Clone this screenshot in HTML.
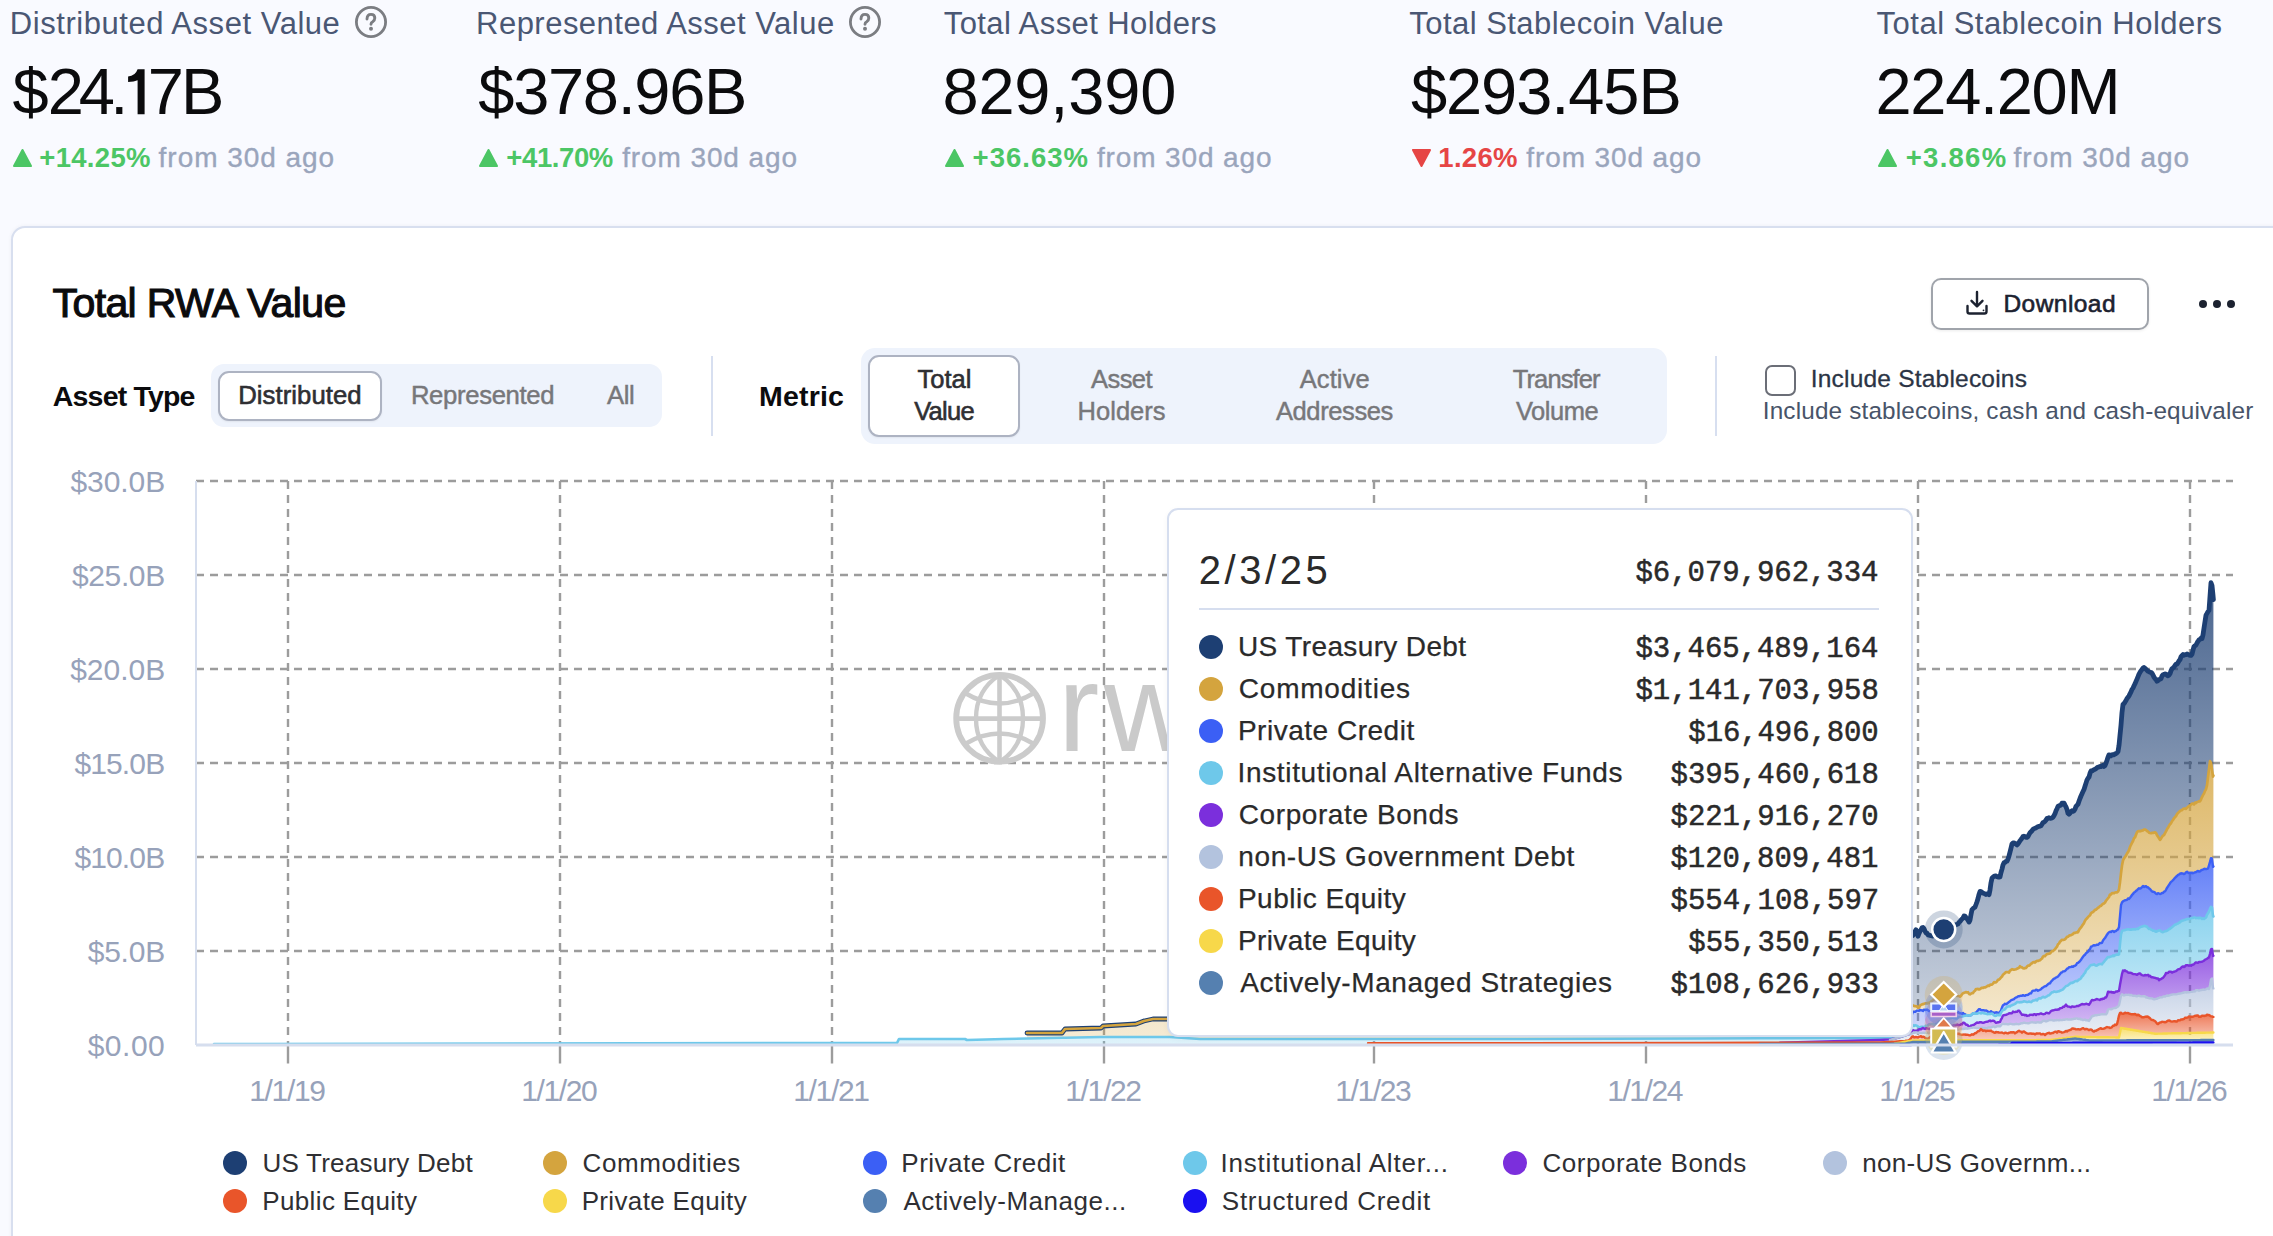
<!DOCTYPE html><html><head><meta charset="utf-8"><style>
html,body{margin:0;padding:0}
body{width:2273px;height:1236px;overflow:hidden;background:#f9faff;position:relative;font-family:'Liberation Sans', sans-serif}
.t{position:absolute;white-space:nowrap;line-height:1}
.a{position:absolute;box-sizing:border-box}
</style></head><body>
<div class="t" style="left:9.86px;top:7.76px;font-size:31px;color:#4a5774;font-weight:normal;letter-spacing:0.536px;font-family:'Liberation Sans', sans-serif;">Distributed Asset Value</div>
<div class="t" style="left:12.55px;top:59.28px;font-size:65px;color:#0b0b0d;font-weight:normal;letter-spacing:0.000px;font-family:'Liberation Sans', sans-serif;">$</div>
<div class="t" style="left:47.65px;top:59.28px;font-size:65px;color:#0b0b0d;font-weight:normal;letter-spacing:0.000px;font-family:'Liberation Sans', sans-serif;">2</div>
<div class="t" style="left:78.87px;top:59.28px;font-size:65px;color:#0b0b0d;font-weight:normal;letter-spacing:0.000px;font-family:'Liberation Sans', sans-serif;">4</div>
<div class="t" style="left:110.28px;top:59.28px;font-size:65px;color:#0b0b0d;font-weight:normal;letter-spacing:0.000px;font-family:'Liberation Sans', sans-serif;">.</div>
<div class="t" style="left:147.69px;top:59.28px;font-size:65px;color:#0b0b0d;font-weight:normal;letter-spacing:0.000px;font-family:'Liberation Sans', sans-serif;">7</div>
<div class="t" style="left:181.07px;top:59.28px;font-size:65px;color:#0b0b0d;font-weight:normal;letter-spacing:0.000px;font-family:'Liberation Sans', sans-serif;">B</div>
<svg class="a" style="left:120px;top:60px" width="30" height="60" viewBox="120 60 30 60"><path d="M137.6 69.2 H144.6 V114.3 H137.6 V80.2 Q134.2 81.9 128.1 81.9 V76.4 Q135.3 76 137.6 69.2 Z" fill="#0b0b0d"/></svg>
<svg class="a" style="left:11.8px;top:148px" width="21" height="20" viewBox="0 0 21 20"><path d="M10.5 2 L19 18 L2 18 Z" fill="#4cc665" stroke="#4cc665" stroke-width="2" stroke-linejoin="round"/></svg>
<div class="t" style="left:39.34px;top:144.02px;font-size:27.5px;color:#4cc665;font-weight:bold;letter-spacing:0.293px;font-family:'Liberation Sans', sans-serif;">+14.25%</div>
<div class="t" style="left:158.61px;top:143.60px;font-size:28px;color:#9aa5bc;font-weight:normal;letter-spacing:0.960px;font-family:'Liberation Sans', sans-serif;-webkit-text-stroke:0.35px #9aa5bc;">from 30d ago</div>
<div class="t" style="left:476.06px;top:7.76px;font-size:31px;color:#4a5774;font-weight:normal;letter-spacing:0.480px;font-family:'Liberation Sans', sans-serif;">Represented Asset Value</div>
<div class="t" style="left:478.35px;top:59.28px;font-size:65px;color:#0b0b0d;font-weight:normal;letter-spacing:-1.329px;font-family:'Liberation Sans', sans-serif;">$378.96B</div>
<svg class="a" style="left:478.0px;top:148px" width="21" height="20" viewBox="0 0 21 20"><path d="M10.5 2 L19 18 L2 18 Z" fill="#4cc665" stroke="#4cc665" stroke-width="2" stroke-linejoin="round"/></svg>
<div class="t" style="left:506.35px;top:144.02px;font-size:27.5px;color:#4cc665;font-weight:bold;letter-spacing:-0.407px;font-family:'Liberation Sans', sans-serif;">+41.70%</div>
<div class="t" style="left:622.21px;top:143.60px;font-size:28px;color:#9aa5bc;font-weight:normal;letter-spacing:0.888px;font-family:'Liberation Sans', sans-serif;-webkit-text-stroke:0.35px #9aa5bc;">from 30d ago</div>
<div class="t" style="left:943.72px;top:7.76px;font-size:31px;color:#4a5774;font-weight:normal;letter-spacing:0.419px;font-family:'Liberation Sans', sans-serif;">Total Asset Holders</div>
<div class="t" style="left:942.41px;top:59.28px;font-size:65px;color:#0b0b0d;font-weight:normal;letter-spacing:-0.168px;font-family:'Liberation Sans', sans-serif;">829,390</div>
<svg class="a" style="left:944.0px;top:148px" width="21" height="20" viewBox="0 0 21 20"><path d="M10.5 2 L19 18 L2 18 Z" fill="#4cc665" stroke="#4cc665" stroke-width="2" stroke-linejoin="round"/></svg>
<div class="t" style="left:972.55px;top:144.02px;font-size:27.5px;color:#4cc665;font-weight:bold;letter-spacing:1.026px;font-family:'Liberation Sans', sans-serif;">+36.63%</div>
<div class="t" style="left:1096.91px;top:143.60px;font-size:28px;color:#9aa5bc;font-weight:normal;letter-spacing:0.879px;font-family:'Liberation Sans', sans-serif;-webkit-text-stroke:0.35px #9aa5bc;">from 30d ago</div>
<div class="t" style="left:1409.32px;top:7.76px;font-size:31px;color:#4a5774;font-weight:normal;letter-spacing:0.457px;font-family:'Liberation Sans', sans-serif;">Total Stablecoin Value</div>
<div class="t" style="left:1410.95px;top:59.28px;font-size:65px;color:#0b0b0d;font-weight:normal;letter-spacing:-1.071px;font-family:'Liberation Sans', sans-serif;">$293.45B</div>
<svg class="a" style="left:1410.6px;top:148px" width="21" height="20" viewBox="0 0 21 20"><path d="M2 2 L19 2 L10.5 18 Z" fill="#e64545" stroke="#e64545" stroke-width="2" stroke-linejoin="round"/></svg>
<div class="t" style="left:1438.30px;top:144.02px;font-size:27.5px;color:#e64545;font-weight:bold;letter-spacing:0.314px;font-family:'Liberation Sans', sans-serif;">1.26%</div>
<div class="t" style="left:1526.31px;top:143.60px;font-size:28px;color:#9aa5bc;font-weight:normal;letter-spacing:0.888px;font-family:'Liberation Sans', sans-serif;-webkit-text-stroke:0.35px #9aa5bc;">from 30d ago</div>
<div class="t" style="left:1876.62px;top:7.76px;font-size:31px;color:#4a5774;font-weight:normal;letter-spacing:0.487px;font-family:'Liberation Sans', sans-serif;">Total Stablecoin Holders</div>
<div class="t" style="left:1875.45px;top:59.28px;font-size:65px;color:#0b0b0d;font-weight:normal;letter-spacing:-1.300px;font-family:'Liberation Sans', sans-serif;">224.20M</div>
<svg class="a" style="left:1877.0px;top:148px" width="21" height="20" viewBox="0 0 21 20"><path d="M10.5 2 L19 18 L2 18 Z" fill="#4cc665" stroke="#4cc665" stroke-width="2" stroke-linejoin="round"/></svg>
<div class="t" style="left:1905.75px;top:144.02px;font-size:27.5px;color:#4cc665;font-weight:bold;letter-spacing:1.269px;font-family:'Liberation Sans', sans-serif;">+3.86%</div>
<div class="t" style="left:2013.61px;top:143.60px;font-size:28px;color:#9aa5bc;font-weight:normal;letter-spacing:0.960px;font-family:'Liberation Sans', sans-serif;-webkit-text-stroke:0.35px #9aa5bc;">from 30d ago</div>
<svg class="a" style="left:354px;top:5.1px" width="34" height="34" viewBox="0 0 34 34"><circle cx="17" cy="17" r="14.6" fill="none" stroke="#7b7d82" stroke-width="2.8"/><path d="M13 14 Q13.2 9.4 17 9.4 Q20.8 9.4 20.8 13.1 Q20.8 15.5 18.7 16.7 Q17 17.6 17 19.2" fill="none" stroke="#7b7d82" stroke-width="2.9" stroke-linecap="round" stroke-linejoin="round"/><circle cx="17" cy="23.8" r="2" fill="#7b7d82"/></svg>
<svg class="a" style="left:848px;top:5.1px" width="34" height="34" viewBox="0 0 34 34"><circle cx="17" cy="17" r="14.6" fill="none" stroke="#7b7d82" stroke-width="2.8"/><path d="M13 14 Q13.2 9.4 17 9.4 Q20.8 9.4 20.8 13.1 Q20.8 15.5 18.7 16.7 Q17 17.6 17 19.2" fill="none" stroke="#7b7d82" stroke-width="2.9" stroke-linecap="round" stroke-linejoin="round"/><circle cx="17" cy="23.8" r="2" fill="#7b7d82"/></svg>
<div class="a" style="left:11px;top:226px;width:2300px;height:1100px;border:2px solid #d8dfef;border-radius:14px;background:#fff;box-shadow:0 0 4px rgba(20,30,60,0.05)"></div>
<div class="t" style="left:52.60px;top:283.09px;font-size:41px;color:#0b0b0d;font-weight:normal;letter-spacing:-0.623px;font-family:'Liberation Sans', sans-serif;-webkit-text-stroke:1.1px #0b0b0d;">Total RWA Value</div>
<div class="a" style="left:1931px;top:278px;width:218px;height:52px;border:2px solid #a0a4ab;border-radius:10px;background:#fff;box-shadow:0 1px 3px rgba(0,0,0,0.08)"></div>
<svg class="a" style="left:1962px;top:288px" width="30" height="30" viewBox="0 0 30 30"><path d="M15 4 V18 M9.5 12.8 L15 18.3 L20.5 12.8" fill="none" stroke="#1c2230" stroke-width="2.4" stroke-linecap="round" stroke-linejoin="round"/><path d="M5.5 18 V23.5 Q5.5 25.5 7.5 25.5 H22.5 Q24.5 25.5 24.5 23.5 V18" fill="none" stroke="#1c2230" stroke-width="2.4" stroke-linecap="round" stroke-linejoin="round"/><circle cx="21.5" cy="22.3" r="0.9" fill="#1c2230"/></svg>
<div class="t" style="left:2003.49px;top:291.86px;font-size:24.5px;color:#1c2230;font-weight:normal;letter-spacing:0.447px;font-family:'Liberation Sans', sans-serif;-webkit-text-stroke:0.6px #1c2230;">Download</div>
<div class="a" style="left:2199px;top:300px;width:8px;height:8px;border-radius:50%;background:#1c2230"></div>
<div class="a" style="left:2213px;top:300px;width:8px;height:8px;border-radius:50%;background:#1c2230"></div>
<div class="a" style="left:2227px;top:300px;width:8px;height:8px;border-radius:50%;background:#1c2230"></div>
<div class="t" style="left:52.82px;top:381.57px;font-size:28.5px;color:#0b0b0d;font-weight:bold;letter-spacing:-0.821px;font-family:'Liberation Sans', sans-serif;">Asset Type</div>
<div class="a" style="left:211px;top:364px;width:451px;height:63px;border-radius:13px;background:#eef3fc"></div>
<div class="a" style="left:218px;top:371px;width:164px;height:50px;border:2px solid #adb3c2;border-radius:11px;background:#fff;box-shadow:0 1px 2px rgba(0,0,0,0.06)"></div>
<div class="t" style="left:238.19px;top:382.84px;font-size:25.7px;color:#2f2f33;font-weight:normal;letter-spacing:0.061px;font-family:'Liberation Sans', sans-serif;-webkit-text-stroke:0.6px #2f2f33;">Distributed</div>
<div class="t" style="left:410.89px;top:382.84px;font-size:25.7px;color:#77777a;font-weight:normal;letter-spacing:-0.341px;font-family:'Liberation Sans', sans-serif;-webkit-text-stroke:0.45px #77777a;">Represented</div>
<div class="t" style="left:606.95px;top:382.84px;font-size:25.7px;color:#77777a;font-weight:normal;letter-spacing:-0.403px;font-family:'Liberation Sans', sans-serif;-webkit-text-stroke:0.45px #77777a;">All</div>
<div class="a" style="left:711px;top:356px;width:2px;height:80px;background:#d7dff0"></div>
<div class="t" style="left:759.12px;top:381.57px;font-size:28.5px;color:#0b0b0d;font-weight:bold;letter-spacing:0.155px;font-family:'Liberation Sans', sans-serif;">Metric</div>
<div class="a" style="left:861px;top:348px;width:806px;height:96px;border-radius:14px;background:#eef3fc"></div>
<div class="a" style="left:868px;top:355px;width:152px;height:82px;border:2px solid #adb3c2;border-radius:11px;background:#fff;box-shadow:0 1px 2px rgba(0,0,0,0.06)"></div>
<div class="t" style="left:917.54px;top:366.61px;font-size:25.5px;color:#2f2f33;font-weight:normal;letter-spacing:0.022px;font-family:'Liberation Sans', sans-serif;-webkit-text-stroke:0.6px #2f2f33;">Total</div>
<div class="t" style="left:914.20px;top:398.71px;font-size:25.5px;color:#2f2f33;font-weight:normal;letter-spacing:-0.698px;font-family:'Liberation Sans', sans-serif;-webkit-text-stroke:0.6px #2f2f33;">Value</div>
<div class="t" style="left:1091.05px;top:366.61px;font-size:25.5px;color:#77777a;font-weight:normal;letter-spacing:-0.561px;font-family:'Liberation Sans', sans-serif;-webkit-text-stroke:0.45px #77777a;">Asset</div>
<div class="t" style="left:1077.61px;top:398.71px;font-size:25.5px;color:#77777a;font-weight:normal;letter-spacing:0.006px;font-family:'Liberation Sans', sans-serif;-webkit-text-stroke:0.45px #77777a;">Holders</div>
<div class="t" style="left:1299.65px;top:366.61px;font-size:25.5px;color:#77777a;font-weight:normal;letter-spacing:0.127px;font-family:'Liberation Sans', sans-serif;-webkit-text-stroke:0.45px #77777a;">Active</div>
<div class="t" style="left:1275.95px;top:398.71px;font-size:25.5px;color:#77777a;font-weight:normal;letter-spacing:-0.390px;font-family:'Liberation Sans', sans-serif;-webkit-text-stroke:0.45px #77777a;">Addresses</div>
<div class="t" style="left:1512.74px;top:366.61px;font-size:25.5px;color:#77777a;font-weight:normal;letter-spacing:-0.875px;font-family:'Liberation Sans', sans-serif;-webkit-text-stroke:0.45px #77777a;">Transfer</div>
<div class="t" style="left:1515.90px;top:398.71px;font-size:25.5px;color:#77777a;font-weight:normal;letter-spacing:-0.464px;font-family:'Liberation Sans', sans-serif;-webkit-text-stroke:0.45px #77777a;">Volume</div>
<div class="a" style="left:1715px;top:356px;width:2px;height:80px;background:#d7dff0"></div>
<div class="a" style="left:1765px;top:365px;width:31px;height:31px;border:2px solid #6b6e77;border-radius:7px;background:#fff"></div>
<div class="t" style="left:1810.75px;top:367.26px;font-size:24.5px;color:#2b3445;font-weight:normal;letter-spacing:0.204px;font-family:'Liberation Sans', sans-serif;-webkit-text-stroke:0.3px #2b3445;">Include Stablecoins</div>
<div class="t" style="left:1762.76px;top:398.83px;font-size:24.3px;color:#485469;font-weight:normal;letter-spacing:0.163px;font-family:'Liberation Sans', sans-serif;">Include stablecoins, cash and cash-equivaler</div>
<div class="t" style="left:70.40px;top:466.61px;font-size:30px;color:#97a2ba;font-weight:normal;letter-spacing:-0.062px;font-family:'Liberation Sans', sans-serif;">$30.0B</div>
<div class="t" style="left:72.00px;top:560.61px;font-size:30px;color:#97a2ba;font-weight:normal;letter-spacing:-0.382px;font-family:'Liberation Sans', sans-serif;">$25.0B</div>
<div class="t" style="left:70.20px;top:654.61px;font-size:30px;color:#97a2ba;font-weight:normal;letter-spacing:-0.022px;font-family:'Liberation Sans', sans-serif;">$20.0B</div>
<div class="t" style="left:74.40px;top:748.61px;font-size:30px;color:#97a2ba;font-weight:normal;letter-spacing:-0.862px;font-family:'Liberation Sans', sans-serif;">$15.0B</div>
<div class="t" style="left:74.40px;top:842.61px;font-size:30px;color:#97a2ba;font-weight:normal;letter-spacing:-0.862px;font-family:'Liberation Sans', sans-serif;">$10.0B</div>
<div class="t" style="left:87.70px;top:936.61px;font-size:30px;color:#97a2ba;font-weight:normal;letter-spacing:-0.233px;font-family:'Liberation Sans', sans-serif;">$5.0B</div>
<div class="t" style="left:87.70px;top:1030.61px;font-size:30px;color:#97a2ba;font-weight:normal;letter-spacing:0.495px;font-family:'Liberation Sans', sans-serif;">$0.00</div>
<div class="t" style="left:249.22px;top:1076.31px;font-size:30px;color:#97a2ba;font-weight:normal;letter-spacing:-1.342px;font-family:'Liberation Sans', sans-serif;">1/1/19</div>
<div class="t" style="left:521.22px;top:1076.31px;font-size:30px;color:#97a2ba;font-weight:normal;letter-spacing:-1.396px;font-family:'Liberation Sans', sans-serif;">1/1/20</div>
<div class="t" style="left:793.22px;top:1076.31px;font-size:30px;color:#97a2ba;font-weight:normal;letter-spacing:-1.336px;font-family:'Liberation Sans', sans-serif;">1/1/21</div>
<div class="t" style="left:1065.22px;top:1076.31px;font-size:30px;color:#97a2ba;font-weight:normal;letter-spacing:-1.324px;font-family:'Liberation Sans', sans-serif;">1/1/22</div>
<div class="t" style="left:1335.22px;top:1076.31px;font-size:30px;color:#97a2ba;font-weight:normal;letter-spacing:-1.366px;font-family:'Liberation Sans', sans-serif;">1/1/23</div>
<div class="t" style="left:1607.22px;top:1076.31px;font-size:30px;color:#97a2ba;font-weight:normal;letter-spacing:-1.450px;font-family:'Liberation Sans', sans-serif;">1/1/24</div>
<div class="t" style="left:1879.22px;top:1076.31px;font-size:30px;color:#97a2ba;font-weight:normal;letter-spacing:-1.378px;font-family:'Liberation Sans', sans-serif;">1/1/25</div>
<div class="t" style="left:2151.22px;top:1076.31px;font-size:30px;color:#97a2ba;font-weight:normal;letter-spacing:-1.366px;font-family:'Liberation Sans', sans-serif;">1/1/26</div>
<svg class="a" style="left:0;top:0" width="2273" height="1236" viewBox="0 0 2273 1236">
<line x1="196" y1="481" x2="2233" y2="481" stroke="#9c9c9c" stroke-width="2.4" stroke-dasharray="8 6"/>
<line x1="196" y1="575" x2="2233" y2="575" stroke="#9c9c9c" stroke-width="2.4" stroke-dasharray="8 6"/>
<line x1="196" y1="669" x2="2233" y2="669" stroke="#9c9c9c" stroke-width="2.4" stroke-dasharray="8 6"/>
<line x1="196" y1="763" x2="2233" y2="763" stroke="#9c9c9c" stroke-width="2.4" stroke-dasharray="8 6"/>
<line x1="196" y1="857" x2="2233" y2="857" stroke="#9c9c9c" stroke-width="2.4" stroke-dasharray="8 6"/>
<line x1="196" y1="951" x2="2233" y2="951" stroke="#9c9c9c" stroke-width="2.4" stroke-dasharray="8 6"/>
<line x1="288" y1="481" x2="288" y2="1045" stroke="#9c9c9c" stroke-width="2.4" stroke-dasharray="8 6"/>
<line x1="288" y1="1045" x2="288" y2="1063.5" stroke="#9c9c9c" stroke-width="2.4"/>
<line x1="560" y1="481" x2="560" y2="1045" stroke="#9c9c9c" stroke-width="2.4" stroke-dasharray="8 6"/>
<line x1="560" y1="1045" x2="560" y2="1063.5" stroke="#9c9c9c" stroke-width="2.4"/>
<line x1="832" y1="481" x2="832" y2="1045" stroke="#9c9c9c" stroke-width="2.4" stroke-dasharray="8 6"/>
<line x1="832" y1="1045" x2="832" y2="1063.5" stroke="#9c9c9c" stroke-width="2.4"/>
<line x1="1104" y1="481" x2="1104" y2="1045" stroke="#9c9c9c" stroke-width="2.4" stroke-dasharray="8 6"/>
<line x1="1104" y1="1045" x2="1104" y2="1063.5" stroke="#9c9c9c" stroke-width="2.4"/>
<line x1="1374" y1="481" x2="1374" y2="1045" stroke="#9c9c9c" stroke-width="2.4" stroke-dasharray="8 6"/>
<line x1="1374" y1="1045" x2="1374" y2="1063.5" stroke="#9c9c9c" stroke-width="2.4"/>
<line x1="1646" y1="481" x2="1646" y2="1045" stroke="#9c9c9c" stroke-width="2.4" stroke-dasharray="8 6"/>
<line x1="1646" y1="1045" x2="1646" y2="1063.5" stroke="#9c9c9c" stroke-width="2.4"/>
<line x1="1918" y1="481" x2="1918" y2="1045" stroke="#9c9c9c" stroke-width="2.4" stroke-dasharray="8 6"/>
<line x1="1918" y1="1045" x2="1918" y2="1063.5" stroke="#9c9c9c" stroke-width="2.4"/>
<line x1="2190" y1="481" x2="2190" y2="1045" stroke="#9c9c9c" stroke-width="2.4" stroke-dasharray="8 6"/>
<line x1="2190" y1="1045" x2="2190" y2="1063.5" stroke="#9c9c9c" stroke-width="2.4"/>
<line x1="196" y1="481" x2="196" y2="1045" stroke="#d6deee" stroke-width="2"/>
<defs>
<linearGradient id="g0" x1="0" y1="0" x2="0" y2="1"><stop offset="0" stop-color="#1a10f0" stop-opacity="0.8"/><stop offset="1" stop-color="#1a10f0" stop-opacity="0.22"/></linearGradient>
<linearGradient id="g1" x1="0" y1="0" x2="0" y2="1"><stop offset="0" stop-color="#5580b0" stop-opacity="0.8"/><stop offset="1" stop-color="#5580b0" stop-opacity="0.22"/></linearGradient>
<linearGradient id="g2" x1="0" y1="0" x2="0" y2="1"><stop offset="0" stop-color="#f7d84a" stop-opacity="0.8"/><stop offset="1" stop-color="#f7d84a" stop-opacity="0.22"/></linearGradient>
<linearGradient id="g3" x1="0" y1="0" x2="0" y2="1"><stop offset="0" stop-color="#e9552a" stop-opacity="0.8"/><stop offset="1" stop-color="#e9552a" stop-opacity="0.22"/></linearGradient>
<linearGradient id="g4" x1="0" y1="0" x2="0" y2="1"><stop offset="0" stop-color="#b3c3de" stop-opacity="0.8"/><stop offset="1" stop-color="#b3c3de" stop-opacity="0.22"/></linearGradient>
<linearGradient id="g5" x1="0" y1="0" x2="0" y2="1"><stop offset="0" stop-color="#7b2fdc" stop-opacity="0.8"/><stop offset="1" stop-color="#7b2fdc" stop-opacity="0.22"/></linearGradient>
<linearGradient id="g6" x1="0" y1="0" x2="0" y2="1"><stop offset="0" stop-color="#6ec8ea" stop-opacity="0.8"/><stop offset="1" stop-color="#6ec8ea" stop-opacity="0.22"/></linearGradient>
<linearGradient id="g7" x1="0" y1="0" x2="0" y2="1"><stop offset="0" stop-color="#3b5ff5" stop-opacity="0.8"/><stop offset="1" stop-color="#3b5ff5" stop-opacity="0.22"/></linearGradient>
<linearGradient id="g8" x1="0" y1="0" x2="0" y2="1"><stop offset="0" stop-color="#d4a43e" stop-opacity="0.8"/><stop offset="1" stop-color="#d4a43e" stop-opacity="0.22"/></linearGradient>
<linearGradient id="g9" x1="0" y1="0" x2="0" y2="1"><stop offset="0" stop-color="#1d3f73" stop-opacity="0.8"/><stop offset="1" stop-color="#1d3f73" stop-opacity="0.22"/></linearGradient>
</defs>
<polygon points="1900,1045.0 1905,1045.0 1906,1045.0 1907,1045.0 1908,1045.0 1909,1045.0 1910,1045.0 1911,1045.0 1912,1044.9 1913,1044.9 1914,1044.9 1915,1044.9 1916,1044.9 1917,1044.9 1918,1044.9 1919,1044.9 1920,1044.9 1921,1044.9 1922,1044.9 1923,1044.9 1924,1044.9 1925,1044.9 1926,1044.9 1927,1044.9 1928,1044.9 1929,1044.9 1930,1044.9 1931,1044.9 1932,1044.9 1933,1044.8 1934,1044.8 1935,1044.8 1936,1044.8 1937,1044.8 1938,1044.8 1939,1044.8 1940,1044.8 1941,1044.8 1942,1044.8 1943,1044.8 1944,1044.8 1945,1044.8 1946,1044.8 1947,1044.8 1948,1044.8 1949,1044.8 1950,1044.8 1951,1044.8 1952,1044.8 1953,1044.8 1954,1044.8 1955,1044.8 1956,1044.7 1957,1044.7 1958,1044.7 1959,1044.7 1960,1044.7 1961,1044.7 1962,1044.7 1963,1044.7 1964,1044.7 1965,1044.7 1966,1044.7 1967,1044.7 1968,1044.7 1969,1044.7 1970,1044.7 1971,1044.7 1972,1044.7 1973,1044.7 1974,1044.7 1975,1044.7 1976,1044.7 1977,1044.7 1978,1044.6 1979,1044.6 1980,1044.6 1981,1044.6 1982,1044.6 1983,1044.6 1984,1044.6 1985,1044.6 1986,1044.6 1987,1044.6 1988,1044.6 1989,1044.6 1990,1044.6 1991,1044.6 1992,1044.6 1993,1044.6 1994,1044.6 1995,1044.6 1996,1044.6 1997,1044.6 1998,1044.6 1999,1044.5 2000,1044.5 2001,1044.5 2002,1044.5 2003,1044.5 2004,1044.5 2005,1044.5 2006,1044.5 2007,1044.5 2008,1044.5 2009,1044.5 2010,1044.5 2011,1043.8 2012,1043.0 2013,1043.0 2014,1043.0 2015,1043.0 2016,1043.0 2017,1043.0 2018,1043.0 2019,1043.0 2020,1043.0 2021,1043.0 2022,1043.0 2023,1043.0 2024,1043.0 2025,1043.0 2026,1043.0 2027,1043.0 2028,1043.0 2029,1043.0 2030,1043.0 2031,1043.0 2032,1043.0 2033,1042.9 2034,1042.9 2035,1042.9 2036,1042.9 2037,1042.9 2038,1042.9 2039,1042.9 2040,1042.9 2041,1042.9 2042,1042.9 2043,1042.9 2044,1042.9 2045,1042.9 2046,1042.9 2047,1042.9 2048,1042.9 2049,1042.9 2050,1042.9 2051,1042.9 2052,1042.9 2053,1042.9 2054,1042.9 2055,1042.9 2056,1042.9 2057,1042.9 2058,1042.9 2059,1042.9 2060,1042.9 2061,1042.9 2062,1042.9 2063,1042.9 2064,1042.9 2065,1042.9 2066,1042.9 2067,1042.9 2068,1042.9 2069,1042.9 2070,1042.9 2071,1042.9 2072,1042.9 2073,1042.8 2074,1042.8 2075,1042.8 2076,1042.8 2077,1042.8 2078,1042.8 2079,1042.8 2080,1042.8 2081,1042.8 2082,1042.8 2083,1042.8 2084,1042.8 2085,1042.8 2086,1042.8 2087,1042.8 2088,1042.8 2089,1042.8 2090,1042.8 2091,1042.8 2092,1042.8 2093,1042.8 2094,1042.8 2095,1042.8 2096,1042.8 2097,1042.8 2098,1042.8 2099,1042.8 2100,1042.8 2101,1042.8 2102,1042.8 2103,1042.8 2104,1042.8 2105,1042.8 2106,1042.8 2107,1042.8 2108,1042.8 2109,1042.8 2110,1042.8 2111,1042.8 2112,1042.8 2113,1042.7 2114,1042.7 2115,1042.7 2116,1042.7 2117,1042.7 2118,1042.7 2119,1042.7 2120,1042.7 2121,1042.7 2122,1042.7 2123,1042.7 2124,1042.7 2125,1042.7 2126,1042.7 2127,1042.7 2128,1042.7 2129,1042.7 2130,1042.7 2131,1042.7 2132,1042.7 2133,1042.7 2134,1042.7 2135,1042.7 2136,1042.7 2137,1042.7 2138,1042.7 2139,1042.7 2140,1042.7 2141,1042.7 2142,1042.7 2143,1042.7 2144,1042.7 2145,1042.7 2146,1042.7 2147,1042.7 2148,1042.7 2149,1042.7 2150,1042.7 2151,1042.7 2152,1042.7 2153,1042.6 2154,1042.6 2155,1042.6 2156,1042.6 2157,1042.6 2158,1042.6 2159,1042.6 2160,1042.6 2161,1042.6 2162,1042.6 2163,1042.6 2164,1042.6 2165,1042.6 2166,1042.6 2167,1042.6 2168,1042.6 2169,1042.6 2170,1042.6 2171,1042.6 2172,1042.6 2173,1042.6 2174,1042.6 2175,1042.6 2176,1042.6 2177,1042.6 2178,1042.6 2179,1042.6 2180,1042.6 2181,1042.6 2182,1042.6 2183,1042.6 2184,1042.6 2185,1042.6 2186,1042.6 2187,1042.6 2188,1042.6 2189,1042.6 2190,1042.6 2191,1042.6 2192,1042.6 2193,1042.5 2194,1042.5 2195,1042.5 2196,1042.5 2197,1042.5 2198,1042.5 2199,1042.5 2200,1042.5 2201,1042.5 2202,1042.5 2203,1042.5 2204,1042.5 2205,1042.5 2206,1042.5 2207,1042.5 2208,1042.5 2209,1042.5 2210,1042.5 2211,1042.5 2212,1042.5 2213,1042.5 2213.4,1042.5 2213.4,1045.0 2213,1045.0 2212,1045.0 2211,1045.0 2210,1045.0 2209,1045.0 2208,1045.0 2207,1045.0 2206,1045.0 2205,1045.0 2204,1045.0 2203,1045.0 2202,1045.0 2201,1045.0 2200,1045.0 2199,1045.0 2198,1045.0 2197,1045.0 2196,1045.0 2195,1045.0 2194,1045.0 2193,1045.0 2192,1045.0 2191,1045.0 2190,1045.0 2189,1045.0 2188,1045.0 2187,1045.0 2186,1045.0 2185,1045.0 2184,1045.0 2183,1045.0 2182,1045.0 2181,1045.0 2180,1045.0 2179,1045.0 2178,1045.0 2177,1045.0 2176,1045.0 2175,1045.0 2174,1045.0 2173,1045.0 2172,1045.0 2171,1045.0 2170,1045.0 2169,1045.0 2168,1045.0 2167,1045.0 2166,1045.0 2165,1045.0 2164,1045.0 2163,1045.0 2162,1045.0 2161,1045.0 2160,1045.0 2159,1045.0 2158,1045.0 2157,1045.0 2156,1045.0 2155,1045.0 2154,1045.0 2153,1045.0 2152,1045.0 2151,1045.0 2150,1045.0 2149,1045.0 2148,1045.0 2147,1045.0 2146,1045.0 2145,1045.0 2144,1045.0 2143,1045.0 2142,1045.0 2141,1045.0 2140,1045.0 2139,1045.0 2138,1045.0 2137,1045.0 2136,1045.0 2135,1045.0 2134,1045.0 2133,1045.0 2132,1045.0 2131,1045.0 2130,1045.0 2129,1045.0 2128,1045.0 2127,1045.0 2126,1045.0 2125,1045.0 2124,1045.0 2123,1045.0 2122,1045.0 2121,1045.0 2120,1045.0 2119,1045.0 2118,1045.0 2117,1045.0 2116,1045.0 2115,1045.0 2114,1045.0 2113,1045.0 2112,1045.0 2111,1045.0 2110,1045.0 2109,1045.0 2108,1045.0 2107,1045.0 2106,1045.0 2105,1045.0 2104,1045.0 2103,1045.0 2102,1045.0 2101,1045.0 2100,1045.0 2099,1045.0 2098,1045.0 2097,1045.0 2096,1045.0 2095,1045.0 2094,1045.0 2093,1045.0 2092,1045.0 2091,1045.0 2090,1045.0 2089,1045.0 2088,1045.0 2087,1045.0 2086,1045.0 2085,1045.0 2084,1045.0 2083,1045.0 2082,1045.0 2081,1045.0 2080,1045.0 2079,1045.0 2078,1045.0 2077,1045.0 2076,1045.0 2075,1045.0 2074,1045.0 2073,1045.0 2072,1045.0 2071,1045.0 2070,1045.0 2069,1045.0 2068,1045.0 2067,1045.0 2066,1045.0 2065,1045.0 2064,1045.0 2063,1045.0 2062,1045.0 2061,1045.0 2060,1045.0 2059,1045.0 2058,1045.0 2057,1045.0 2056,1045.0 2055,1045.0 2054,1045.0 2053,1045.0 2052,1045.0 2051,1045.0 2050,1045.0 2049,1045.0 2048,1045.0 2047,1045.0 2046,1045.0 2045,1045.0 2044,1045.0 2043,1045.0 2042,1045.0 2041,1045.0 2040,1045.0 2039,1045.0 2038,1045.0 2037,1045.0 2036,1045.0 2035,1045.0 2034,1045.0 2033,1045.0 2032,1045.0 2031,1045.0 2030,1045.0 2029,1045.0 2028,1045.0 2027,1045.0 2026,1045.0 2025,1045.0 2024,1045.0 2023,1045.0 2022,1045.0 2021,1045.0 2020,1045.0 2019,1045.0 2018,1045.0 2017,1045.0 2016,1045.0 2015,1045.0 2014,1045.0 2013,1045.0 2012,1045.0 2011,1045.0 2010,1045.0 2009,1045.0 2008,1045.0 2007,1045.0 2006,1045.0 2005,1045.0 2004,1045.0 2003,1045.0 2002,1045.0 2001,1045.0 2000,1045.0 1999,1045.0 1998,1045.0 1997,1045.0 1996,1045.0 1995,1045.0 1994,1045.0 1993,1045.0 1992,1045.0 1991,1045.0 1990,1045.0 1989,1045.0 1988,1045.0 1987,1045.0 1986,1045.0 1985,1045.0 1984,1045.0 1983,1045.0 1982,1045.0 1981,1045.0 1980,1045.0 1979,1045.0 1978,1045.0 1977,1045.0 1976,1045.0 1975,1045.0 1974,1045.0 1973,1045.0 1972,1045.0 1971,1045.0 1970,1045.0 1969,1045.0 1968,1045.0 1967,1045.0 1966,1045.0 1965,1045.0 1964,1045.0 1963,1045.0 1962,1045.0 1961,1045.0 1960,1045.0 1959,1045.0 1958,1045.0 1957,1045.0 1956,1045.0 1955,1045.0 1954,1045.0 1953,1045.0 1952,1045.0 1951,1045.0 1950,1045.0 1949,1045.0 1948,1045.0 1947,1045.0 1946,1045.0 1945,1045.0 1944,1045.0 1943,1045.0 1942,1045.0 1941,1045.0 1940,1045.0 1939,1045.0 1938,1045.0 1937,1045.0 1936,1045.0 1935,1045.0 1934,1045.0 1933,1045.0 1932,1045.0 1931,1045.0 1930,1045.0 1929,1045.0 1928,1045.0 1927,1045.0 1926,1045.0 1925,1045.0 1924,1045.0 1923,1045.0 1922,1045.0 1921,1045.0 1920,1045.0 1919,1045.0 1918,1045.0 1917,1045.0 1916,1045.0 1915,1045.0 1914,1045.0 1913,1045.0 1912,1045.0 1911,1045.0 1910,1045.0 1909,1045.0 1908,1045.0 1907,1045.0 1906,1045.0 1905,1045.0 1900,1045.0" fill="url(#g0)"/>
<polygon points="1760,1044.0 1779.9,1043.9 1780,1043.9 1869.9,1043.7 1870,1043.7 1879.9,1043.7 1880,1043.7 1889.9,1043.6 1890,1043.6 1894.9,1043.6 1895,1043.6 1899.9,1043.6 1900,1043.6 1905,1043.6 1906,1043.4 1907,1043.2 1908,1043.0 1909,1042.8 1910,1042.6 1911,1042.4 1912,1042.2 1913,1042.0 1914,1042.0 1915,1042.0 1916,1042.0 1917,1042.0 1918,1042.0 1919,1042.0 1920,1042.0 1921,1042.0 1922,1042.0 1923,1042.0 1924,1042.0 1925,1042.0 1926,1042.0 1927,1041.9 1928,1041.9 1929,1041.9 1930,1041.9 1931,1041.9 1932,1041.9 1933,1041.9 1934,1041.9 1935,1041.9 1936,1041.9 1937,1041.9 1938,1041.9 1939,1041.9 1940,1041.9 1941,1041.9 1942,1041.9 1943,1041.9 1944,1041.9 1945,1041.9 1946,1041.9 1947,1041.9 1948,1041.9 1949,1041.9 1950,1041.9 1951,1041.9 1952,1041.9 1953,1041.9 1954,1041.9 1955,1041.8 1956,1041.8 1957,1041.8 1958,1041.8 1959,1041.8 1960,1041.8 1961,1041.8 1962,1041.8 1963,1041.8 1964,1041.8 1965,1041.8 1966,1041.8 1967,1041.8 1968,1041.8 1969,1041.8 1970,1041.8 1971,1041.8 1972,1041.8 1973,1041.8 1974,1041.8 1975,1041.8 1976,1041.8 1977,1041.8 1978,1041.8 1979,1041.8 1980,1041.8 1981,1041.8 1982,1041.7 1983,1041.7 1984,1041.7 1985,1041.7 1986,1041.7 1987,1041.7 1988,1041.7 1989,1041.7 1990,1041.7 1991,1041.7 1992,1041.7 1993,1041.7 1994,1041.7 1995,1041.7 1996,1041.7 1997,1041.7 1998,1041.7 1999,1041.7 2000,1041.7 2001,1041.7 2002,1041.7 2003,1041.7 2004,1041.7 2005,1041.7 2006,1041.7 2007,1041.7 2008,1041.7 2009,1041.6 2010,1041.6 2011,1041.6 2012,1041.6 2013,1041.6 2014,1041.6 2015,1041.6 2016,1041.6 2017,1041.6 2018,1041.6 2019,1041.6 2020,1041.6 2021,1041.6 2022,1041.6 2023,1041.6 2024,1041.6 2025,1041.6 2026,1041.6 2027,1041.6 2028,1041.6 2029,1041.6 2030,1041.6 2031,1041.6 2032,1041.6 2033,1041.6 2034,1041.6 2035,1041.6 2036,1041.6 2037,1041.5 2038,1041.5 2039,1041.5 2040,1041.5 2041,1041.5 2042,1041.5 2043,1041.5 2044,1041.5 2045,1041.5 2046,1041.5 2047,1041.5 2048,1041.5 2049,1041.5 2050,1041.5 2051,1041.4 2052,1041.3 2053,1041.1 2054,1041.0 2055,1040.9 2056,1040.8 2057,1040.7 2058,1040.5 2059,1040.4 2060,1040.3 2061,1040.2 2062,1040.1 2063,1039.9 2064,1039.8 2065,1039.7 2066,1039.6 2067,1039.5 2068,1039.3 2069,1039.2 2070,1039.1 2071,1039.0 2072,1038.9 2073,1038.7 2074,1038.6 2075,1038.5 2076,1038.6 2077,1038.8 2078,1038.9 2079,1039.0 2080,1039.2 2081,1039.3 2082,1039.4 2083,1039.6 2084,1039.7 2085,1039.8 2086,1040.0 2087,1040.1 2088,1040.2 2089,1040.4 2090,1040.5 2091,1040.5 2092,1040.5 2093,1040.5 2094,1040.5 2095,1040.5 2096,1040.5 2097,1040.5 2098,1040.5 2099,1040.5 2100,1040.5 2101,1040.5 2102,1040.5 2103,1040.4 2104,1040.4 2105,1040.4 2106,1040.4 2107,1040.4 2108,1040.4 2109,1040.4 2110,1040.4 2111,1040.4 2112,1040.4 2113,1040.4 2114,1040.4 2115,1040.4 2116,1040.4 2117,1040.4 2118,1040.4 2119,1040.4 2120,1040.4 2121,1040.4 2122,1040.4 2123,1040.4 2124,1040.4 2125,1040.4 2126,1040.4 2127,1040.3 2128,1040.3 2129,1040.3 2130,1040.3 2131,1040.3 2132,1040.3 2133,1040.3 2134,1040.3 2135,1040.3 2136,1040.3 2137,1040.3 2138,1040.3 2139,1040.3 2140,1040.3 2141,1040.3 2142,1040.3 2143,1040.3 2144,1040.3 2145,1040.3 2146,1040.3 2147,1040.3 2148,1040.3 2149,1040.3 2150,1040.3 2151,1040.3 2152,1040.2 2153,1040.2 2154,1040.2 2155,1040.2 2156,1040.2 2157,1040.2 2158,1040.2 2159,1040.2 2160,1040.2 2161,1040.2 2162,1040.2 2163,1040.2 2164,1040.2 2165,1040.2 2166,1040.2 2167,1040.2 2168,1040.2 2169,1040.2 2170,1040.2 2171,1040.2 2172,1040.2 2173,1040.2 2174,1040.2 2175,1040.2 2176,1040.2 2177,1040.1 2178,1040.1 2179,1040.1 2180,1040.1 2181,1040.1 2182,1040.1 2183,1040.1 2184,1040.1 2185,1040.1 2186,1040.1 2187,1040.1 2188,1040.1 2189,1040.1 2190,1040.1 2191,1040.1 2192,1040.1 2193,1040.1 2194,1040.1 2195,1040.1 2196,1040.1 2197,1040.1 2198,1040.1 2199,1040.1 2200,1040.1 2201,1040.0 2202,1040.0 2203,1040.0 2204,1040.0 2205,1040.0 2206,1040.0 2207,1040.0 2208,1040.0 2209,1040.0 2210,1040.0 2211,1040.0 2212,1040.0 2213,1040.0 2213.4,1040.0 2213.4,1042.5 2213,1042.5 2212,1042.5 2211,1042.5 2210,1042.5 2209,1042.5 2208,1042.5 2207,1042.5 2206,1042.5 2205,1042.5 2204,1042.5 2203,1042.5 2202,1042.5 2201,1042.5 2200,1042.5 2199,1042.5 2198,1042.5 2197,1042.5 2196,1042.5 2195,1042.5 2194,1042.5 2193,1042.5 2192,1042.6 2191,1042.6 2190,1042.6 2189,1042.6 2188,1042.6 2187,1042.6 2186,1042.6 2185,1042.6 2184,1042.6 2183,1042.6 2182,1042.6 2181,1042.6 2180,1042.6 2179,1042.6 2178,1042.6 2177,1042.6 2176,1042.6 2175,1042.6 2174,1042.6 2173,1042.6 2172,1042.6 2171,1042.6 2170,1042.6 2169,1042.6 2168,1042.6 2167,1042.6 2166,1042.6 2165,1042.6 2164,1042.6 2163,1042.6 2162,1042.6 2161,1042.6 2160,1042.6 2159,1042.6 2158,1042.6 2157,1042.6 2156,1042.6 2155,1042.6 2154,1042.6 2153,1042.6 2152,1042.7 2151,1042.7 2150,1042.7 2149,1042.7 2148,1042.7 2147,1042.7 2146,1042.7 2145,1042.7 2144,1042.7 2143,1042.7 2142,1042.7 2141,1042.7 2140,1042.7 2139,1042.7 2138,1042.7 2137,1042.7 2136,1042.7 2135,1042.7 2134,1042.7 2133,1042.7 2132,1042.7 2131,1042.7 2130,1042.7 2129,1042.7 2128,1042.7 2127,1042.7 2126,1042.7 2125,1042.7 2124,1042.7 2123,1042.7 2122,1042.7 2121,1042.7 2120,1042.7 2119,1042.7 2118,1042.7 2117,1042.7 2116,1042.7 2115,1042.7 2114,1042.7 2113,1042.7 2112,1042.8 2111,1042.8 2110,1042.8 2109,1042.8 2108,1042.8 2107,1042.8 2106,1042.8 2105,1042.8 2104,1042.8 2103,1042.8 2102,1042.8 2101,1042.8 2100,1042.8 2099,1042.8 2098,1042.8 2097,1042.8 2096,1042.8 2095,1042.8 2094,1042.8 2093,1042.8 2092,1042.8 2091,1042.8 2090,1042.8 2089,1042.8 2088,1042.8 2087,1042.8 2086,1042.8 2085,1042.8 2084,1042.8 2083,1042.8 2082,1042.8 2081,1042.8 2080,1042.8 2079,1042.8 2078,1042.8 2077,1042.8 2076,1042.8 2075,1042.8 2074,1042.8 2073,1042.8 2072,1042.9 2071,1042.9 2070,1042.9 2069,1042.9 2068,1042.9 2067,1042.9 2066,1042.9 2065,1042.9 2064,1042.9 2063,1042.9 2062,1042.9 2061,1042.9 2060,1042.9 2059,1042.9 2058,1042.9 2057,1042.9 2056,1042.9 2055,1042.9 2054,1042.9 2053,1042.9 2052,1042.9 2051,1042.9 2050,1042.9 2049,1042.9 2048,1042.9 2047,1042.9 2046,1042.9 2045,1042.9 2044,1042.9 2043,1042.9 2042,1042.9 2041,1042.9 2040,1042.9 2039,1042.9 2038,1042.9 2037,1042.9 2036,1042.9 2035,1042.9 2034,1042.9 2033,1042.9 2032,1043.0 2031,1043.0 2030,1043.0 2029,1043.0 2028,1043.0 2027,1043.0 2026,1043.0 2025,1043.0 2024,1043.0 2023,1043.0 2022,1043.0 2021,1043.0 2020,1043.0 2019,1043.0 2018,1043.0 2017,1043.0 2016,1043.0 2015,1043.0 2014,1043.0 2013,1043.0 2012,1043.0 2011,1043.8 2010,1044.5 2009,1044.5 2008,1044.5 2007,1044.5 2006,1044.5 2005,1044.5 2004,1044.5 2003,1044.5 2002,1044.5 2001,1044.5 2000,1044.5 1999,1044.5 1998,1044.6 1997,1044.6 1996,1044.6 1995,1044.6 1994,1044.6 1993,1044.6 1992,1044.6 1991,1044.6 1990,1044.6 1989,1044.6 1988,1044.6 1987,1044.6 1986,1044.6 1985,1044.6 1984,1044.6 1983,1044.6 1982,1044.6 1981,1044.6 1980,1044.6 1979,1044.6 1978,1044.6 1977,1044.7 1976,1044.7 1975,1044.7 1974,1044.7 1973,1044.7 1972,1044.7 1971,1044.7 1970,1044.7 1969,1044.7 1968,1044.7 1967,1044.7 1966,1044.7 1965,1044.7 1964,1044.7 1963,1044.7 1962,1044.7 1961,1044.7 1960,1044.7 1959,1044.7 1958,1044.7 1957,1044.7 1956,1044.7 1955,1044.8 1954,1044.8 1953,1044.8 1952,1044.8 1951,1044.8 1950,1044.8 1949,1044.8 1948,1044.8 1947,1044.8 1946,1044.8 1945,1044.8 1944,1044.8 1943,1044.8 1942,1044.8 1941,1044.8 1940,1044.8 1939,1044.8 1938,1044.8 1937,1044.8 1936,1044.8 1935,1044.8 1934,1044.8 1933,1044.8 1932,1044.9 1931,1044.9 1930,1044.9 1929,1044.9 1928,1044.9 1927,1044.9 1926,1044.9 1925,1044.9 1924,1044.9 1923,1044.9 1922,1044.9 1921,1044.9 1920,1044.9 1919,1044.9 1918,1044.9 1917,1044.9 1916,1044.9 1915,1044.9 1914,1044.9 1913,1044.9 1912,1044.9 1911,1045.0 1910,1045.0 1909,1045.0 1908,1045.0 1907,1045.0 1906,1045.0 1905,1045.0 1900,1045.0 1899.9,1045.0 1895,1045.0 1894.9,1045.0 1890,1045.0 1889.9,1045.0 1880,1045.0 1879.9,1045.0 1870,1045.0 1869.9,1045.0 1780,1045.0 1779.9,1045.0 1760,1045.0" fill="url(#g1)"/>
<polygon points="1895,1043.5 1899.9,1042.7 1900,1042.7 1905,1041.8 1906,1041.7 1907,1041.5 1908,1041.3 1909,1041.2 1910,1041.0 1911,1040.8 1912,1040.7 1913,1040.5 1914,1040.5 1915,1040.5 1916,1040.5 1917,1040.5 1918,1040.5 1919,1040.5 1920,1040.5 1921,1040.5 1922,1040.5 1923,1040.5 1924,1040.5 1925,1040.5 1926,1040.5 1927,1040.4 1928,1040.4 1929,1040.4 1930,1040.4 1931,1040.4 1932,1040.4 1933,1040.4 1934,1040.4 1935,1040.4 1936,1040.4 1937,1040.4 1938,1040.4 1939,1040.4 1940,1040.4 1941,1040.4 1942,1040.4 1943,1040.4 1944,1040.4 1945,1040.4 1946,1040.4 1947,1040.4 1948,1040.4 1949,1040.4 1950,1040.4 1951,1040.4 1952,1040.4 1953,1040.4 1954,1040.4 1955,1040.3 1956,1040.3 1957,1040.3 1958,1040.3 1959,1040.3 1960,1040.3 1961,1040.3 1962,1040.3 1963,1040.3 1964,1040.3 1965,1040.3 1966,1040.3 1967,1040.3 1968,1040.3 1969,1040.3 1970,1040.3 1971,1040.3 1972,1040.3 1973,1040.3 1974,1040.3 1975,1040.3 1976,1040.3 1977,1040.3 1978,1040.3 1979,1040.3 1980,1040.3 1981,1040.3 1982,1040.2 1983,1040.2 1984,1040.2 1985,1040.2 1986,1040.2 1987,1040.2 1988,1040.2 1989,1040.2 1990,1040.2 1991,1040.2 1992,1040.2 1993,1040.2 1994,1040.2 1995,1040.2 1996,1040.2 1997,1040.2 1998,1040.2 1999,1040.2 2000,1040.2 2001,1040.2 2002,1040.2 2003,1040.2 2004,1040.2 2005,1040.2 2006,1040.2 2007,1040.2 2008,1040.2 2009,1040.1 2010,1040.1 2011,1040.1 2012,1040.1 2013,1040.1 2014,1040.1 2015,1040.1 2016,1040.1 2017,1040.1 2018,1040.1 2019,1040.1 2020,1040.1 2021,1040.1 2022,1040.1 2023,1040.1 2024,1040.1 2025,1040.1 2026,1040.1 2027,1040.1 2028,1040.1 2029,1040.1 2030,1040.1 2031,1040.1 2032,1040.1 2033,1040.1 2034,1040.1 2035,1040.1 2036,1040.1 2037,1040.0 2038,1040.0 2039,1040.0 2040,1040.0 2041,1040.0 2042,1040.0 2043,1040.0 2044,1040.0 2045,1040.0 2046,1040.0 2047,1040.0 2048,1040.0 2049,1040.0 2050,1040.0 2051,1039.9 2052,1039.7 2053,1039.6 2054,1039.5 2055,1039.4 2056,1039.2 2057,1039.1 2058,1039.0 2059,1038.8 2060,1038.7 2061,1038.6 2062,1038.5 2063,1038.3 2064,1038.2 2065,1038.1 2066,1038.0 2067,1037.8 2068,1037.7 2069,1037.6 2070,1037.4 2071,1037.3 2072,1037.2 2073,1037.1 2074,1036.9 2075,1036.8 2076,1036.8 2077,1036.8 2078,1036.8 2079,1036.9 2080,1036.9 2081,1036.9 2082,1036.9 2083,1036.9 2084,1036.9 2085,1037.0 2086,1037.0 2087,1037.0 2088,1037.0 2089,1037.0 2090,1037.0 2091,1037.1 2092,1037.1 2093,1037.1 2094,1037.1 2095,1037.1 2096,1037.1 2097,1037.2 2098,1037.2 2099,1037.2 2100,1037.2 2101,1037.2 2102,1037.2 2103,1037.2 2104,1037.3 2105,1037.3 2106,1037.3 2107,1037.3 2108,1037.3 2109,1037.3 2110,1037.4 2111,1037.4 2112,1037.4 2113,1037.4 2114,1037.4 2115,1037.4 2116,1037.5 2117,1037.5 2118,1037.5 2119,1037.5 2120,1032.8 2121,1028.0 2122,1028.2 2123,1028.3 2124,1028.5 2125,1028.7 2126,1028.8 2127,1029.0 2128,1029.2 2129,1029.3 2130,1029.5 2131,1029.7 2132,1029.8 2133,1030.0 2134,1030.2 2135,1030.3 2136,1030.5 2137,1030.7 2138,1030.8 2139,1031.0 2140,1031.2 2141,1031.4 2142,1031.5 2143,1031.7 2144,1031.9 2145,1032.0 2146,1032.2 2147,1032.4 2148,1032.5 2149,1032.7 2150,1032.9 2151,1033.0 2152,1033.2 2153,1033.4 2154,1033.5 2155,1033.7 2156,1033.7 2157,1033.7 2158,1033.6 2159,1033.6 2160,1033.6 2161,1033.6 2162,1033.6 2163,1033.5 2164,1033.5 2165,1033.5 2166,1033.5 2167,1033.5 2168,1033.4 2169,1033.4 2170,1033.4 2171,1033.4 2172,1033.3 2173,1033.3 2174,1033.3 2175,1033.3 2176,1033.3 2177,1033.2 2178,1033.2 2179,1033.2 2180,1033.2 2181,1033.2 2182,1033.1 2183,1033.1 2184,1033.1 2185,1033.1 2186,1033.1 2187,1033.0 2188,1033.0 2189,1033.0 2190,1033.0 2191,1033.0 2192,1032.9 2193,1032.9 2194,1032.9 2195,1032.9 2196,1032.9 2197,1032.8 2198,1032.8 2199,1032.8 2200,1032.8 2201,1032.7 2202,1032.7 2203,1032.7 2204,1032.7 2205,1032.7 2206,1032.6 2207,1032.6 2208,1032.6 2209,1032.6 2210,1032.6 2211,1032.5 2212,1032.5 2213,1032.5 2213.4,1032.5 2213.4,1040.0 2213,1040.0 2212,1040.0 2211,1040.0 2210,1040.0 2209,1040.0 2208,1040.0 2207,1040.0 2206,1040.0 2205,1040.0 2204,1040.0 2203,1040.0 2202,1040.0 2201,1040.0 2200,1040.1 2199,1040.1 2198,1040.1 2197,1040.1 2196,1040.1 2195,1040.1 2194,1040.1 2193,1040.1 2192,1040.1 2191,1040.1 2190,1040.1 2189,1040.1 2188,1040.1 2187,1040.1 2186,1040.1 2185,1040.1 2184,1040.1 2183,1040.1 2182,1040.1 2181,1040.1 2180,1040.1 2179,1040.1 2178,1040.1 2177,1040.1 2176,1040.2 2175,1040.2 2174,1040.2 2173,1040.2 2172,1040.2 2171,1040.2 2170,1040.2 2169,1040.2 2168,1040.2 2167,1040.2 2166,1040.2 2165,1040.2 2164,1040.2 2163,1040.2 2162,1040.2 2161,1040.2 2160,1040.2 2159,1040.2 2158,1040.2 2157,1040.2 2156,1040.2 2155,1040.2 2154,1040.2 2153,1040.2 2152,1040.2 2151,1040.3 2150,1040.3 2149,1040.3 2148,1040.3 2147,1040.3 2146,1040.3 2145,1040.3 2144,1040.3 2143,1040.3 2142,1040.3 2141,1040.3 2140,1040.3 2139,1040.3 2138,1040.3 2137,1040.3 2136,1040.3 2135,1040.3 2134,1040.3 2133,1040.3 2132,1040.3 2131,1040.3 2130,1040.3 2129,1040.3 2128,1040.3 2127,1040.3 2126,1040.4 2125,1040.4 2124,1040.4 2123,1040.4 2122,1040.4 2121,1040.4 2120,1040.4 2119,1040.4 2118,1040.4 2117,1040.4 2116,1040.4 2115,1040.4 2114,1040.4 2113,1040.4 2112,1040.4 2111,1040.4 2110,1040.4 2109,1040.4 2108,1040.4 2107,1040.4 2106,1040.4 2105,1040.4 2104,1040.4 2103,1040.4 2102,1040.5 2101,1040.5 2100,1040.5 2099,1040.5 2098,1040.5 2097,1040.5 2096,1040.5 2095,1040.5 2094,1040.5 2093,1040.5 2092,1040.5 2091,1040.5 2090,1040.5 2089,1040.4 2088,1040.2 2087,1040.1 2086,1040.0 2085,1039.8 2084,1039.7 2083,1039.6 2082,1039.4 2081,1039.3 2080,1039.2 2079,1039.0 2078,1038.9 2077,1038.8 2076,1038.6 2075,1038.5 2074,1038.6 2073,1038.7 2072,1038.9 2071,1039.0 2070,1039.1 2069,1039.2 2068,1039.3 2067,1039.5 2066,1039.6 2065,1039.7 2064,1039.8 2063,1039.9 2062,1040.1 2061,1040.2 2060,1040.3 2059,1040.4 2058,1040.5 2057,1040.7 2056,1040.8 2055,1040.9 2054,1041.0 2053,1041.1 2052,1041.3 2051,1041.4 2050,1041.5 2049,1041.5 2048,1041.5 2047,1041.5 2046,1041.5 2045,1041.5 2044,1041.5 2043,1041.5 2042,1041.5 2041,1041.5 2040,1041.5 2039,1041.5 2038,1041.5 2037,1041.5 2036,1041.6 2035,1041.6 2034,1041.6 2033,1041.6 2032,1041.6 2031,1041.6 2030,1041.6 2029,1041.6 2028,1041.6 2027,1041.6 2026,1041.6 2025,1041.6 2024,1041.6 2023,1041.6 2022,1041.6 2021,1041.6 2020,1041.6 2019,1041.6 2018,1041.6 2017,1041.6 2016,1041.6 2015,1041.6 2014,1041.6 2013,1041.6 2012,1041.6 2011,1041.6 2010,1041.6 2009,1041.6 2008,1041.7 2007,1041.7 2006,1041.7 2005,1041.7 2004,1041.7 2003,1041.7 2002,1041.7 2001,1041.7 2000,1041.7 1999,1041.7 1998,1041.7 1997,1041.7 1996,1041.7 1995,1041.7 1994,1041.7 1993,1041.7 1992,1041.7 1991,1041.7 1990,1041.7 1989,1041.7 1988,1041.7 1987,1041.7 1986,1041.7 1985,1041.7 1984,1041.7 1983,1041.7 1982,1041.7 1981,1041.8 1980,1041.8 1979,1041.8 1978,1041.8 1977,1041.8 1976,1041.8 1975,1041.8 1974,1041.8 1973,1041.8 1972,1041.8 1971,1041.8 1970,1041.8 1969,1041.8 1968,1041.8 1967,1041.8 1966,1041.8 1965,1041.8 1964,1041.8 1963,1041.8 1962,1041.8 1961,1041.8 1960,1041.8 1959,1041.8 1958,1041.8 1957,1041.8 1956,1041.8 1955,1041.8 1954,1041.9 1953,1041.9 1952,1041.9 1951,1041.9 1950,1041.9 1949,1041.9 1948,1041.9 1947,1041.9 1946,1041.9 1945,1041.9 1944,1041.9 1943,1041.9 1942,1041.9 1941,1041.9 1940,1041.9 1939,1041.9 1938,1041.9 1937,1041.9 1936,1041.9 1935,1041.9 1934,1041.9 1933,1041.9 1932,1041.9 1931,1041.9 1930,1041.9 1929,1041.9 1928,1041.9 1927,1041.9 1926,1042.0 1925,1042.0 1924,1042.0 1923,1042.0 1922,1042.0 1921,1042.0 1920,1042.0 1919,1042.0 1918,1042.0 1917,1042.0 1916,1042.0 1915,1042.0 1914,1042.0 1913,1042.0 1912,1042.2 1911,1042.4 1910,1042.6 1909,1042.8 1908,1043.0 1907,1043.2 1906,1043.4 1905,1043.6 1900,1043.6 1899.9,1043.6 1895,1043.6" fill="url(#g2)"/>
<polygon points="1368,1043.2 1499.9,1043.1 1500,1043.1 1699.9,1043.0 1700,1043.0 1759.9,1042.8 1760,1042.8 1779.9,1042.8 1780,1042.8 1869.9,1042.5 1870,1042.5 1879.9,1042.5 1880,1042.5 1889.9,1041.9 1890,1041.9 1894.9,1041.6 1895,1041.6 1899.9,1041.3 1900,1041.3 1905,1041.0 1906,1040.8 1907,1040.6 1908,1040.5 1909,1040.3 1910,1039.3 1911,1038.3 1912,1036.6 1913,1036.3 1914,1037.5 1915,1037.2 1916,1037.0 1917,1037.3 1918,1037.5 1919,1036.8 1920,1036.6 1921,1036.2 1922,1037.2 1923,1036.7 1924,1037.0 1925,1037.8 1926,1038.4 1927,1038.7 1928,1039.0 1929,1037.8 1930,1037.2 1931,1036.6 1932,1036.2 1933,1037.3 1934,1036.0 1935,1036.1 1936,1035.2 1937,1035.7 1938,1036.2 1939,1035.6 1940,1036.4 1941,1036.0 1942,1036.3 1943,1036.0 1944,1035.4 1945,1034.9 1946,1034.7 1947,1034.9 1948,1034.8 1949,1035.9 1950,1035.5 1951,1035.0 1952,1034.5 1953,1034.1 1954,1033.3 1955,1032.9 1956,1033.6 1957,1033.7 1958,1033.6 1959,1033.8 1960,1034.4 1961,1034.6 1962,1034.9 1963,1034.5 1964,1034.6 1965,1034.5 1966,1034.8 1967,1034.7 1968,1034.9 1969,1035.2 1970,1035.4 1971,1034.9 1972,1034.3 1973,1034.7 1974,1034.1 1975,1033.2 1976,1033.0 1977,1032.1 1978,1031.3 1979,1031.1 1980,1030.3 1981,1029.1 1982,1029.9 1983,1030.9 1984,1030.4 1985,1030.4 1986,1031.2 1987,1030.6 1988,1030.7 1989,1030.6 1990,1031.0 1991,1030.5 1992,1031.5 1993,1031.9 1994,1032.5 1995,1032.7 1996,1031.9 1997,1032.3 1998,1032.1 1999,1032.6 2000,1032.6 2001,1032.6 2002,1032.5 2003,1033.0 2004,1033.4 2005,1032.7 2006,1032.7 2007,1033.3 2008,1033.4 2009,1032.8 2010,1032.6 2011,1032.2 2012,1032.5 2013,1032.3 2014,1032.3 2015,1033.4 2016,1032.6 2017,1032.1 2018,1031.3 2019,1030.7 2020,1031.4 2021,1031.7 2022,1032.7 2023,1031.7 2024,1031.4 2025,1032.3 2026,1032.9 2027,1033.4 2028,1033.7 2029,1033.6 2030,1033.5 2031,1033.5 2032,1033.8 2033,1033.7 2034,1033.8 2035,1034.4 2036,1033.7 2037,1033.3 2038,1033.6 2039,1033.4 2040,1033.4 2041,1034.4 2042,1034.4 2043,1033.9 2044,1034.2 2045,1035.1 2046,1034.1 2047,1033.4 2048,1033.3 2049,1032.7 2050,1033.6 2051,1033.5 2052,1033.0 2053,1033.0 2054,1032.3 2055,1031.8 2056,1031.7 2057,1032.7 2058,1031.3 2059,1031.3 2060,1031.9 2061,1032.0 2062,1032.6 2063,1032.4 2064,1032.1 2065,1031.7 2066,1030.9 2067,1031.5 2068,1030.6 2069,1030.3 2070,1030.0 2071,1029.6 2072,1028.5 2073,1028.5 2074,1028.7 2075,1028.9 2076,1029.4 2077,1029.4 2078,1029.1 2079,1029.3 2080,1029.6 2081,1029.2 2082,1028.5 2083,1028.1 2084,1028.8 2085,1029.4 2086,1028.9 2087,1029.0 2088,1029.5 2089,1030.1 2090,1029.6 2091,1029.5 2092,1030.1 2093,1031.2 2094,1031.6 2095,1030.7 2096,1030.7 2097,1030.1 2098,1029.7 2099,1029.0 2100,1028.5 2101,1028.2 2102,1028.9 2103,1028.8 2104,1028.6 2105,1028.2 2106,1027.5 2107,1027.0 2108,1027.4 2109,1027.4 2110,1028.0 2111,1027.6 2112,1027.1 2113,1025.8 2114,1025.7 2115,1024.5 2116,1025.1 2117,1024.1 2118,1020.1 2119,1015.5 2120,1013.0 2121,1012.8 2122,1013.6 2123,1013.9 2124,1013.4 2125,1012.7 2126,1013.0 2127,1013.1 2128,1012.9 2129,1013.6 2130,1013.8 2131,1014.2 2132,1014.2 2133,1014.2 2134,1014.3 2135,1013.9 2136,1014.6 2137,1015.2 2138,1014.6 2139,1015.1 2140,1016.0 2141,1016.4 2142,1017.2 2143,1017.2 2144,1017.3 2145,1016.8 2146,1016.8 2147,1016.5 2148,1016.7 2149,1017.5 2150,1018.3 2151,1019.5 2152,1020.0 2153,1019.9 2154,1020.6 2155,1021.0 2156,1022.3 2157,1023.6 2158,1024.1 2159,1023.1 2160,1022.5 2161,1022.4 2162,1021.8 2163,1021.9 2164,1022.0 2165,1022.2 2166,1022.0 2167,1021.2 2168,1020.6 2169,1020.4 2170,1020.9 2171,1021.4 2172,1021.6 2173,1021.4 2174,1021.3 2175,1021.3 2176,1021.5 2177,1021.5 2178,1020.2 2179,1020.4 2180,1020.2 2181,1019.5 2182,1019.5 2183,1019.3 2184,1018.9 2185,1017.7 2186,1017.6 2187,1017.7 2188,1017.4 2189,1016.4 2190,1016.6 2191,1016.8 2192,1016.7 2193,1016.7 2194,1016.2 2195,1015.7 2196,1015.8 2197,1015.4 2198,1015.4 2199,1016.8 2200,1016.7 2201,1016.5 2202,1015.6 2203,1015.6 2204,1016.0 2205,1015.7 2206,1015.6 2207,1014.6 2208,1015.1 2209,1015.0 2210,1015.6 2211,1016.4 2212,1016.4 2213,1016.9 2213.4,1016.9 2213.4,1032.5 2213,1032.5 2212,1032.5 2211,1032.5 2210,1032.6 2209,1032.6 2208,1032.6 2207,1032.6 2206,1032.6 2205,1032.7 2204,1032.7 2203,1032.7 2202,1032.7 2201,1032.7 2200,1032.8 2199,1032.8 2198,1032.8 2197,1032.8 2196,1032.9 2195,1032.9 2194,1032.9 2193,1032.9 2192,1032.9 2191,1033.0 2190,1033.0 2189,1033.0 2188,1033.0 2187,1033.0 2186,1033.1 2185,1033.1 2184,1033.1 2183,1033.1 2182,1033.1 2181,1033.2 2180,1033.2 2179,1033.2 2178,1033.2 2177,1033.2 2176,1033.3 2175,1033.3 2174,1033.3 2173,1033.3 2172,1033.3 2171,1033.4 2170,1033.4 2169,1033.4 2168,1033.4 2167,1033.5 2166,1033.5 2165,1033.5 2164,1033.5 2163,1033.5 2162,1033.6 2161,1033.6 2160,1033.6 2159,1033.6 2158,1033.6 2157,1033.7 2156,1033.7 2155,1033.7 2154,1033.5 2153,1033.4 2152,1033.2 2151,1033.0 2150,1032.9 2149,1032.7 2148,1032.5 2147,1032.4 2146,1032.2 2145,1032.0 2144,1031.9 2143,1031.7 2142,1031.5 2141,1031.4 2140,1031.2 2139,1031.0 2138,1030.8 2137,1030.7 2136,1030.5 2135,1030.3 2134,1030.2 2133,1030.0 2132,1029.8 2131,1029.7 2130,1029.5 2129,1029.3 2128,1029.2 2127,1029.0 2126,1028.8 2125,1028.7 2124,1028.5 2123,1028.3 2122,1028.2 2121,1028.0 2120,1032.8 2119,1037.5 2118,1037.5 2117,1037.5 2116,1037.5 2115,1037.4 2114,1037.4 2113,1037.4 2112,1037.4 2111,1037.4 2110,1037.4 2109,1037.3 2108,1037.3 2107,1037.3 2106,1037.3 2105,1037.3 2104,1037.3 2103,1037.2 2102,1037.2 2101,1037.2 2100,1037.2 2099,1037.2 2098,1037.2 2097,1037.2 2096,1037.1 2095,1037.1 2094,1037.1 2093,1037.1 2092,1037.1 2091,1037.1 2090,1037.0 2089,1037.0 2088,1037.0 2087,1037.0 2086,1037.0 2085,1037.0 2084,1036.9 2083,1036.9 2082,1036.9 2081,1036.9 2080,1036.9 2079,1036.9 2078,1036.8 2077,1036.8 2076,1036.8 2075,1036.8 2074,1036.9 2073,1037.1 2072,1037.2 2071,1037.3 2070,1037.4 2069,1037.6 2068,1037.7 2067,1037.8 2066,1038.0 2065,1038.1 2064,1038.2 2063,1038.3 2062,1038.5 2061,1038.6 2060,1038.7 2059,1038.8 2058,1039.0 2057,1039.1 2056,1039.2 2055,1039.4 2054,1039.5 2053,1039.6 2052,1039.7 2051,1039.9 2050,1040.0 2049,1040.0 2048,1040.0 2047,1040.0 2046,1040.0 2045,1040.0 2044,1040.0 2043,1040.0 2042,1040.0 2041,1040.0 2040,1040.0 2039,1040.0 2038,1040.0 2037,1040.0 2036,1040.1 2035,1040.1 2034,1040.1 2033,1040.1 2032,1040.1 2031,1040.1 2030,1040.1 2029,1040.1 2028,1040.1 2027,1040.1 2026,1040.1 2025,1040.1 2024,1040.1 2023,1040.1 2022,1040.1 2021,1040.1 2020,1040.1 2019,1040.1 2018,1040.1 2017,1040.1 2016,1040.1 2015,1040.1 2014,1040.1 2013,1040.1 2012,1040.1 2011,1040.1 2010,1040.1 2009,1040.1 2008,1040.2 2007,1040.2 2006,1040.2 2005,1040.2 2004,1040.2 2003,1040.2 2002,1040.2 2001,1040.2 2000,1040.2 1999,1040.2 1998,1040.2 1997,1040.2 1996,1040.2 1995,1040.2 1994,1040.2 1993,1040.2 1992,1040.2 1991,1040.2 1990,1040.2 1989,1040.2 1988,1040.2 1987,1040.2 1986,1040.2 1985,1040.2 1984,1040.2 1983,1040.2 1982,1040.2 1981,1040.3 1980,1040.3 1979,1040.3 1978,1040.3 1977,1040.3 1976,1040.3 1975,1040.3 1974,1040.3 1973,1040.3 1972,1040.3 1971,1040.3 1970,1040.3 1969,1040.3 1968,1040.3 1967,1040.3 1966,1040.3 1965,1040.3 1964,1040.3 1963,1040.3 1962,1040.3 1961,1040.3 1960,1040.3 1959,1040.3 1958,1040.3 1957,1040.3 1956,1040.3 1955,1040.3 1954,1040.4 1953,1040.4 1952,1040.4 1951,1040.4 1950,1040.4 1949,1040.4 1948,1040.4 1947,1040.4 1946,1040.4 1945,1040.4 1944,1040.4 1943,1040.4 1942,1040.4 1941,1040.4 1940,1040.4 1939,1040.4 1938,1040.4 1937,1040.4 1936,1040.4 1935,1040.4 1934,1040.4 1933,1040.4 1932,1040.4 1931,1040.4 1930,1040.4 1929,1040.4 1928,1040.4 1927,1040.4 1926,1040.5 1925,1040.5 1924,1040.5 1923,1040.5 1922,1040.5 1921,1040.5 1920,1040.5 1919,1040.5 1918,1040.5 1917,1040.5 1916,1040.5 1915,1040.5 1914,1040.5 1913,1040.5 1912,1040.7 1911,1040.8 1910,1041.0 1909,1041.2 1908,1041.3 1907,1041.5 1906,1041.7 1905,1041.8 1900,1042.7 1899.9,1042.7 1895,1043.5 1894.9,1043.6 1890,1043.6 1889.9,1043.6 1880,1043.7 1879.9,1043.7 1870,1043.7 1869.9,1043.7 1780,1043.9 1779.9,1043.9 1760,1044.0 1759.9,1045.0 1700,1045.0 1699.9,1045.0 1500,1045.0 1499.9,1045.0 1368,1045.0" fill="url(#g3)"/>
<polygon points="1890,1040.0 1894.9,1038.5 1895,1038.5 1899.9,1037.0 1900,1037.0 1905,1035.4 1906,1035.1 1907,1034.7 1908,1034.1 1909,1034.3 1910,1034.3 1911,1033.6 1912,1033.6 1913,1033.0 1914,1032.4 1915,1032.8 1916,1032.3 1917,1032.6 1918,1032.6 1919,1032.8 1920,1032.8 1921,1033.1 1922,1033.0 1923,1032.9 1924,1032.8 1925,1033.0 1926,1032.6 1927,1032.7 1928,1033.0 1929,1032.7 1930,1032.6 1931,1032.1 1932,1031.8 1933,1031.7 1934,1031.5 1935,1031.0 1936,1030.9 1937,1030.9 1938,1030.9 1939,1031.0 1940,1030.3 1941,1030.7 1942,1030.5 1943,1030.2 1944,1030.0 1945,1030.1 1946,1030.3 1947,1030.0 1948,1030.0 1949,1029.3 1950,1029.4 1951,1029.3 1952,1029.1 1953,1029.4 1954,1029.9 1955,1030.0 1956,1029.6 1957,1029.9 1958,1029.6 1959,1029.4 1960,1029.0 1961,1029.0 1962,1029.1 1963,1029.0 1964,1028.8 1965,1028.7 1966,1028.4 1967,1028.7 1968,1028.5 1969,1028.3 1970,1028.2 1971,1027.9 1972,1027.9 1973,1027.4 1974,1027.6 1975,1027.8 1976,1027.7 1977,1028.2 1978,1027.9 1979,1028.0 1980,1028.1 1981,1027.9 1982,1027.8 1983,1028.0 1984,1028.0 1985,1028.0 1986,1028.3 1987,1028.3 1988,1027.6 1989,1027.3 1990,1027.6 1991,1027.5 1992,1027.1 1993,1026.4 1994,1026.6 1995,1027.2 1996,1026.8 1997,1026.1 1998,1026.4 1999,1026.3 2000,1026.3 2001,1025.3 2002,1024.2 2003,1023.7 2004,1024.0 2005,1024.1 2006,1023.9 2007,1024.2 2008,1024.1 2009,1024.2 2010,1023.8 2011,1023.9 2012,1024.1 2013,1024.4 2014,1024.2 2015,1024.2 2016,1023.8 2017,1024.0 2018,1024.1 2019,1024.2 2020,1023.9 2021,1023.3 2022,1023.2 2023,1023.0 2024,1022.7 2025,1022.8 2026,1023.1 2027,1023.1 2028,1023.3 2029,1023.2 2030,1022.7 2031,1022.4 2032,1022.2 2033,1022.4 2034,1022.6 2035,1022.5 2036,1022.7 2037,1022.2 2038,1022.1 2039,1022.5 2040,1022.4 2041,1022.6 2042,1021.7 2043,1021.0 2044,1020.7 2045,1021.0 2046,1021.5 2047,1021.1 2048,1020.7 2049,1020.2 2050,1019.9 2051,1020.1 2052,1020.0 2053,1020.5 2054,1020.6 2055,1020.2 2056,1020.2 2057,1020.0 2058,1020.1 2059,1020.3 2060,1019.9 2061,1020.1 2062,1020.1 2063,1019.8 2064,1019.7 2065,1019.7 2066,1019.4 2067,1019.2 2068,1019.6 2069,1019.6 2070,1019.4 2071,1019.6 2072,1019.1 2073,1019.2 2074,1018.8 2075,1018.8 2076,1018.4 2077,1018.4 2078,1018.9 2079,1019.0 2080,1018.8 2081,1019.6 2082,1019.5 2083,1020.1 2084,1019.9 2085,1019.5 2086,1020.3 2087,1020.2 2088,1020.5 2089,1020.9 2090,1019.4 2091,1017.9 2092,1016.2 2093,1016.0 2094,1015.8 2095,1015.2 2096,1015.1 2097,1015.2 2098,1014.9 2099,1014.9 2100,1014.6 2101,1014.4 2102,1014.3 2103,1014.2 2104,1014.4 2105,1014.4 2106,1014.4 2107,1013.1 2108,1009.9 2109,1009.1 2110,1009.1 2111,1009.3 2112,1009.0 2113,1008.5 2114,1008.1 2115,1008.1 2116,1007.8 2117,1007.0 2118,1006.7 2119,1005.2 2120,1000.7 2121,995.8 2122,994.3 2123,995.0 2124,995.5 2125,995.0 2126,994.8 2127,994.9 2128,994.9 2129,994.7 2130,995.3 2131,994.9 2132,995.4 2133,995.8 2134,995.9 2135,995.8 2136,996.0 2137,996.3 2138,995.7 2139,995.6 2140,996.1 2141,996.3 2142,996.4 2143,996.3 2144,996.3 2145,996.3 2146,997.5 2147,997.2 2148,997.9 2149,998.2 2150,998.3 2151,998.4 2152,998.4 2153,999.0 2154,999.2 2155,999.2 2156,998.9 2157,998.7 2158,998.1 2159,997.8 2160,997.4 2161,997.4 2162,997.4 2163,996.6 2164,996.4 2165,996.6 2166,996.0 2167,995.5 2168,995.7 2169,995.5 2170,995.2 2171,994.7 2172,994.7 2173,994.4 2174,994.4 2175,994.4 2176,994.4 2177,994.1 2178,993.8 2179,993.7 2180,993.5 2181,993.4 2182,993.0 2183,992.8 2184,992.5 2185,992.2 2186,992.2 2187,992.5 2188,992.1 2189,992.2 2190,992.1 2191,991.9 2192,991.9 2193,991.5 2194,991.5 2195,991.4 2196,990.1 2197,990.1 2198,990.2 2199,990.7 2200,990.2 2201,990.0 2202,990.0 2203,989.5 2204,989.7 2205,989.7 2206,989.2 2207,988.6 2208,988.4 2209,989.0 2210,985.6 2211,979.6 2212,978.4 2213,988.4 2213.4,988.4 2213.4,1016.9 2213,1016.9 2212,1016.4 2211,1016.4 2210,1015.6 2209,1015.0 2208,1015.1 2207,1014.6 2206,1015.6 2205,1015.7 2204,1016.0 2203,1015.6 2202,1015.6 2201,1016.5 2200,1016.7 2199,1016.8 2198,1015.4 2197,1015.4 2196,1015.8 2195,1015.7 2194,1016.2 2193,1016.7 2192,1016.7 2191,1016.8 2190,1016.6 2189,1016.4 2188,1017.4 2187,1017.7 2186,1017.6 2185,1017.7 2184,1018.9 2183,1019.3 2182,1019.5 2181,1019.5 2180,1020.2 2179,1020.4 2178,1020.2 2177,1021.5 2176,1021.5 2175,1021.3 2174,1021.3 2173,1021.4 2172,1021.6 2171,1021.4 2170,1020.9 2169,1020.4 2168,1020.6 2167,1021.2 2166,1022.0 2165,1022.2 2164,1022.0 2163,1021.9 2162,1021.8 2161,1022.4 2160,1022.5 2159,1023.1 2158,1024.1 2157,1023.6 2156,1022.3 2155,1021.0 2154,1020.6 2153,1019.9 2152,1020.0 2151,1019.5 2150,1018.3 2149,1017.5 2148,1016.7 2147,1016.5 2146,1016.8 2145,1016.8 2144,1017.3 2143,1017.2 2142,1017.2 2141,1016.4 2140,1016.0 2139,1015.1 2138,1014.6 2137,1015.2 2136,1014.6 2135,1013.9 2134,1014.3 2133,1014.2 2132,1014.2 2131,1014.2 2130,1013.8 2129,1013.6 2128,1012.9 2127,1013.1 2126,1013.0 2125,1012.7 2124,1013.4 2123,1013.9 2122,1013.6 2121,1012.8 2120,1013.0 2119,1015.5 2118,1020.1 2117,1024.1 2116,1025.1 2115,1024.5 2114,1025.7 2113,1025.8 2112,1027.1 2111,1027.6 2110,1028.0 2109,1027.4 2108,1027.4 2107,1027.0 2106,1027.5 2105,1028.2 2104,1028.6 2103,1028.8 2102,1028.9 2101,1028.2 2100,1028.5 2099,1029.0 2098,1029.7 2097,1030.1 2096,1030.7 2095,1030.7 2094,1031.6 2093,1031.2 2092,1030.1 2091,1029.5 2090,1029.6 2089,1030.1 2088,1029.5 2087,1029.0 2086,1028.9 2085,1029.4 2084,1028.8 2083,1028.1 2082,1028.5 2081,1029.2 2080,1029.6 2079,1029.3 2078,1029.1 2077,1029.4 2076,1029.4 2075,1028.9 2074,1028.7 2073,1028.5 2072,1028.5 2071,1029.6 2070,1030.0 2069,1030.3 2068,1030.6 2067,1031.5 2066,1030.9 2065,1031.7 2064,1032.1 2063,1032.4 2062,1032.6 2061,1032.0 2060,1031.9 2059,1031.3 2058,1031.3 2057,1032.7 2056,1031.7 2055,1031.8 2054,1032.3 2053,1033.0 2052,1033.0 2051,1033.5 2050,1033.6 2049,1032.7 2048,1033.3 2047,1033.4 2046,1034.1 2045,1035.1 2044,1034.2 2043,1033.9 2042,1034.4 2041,1034.4 2040,1033.4 2039,1033.4 2038,1033.6 2037,1033.3 2036,1033.7 2035,1034.4 2034,1033.8 2033,1033.7 2032,1033.8 2031,1033.5 2030,1033.5 2029,1033.6 2028,1033.7 2027,1033.4 2026,1032.9 2025,1032.3 2024,1031.4 2023,1031.7 2022,1032.7 2021,1031.7 2020,1031.4 2019,1030.7 2018,1031.3 2017,1032.1 2016,1032.6 2015,1033.4 2014,1032.3 2013,1032.3 2012,1032.5 2011,1032.2 2010,1032.6 2009,1032.8 2008,1033.4 2007,1033.3 2006,1032.7 2005,1032.7 2004,1033.4 2003,1033.0 2002,1032.5 2001,1032.6 2000,1032.6 1999,1032.6 1998,1032.1 1997,1032.3 1996,1031.9 1995,1032.7 1994,1032.5 1993,1031.9 1992,1031.5 1991,1030.5 1990,1031.0 1989,1030.6 1988,1030.7 1987,1030.6 1986,1031.2 1985,1030.4 1984,1030.4 1983,1030.9 1982,1029.9 1981,1029.1 1980,1030.3 1979,1031.1 1978,1031.3 1977,1032.1 1976,1033.0 1975,1033.2 1974,1034.1 1973,1034.7 1972,1034.3 1971,1034.9 1970,1035.4 1969,1035.2 1968,1034.9 1967,1034.7 1966,1034.8 1965,1034.5 1964,1034.6 1963,1034.5 1962,1034.9 1961,1034.6 1960,1034.4 1959,1033.8 1958,1033.6 1957,1033.7 1956,1033.6 1955,1032.9 1954,1033.3 1953,1034.1 1952,1034.5 1951,1035.0 1950,1035.5 1949,1035.9 1948,1034.8 1947,1034.9 1946,1034.7 1945,1034.9 1944,1035.4 1943,1036.0 1942,1036.3 1941,1036.0 1940,1036.4 1939,1035.6 1938,1036.2 1937,1035.7 1936,1035.2 1935,1036.1 1934,1036.0 1933,1037.3 1932,1036.2 1931,1036.6 1930,1037.2 1929,1037.8 1928,1039.0 1927,1038.7 1926,1038.4 1925,1037.8 1924,1037.0 1923,1036.7 1922,1037.2 1921,1036.2 1920,1036.6 1919,1036.8 1918,1037.5 1917,1037.3 1916,1037.0 1915,1037.2 1914,1037.5 1913,1036.3 1912,1036.6 1911,1038.3 1910,1039.3 1909,1040.3 1908,1040.5 1907,1040.6 1906,1040.8 1905,1041.0 1900,1041.3 1899.9,1041.3 1895,1041.6 1894.9,1041.6 1890,1041.9" fill="url(#g4)"/>
<polygon points="1780,1042.8 1869.9,1040.3 1870,1040.3 1879.9,1040.0 1880,1040.0 1889.9,1039.4 1890,1039.4 1894.9,1038.5 1895,1038.5 1899.9,1037.0 1900,1037.0 1905,1035.4 1906,1035.1 1907,1034.7 1908,1034.1 1909,1034.3 1910,1033.5 1911,1031.9 1912,1031.5 1913,1030.1 1914,1030.6 1915,1030.8 1916,1030.6 1917,1030.5 1918,1030.3 1919,1029.3 1920,1029.1 1921,1029.3 1922,1028.5 1923,1027.9 1924,1028.6 1925,1029.0 1926,1028.2 1927,1028.5 1928,1028.5 1929,1029.0 1930,1028.8 1931,1028.7 1932,1028.3 1933,1028.4 1934,1028.3 1935,1028.0 1936,1027.9 1937,1027.5 1938,1027.9 1939,1027.4 1940,1026.8 1941,1026.5 1942,1027.2 1943,1027.0 1944,1027.5 1945,1027.9 1946,1027.4 1947,1027.6 1948,1027.6 1949,1027.3 1950,1026.7 1951,1026.4 1952,1025.6 1953,1025.3 1954,1024.9 1955,1025.0 1956,1025.0 1957,1024.5 1958,1024.8 1959,1025.2 1960,1024.9 1961,1024.2 1962,1024.2 1963,1022.8 1964,1022.8 1965,1023.5 1966,1024.8 1967,1024.6 1968,1025.5 1969,1026.7 1970,1027.5 1971,1025.5 1972,1025.5 1973,1025.0 1974,1024.8 1975,1024.1 1976,1023.2 1977,1022.5 1978,1022.8 1979,1022.6 1980,1022.1 1981,1022.2 1982,1022.6 1983,1022.8 1984,1022.6 1985,1022.2 1986,1021.9 1987,1021.7 1988,1021.6 1989,1020.9 1990,1020.5 1991,1021.2 1992,1020.9 1993,1020.6 1994,1020.9 1995,1021.9 1996,1022.8 1997,1022.6 1998,1022.2 1999,1022.2 2000,1021.9 2001,1019.6 2002,1017.8 2003,1015.6 2004,1015.1 2005,1015.0 2006,1014.9 2007,1014.4 2008,1014.0 2009,1013.4 2010,1013.1 2011,1013.4 2012,1013.2 2013,1011.6 2014,1012.1 2015,1012.1 2016,1011.7 2017,1011.8 2018,1010.8 2019,1010.6 2020,1011.8 2021,1013.4 2022,1014.8 2023,1014.6 2024,1014.8 2025,1015.4 2026,1014.9 2027,1016.0 2028,1015.6 2029,1015.6 2030,1014.8 2031,1014.9 2032,1014.7 2033,1015.1 2034,1014.3 2035,1014.2 2036,1015.0 2037,1014.1 2038,1014.1 2039,1014.2 2040,1013.7 2041,1013.4 2042,1013.9 2043,1014.2 2044,1014.1 2045,1013.8 2046,1012.9 2047,1012.7 2048,1013.3 2049,1013.4 2050,1012.3 2051,1011.0 2052,1010.5 2053,1010.5 2054,1010.1 2055,1009.8 2056,1009.7 2057,1009.8 2058,1009.4 2059,1009.6 2060,1008.3 2061,1008.1 2062,1007.9 2063,1006.7 2064,1006.9 2065,1005.7 2066,1004.6 2067,1006.0 2068,1006.6 2069,1006.6 2070,1007.0 2071,1007.3 2072,1006.4 2073,1006.5 2074,1006.9 2075,1006.6 2076,1006.3 2077,1005.9 2078,1006.1 2079,1005.6 2080,1005.2 2081,1004.5 2082,1004.0 2083,1004.2 2084,1004.4 2085,1004.2 2086,1003.7 2087,1004.0 2088,1004.2 2089,1004.8 2090,1003.4 2091,1001.4 2092,999.9 2093,1000.4 2094,1000.1 2095,999.9 2096,999.3 2097,999.0 2098,999.4 2099,999.7 2100,1000.0 2101,999.0 2102,999.3 2103,998.6 2104,998.8 2105,997.5 2106,997.5 2107,995.4 2108,991.8 2109,991.7 2110,992.3 2111,991.8 2112,992.6 2113,992.1 2114,992.8 2115,992.2 2116,991.4 2117,991.6 2118,991.1 2119,990.9 2120,984.8 2121,979.2 2122,973.9 2123,970.5 2124,971.1 2125,970.3 2126,971.2 2127,971.4 2128,972.6 2129,972.7 2130,972.7 2131,972.9 2132,973.4 2133,974.0 2134,974.1 2135,974.1 2136,974.4 2137,974.9 2138,974.0 2139,973.5 2140,973.4 2141,974.4 2142,975.1 2143,975.4 2144,975.6 2145,974.9 2146,975.4 2147,975.1 2148,974.8 2149,976.2 2150,975.8 2151,976.9 2152,977.4 2153,977.3 2154,977.8 2155,977.8 2156,978.3 2157,978.5 2158,978.4 2159,980.3 2160,979.3 2161,979.1 2162,978.3 2163,977.9 2164,976.5 2165,975.3 2166,973.0 2167,973.2 2168,972.9 2169,971.8 2170,971.7 2171,971.6 2172,972.6 2173,972.0 2174,971.8 2175,971.4 2176,971.1 2177,970.3 2178,969.4 2179,969.1 2180,969.0 2181,967.8 2182,966.8 2183,966.4 2184,967.0 2185,966.4 2186,965.1 2187,965.2 2188,965.2 2189,965.8 2190,965.3 2191,965.8 2192,964.8 2193,964.7 2194,964.2 2195,963.0 2196,962.4 2197,962.7 2198,962.7 2199,961.9 2200,962.0 2201,961.9 2202,961.7 2203,961.2 2204,960.7 2205,959.7 2206,959.2 2207,958.7 2208,957.9 2209,957.4 2210,953.7 2211,949.3 2212,948.9 2213,956.0 2213.4,955.8 2213.4,988.4 2213,988.4 2212,978.4 2211,979.6 2210,985.6 2209,989.0 2208,988.4 2207,988.6 2206,989.2 2205,989.7 2204,989.7 2203,989.5 2202,990.0 2201,990.0 2200,990.2 2199,990.7 2198,990.2 2197,990.1 2196,990.1 2195,991.4 2194,991.5 2193,991.5 2192,991.9 2191,991.9 2190,992.1 2189,992.2 2188,992.1 2187,992.5 2186,992.2 2185,992.2 2184,992.5 2183,992.8 2182,993.0 2181,993.4 2180,993.5 2179,993.7 2178,993.8 2177,994.1 2176,994.4 2175,994.4 2174,994.4 2173,994.4 2172,994.7 2171,994.7 2170,995.2 2169,995.5 2168,995.7 2167,995.5 2166,996.0 2165,996.6 2164,996.4 2163,996.6 2162,997.4 2161,997.4 2160,997.4 2159,997.8 2158,998.1 2157,998.7 2156,998.9 2155,999.2 2154,999.2 2153,999.0 2152,998.4 2151,998.4 2150,998.3 2149,998.2 2148,997.9 2147,997.2 2146,997.5 2145,996.3 2144,996.3 2143,996.3 2142,996.4 2141,996.3 2140,996.1 2139,995.6 2138,995.7 2137,996.3 2136,996.0 2135,995.8 2134,995.9 2133,995.8 2132,995.4 2131,994.9 2130,995.3 2129,994.7 2128,994.9 2127,994.9 2126,994.8 2125,995.0 2124,995.5 2123,995.0 2122,994.3 2121,995.8 2120,1000.7 2119,1005.2 2118,1006.7 2117,1007.0 2116,1007.8 2115,1008.1 2114,1008.1 2113,1008.5 2112,1009.0 2111,1009.3 2110,1009.1 2109,1009.1 2108,1009.9 2107,1013.1 2106,1014.4 2105,1014.4 2104,1014.4 2103,1014.2 2102,1014.3 2101,1014.4 2100,1014.6 2099,1014.9 2098,1014.9 2097,1015.2 2096,1015.1 2095,1015.2 2094,1015.8 2093,1016.0 2092,1016.2 2091,1017.9 2090,1019.4 2089,1020.9 2088,1020.5 2087,1020.2 2086,1020.3 2085,1019.5 2084,1019.9 2083,1020.1 2082,1019.5 2081,1019.6 2080,1018.8 2079,1019.0 2078,1018.9 2077,1018.4 2076,1018.4 2075,1018.8 2074,1018.8 2073,1019.2 2072,1019.1 2071,1019.6 2070,1019.4 2069,1019.6 2068,1019.6 2067,1019.2 2066,1019.4 2065,1019.7 2064,1019.7 2063,1019.8 2062,1020.1 2061,1020.1 2060,1019.9 2059,1020.3 2058,1020.1 2057,1020.0 2056,1020.2 2055,1020.2 2054,1020.6 2053,1020.5 2052,1020.0 2051,1020.1 2050,1019.9 2049,1020.2 2048,1020.7 2047,1021.1 2046,1021.5 2045,1021.0 2044,1020.7 2043,1021.0 2042,1021.7 2041,1022.6 2040,1022.4 2039,1022.5 2038,1022.1 2037,1022.2 2036,1022.7 2035,1022.5 2034,1022.6 2033,1022.4 2032,1022.2 2031,1022.4 2030,1022.7 2029,1023.2 2028,1023.3 2027,1023.1 2026,1023.1 2025,1022.8 2024,1022.7 2023,1023.0 2022,1023.2 2021,1023.3 2020,1023.9 2019,1024.2 2018,1024.1 2017,1024.0 2016,1023.8 2015,1024.2 2014,1024.2 2013,1024.4 2012,1024.1 2011,1023.9 2010,1023.8 2009,1024.2 2008,1024.1 2007,1024.2 2006,1023.9 2005,1024.1 2004,1024.0 2003,1023.7 2002,1024.2 2001,1025.3 2000,1026.3 1999,1026.3 1998,1026.4 1997,1026.1 1996,1026.8 1995,1027.2 1994,1026.6 1993,1026.4 1992,1027.1 1991,1027.5 1990,1027.6 1989,1027.3 1988,1027.6 1987,1028.3 1986,1028.3 1985,1028.0 1984,1028.0 1983,1028.0 1982,1027.8 1981,1027.9 1980,1028.1 1979,1028.0 1978,1027.9 1977,1028.2 1976,1027.7 1975,1027.8 1974,1027.6 1973,1027.4 1972,1027.9 1971,1027.9 1970,1028.2 1969,1028.3 1968,1028.5 1967,1028.7 1966,1028.4 1965,1028.7 1964,1028.8 1963,1029.0 1962,1029.1 1961,1029.0 1960,1029.0 1959,1029.4 1958,1029.6 1957,1029.9 1956,1029.6 1955,1030.0 1954,1029.9 1953,1029.4 1952,1029.1 1951,1029.3 1950,1029.4 1949,1029.3 1948,1030.0 1947,1030.0 1946,1030.3 1945,1030.1 1944,1030.0 1943,1030.2 1942,1030.5 1941,1030.7 1940,1030.3 1939,1031.0 1938,1030.9 1937,1030.9 1936,1030.9 1935,1031.0 1934,1031.5 1933,1031.7 1932,1031.8 1931,1032.1 1930,1032.6 1929,1032.7 1928,1033.0 1927,1032.7 1926,1032.6 1925,1033.0 1924,1032.8 1923,1032.9 1922,1033.0 1921,1033.1 1920,1032.8 1919,1032.8 1918,1032.6 1917,1032.6 1916,1032.3 1915,1032.8 1914,1032.4 1913,1033.0 1912,1033.6 1911,1033.6 1910,1034.3 1909,1034.3 1908,1034.1 1907,1034.7 1906,1035.1 1905,1035.4 1900,1037.0 1899.9,1037.0 1895,1038.5 1894.9,1038.5 1890,1040.0 1889.9,1041.9 1880,1042.5 1879.9,1042.5 1870,1042.5 1869.9,1042.5 1780,1042.8" fill="url(#g5)"/>
<polygon points="214,1044.0 819.9,1043.0 820,1043.0 896.9,1043.0 897,1043.0 898.9,1039.2 899,1039.0 964.9,1039.0 965,1039.0 966.9,1040.0 967,1040.0 1003.9,1039.0 1004,1039.0 1026.9,1038.5 1027,1038.5 1061.9,1037.8 1062,1037.8 1064.9,1037.8 1065,1037.8 1100.9,1037.0 1101,1037.0 1102.9,1037.0 1103,1037.0 1135.9,1037.0 1136,1037.0 1143.9,1037.0 1144,1037.0 1152.9,1037.0 1153,1037.0 1166.9,1037.0 1167,1037.0 1169.9,1037.0 1170,1037.0 1199.9,1039.0 1200,1039.0 1367.9,1039.0 1368,1039.0 1499.9,1039.0 1500,1039.0 1699.9,1038.5 1700,1038.5 1759.9,1038.3 1760,1038.3 1779.9,1038.3 1780,1038.3 1869.9,1038.0 1870,1038.0 1879.9,1038.0 1880,1038.0 1889.9,1037.6 1890,1037.6 1894.9,1037.4 1895,1037.4 1899.9,1037.0 1900,1037.0 1905,1035.4 1906,1035.1 1907,1033.9 1908,1032.6 1909,1030.9 1910,1029.9 1911,1028.3 1912,1026.2 1913,1025.1 1914,1026.0 1915,1025.3 1916,1025.5 1917,1025.8 1918,1026.5 1919,1027.3 1920,1027.3 1921,1026.8 1922,1026.8 1923,1026.9 1924,1026.7 1925,1026.4 1926,1025.6 1927,1026.4 1928,1025.4 1929,1024.3 1930,1024.5 1931,1024.3 1932,1024.3 1933,1024.1 1934,1024.4 1935,1024.6 1936,1023.8 1937,1023.8 1938,1022.8 1939,1021.6 1940,1021.9 1941,1021.3 1942,1020.1 1943,1019.9 1944,1019.4 1945,1019.5 1946,1019.3 1947,1018.8 1948,1018.4 1949,1018.7 1950,1018.1 1951,1018.1 1952,1017.5 1953,1017.6 1954,1018.3 1955,1018.3 1956,1018.5 1957,1018.4 1958,1017.6 1959,1017.2 1960,1017.0 1961,1016.9 1962,1016.4 1963,1016.4 1964,1015.9 1965,1015.8 1966,1015.7 1967,1015.1 1968,1015.5 1969,1015.4 1970,1015.3 1971,1015.2 1972,1014.1 1973,1013.5 1974,1013.2 1975,1013.8 1976,1013.5 1977,1013.8 1978,1013.3 1979,1013.0 1980,1012.9 1981,1013.5 1982,1012.9 1983,1013.0 1984,1013.4 1985,1013.5 1986,1013.6 1987,1014.0 1988,1014.2 1989,1013.7 1990,1014.1 1991,1013.7 1992,1013.6 1993,1014.3 1994,1015.4 1995,1015.9 1996,1015.8 1997,1015.2 1998,1014.7 1999,1015.3 2000,1015.3 2001,1012.5 2002,1011.2 2003,1009.7 2004,1009.7 2005,1009.3 2006,1007.7 2007,1007.0 2008,1006.5 2009,1006.1 2010,1006.4 2011,1005.6 2012,1005.2 2013,1004.8 2014,1004.4 2015,1003.8 2016,1003.2 2017,1002.0 2018,1002.3 2019,1002.3 2020,1002.4 2021,1002.0 2022,1002.1 2023,1001.7 2024,1001.3 2025,1001.5 2026,1001.8 2027,1002.1 2028,1001.9 2029,1001.5 2030,1001.9 2031,1002.1 2032,1001.4 2033,1000.6 2034,1000.5 2035,1000.3 2036,999.6 2037,1000.4 2038,999.0 2039,998.4 2040,998.3 2041,998.5 2042,997.3 2043,996.8 2044,997.2 2045,997.4 2046,996.8 2047,996.4 2048,995.5 2049,995.3 2050,994.4 2051,993.2 2052,992.3 2053,992.2 2054,991.4 2055,991.8 2056,991.9 2057,991.8 2058,991.4 2059,991.3 2060,990.7 2061,990.3 2062,989.8 2063,989.3 2064,988.1 2065,987.1 2066,986.0 2067,985.8 2068,985.4 2069,984.4 2070,983.6 2071,982.9 2072,983.0 2073,982.5 2074,982.0 2075,981.3 2076,980.9 2077,981.3 2078,980.5 2079,979.5 2080,979.1 2081,978.2 2082,976.4 2083,975.7 2084,973.9 2085,972.9 2086,970.6 2087,969.1 2088,968.6 2089,967.2 2090,965.8 2091,965.1 2092,965.0 2093,964.7 2094,964.4 2095,965.1 2096,965.6 2097,965.5 2098,964.7 2099,964.3 2100,964.0 2101,964.0 2102,964.4 2103,962.9 2104,961.8 2105,960.5 2106,959.4 2107,958.0 2108,957.0 2109,957.3 2110,956.8 2111,956.4 2112,956.2 2113,955.4 2114,956.1 2115,955.2 2116,954.8 2117,954.3 2118,954.8 2119,954.4 2120,943.9 2121,934.4 2122,931.1 2123,930.5 2124,930.3 2125,930.2 2126,929.7 2127,929.5 2128,929.3 2129,929.5 2130,929.6 2131,929.8 2132,929.4 2133,929.5 2134,929.1 2135,929.4 2136,929.2 2137,928.7 2138,929.0 2139,928.0 2140,927.3 2141,926.8 2142,926.7 2143,926.2 2144,926.1 2145,925.7 2146,926.4 2147,926.6 2148,928.1 2149,928.9 2150,928.7 2151,929.6 2152,930.0 2153,930.7 2154,930.5 2155,931.3 2156,931.7 2157,931.3 2158,930.7 2159,930.4 2160,930.4 2161,931.4 2162,931.9 2163,932.2 2164,931.7 2165,931.2 2166,931.1 2167,930.7 2168,930.1 2169,929.2 2170,928.8 2171,928.0 2172,927.3 2173,926.4 2174,925.5 2175,924.6 2176,924.5 2177,923.8 2178,923.6 2179,922.7 2180,922.3 2181,921.2 2182,920.8 2183,920.6 2184,920.1 2185,919.9 2186,919.4 2187,919.3 2188,918.9 2189,918.9 2190,918.7 2191,918.2 2192,918.0 2193,918.0 2194,917.4 2195,917.5 2196,918.1 2197,917.9 2198,918.0 2199,918.2 2200,917.6 2201,918.1 2202,919.0 2203,918.2 2204,918.9 2205,918.2 2206,917.5 2207,914.7 2208,913.3 2209,911.4 2210,908.9 2211,906.8 2212,907.7 2213,916.1 2213.4,916.4 2213.4,955.8 2213,956.0 2212,948.9 2211,949.3 2210,953.7 2209,957.4 2208,957.9 2207,958.7 2206,959.2 2205,959.7 2204,960.7 2203,961.2 2202,961.7 2201,961.9 2200,962.0 2199,961.9 2198,962.7 2197,962.7 2196,962.4 2195,963.0 2194,964.2 2193,964.7 2192,964.8 2191,965.8 2190,965.3 2189,965.8 2188,965.2 2187,965.2 2186,965.1 2185,966.4 2184,967.0 2183,966.4 2182,966.8 2181,967.8 2180,969.0 2179,969.1 2178,969.4 2177,970.3 2176,971.1 2175,971.4 2174,971.8 2173,972.0 2172,972.6 2171,971.6 2170,971.7 2169,971.8 2168,972.9 2167,973.2 2166,973.0 2165,975.3 2164,976.5 2163,977.9 2162,978.3 2161,979.1 2160,979.3 2159,980.3 2158,978.4 2157,978.5 2156,978.3 2155,977.8 2154,977.8 2153,977.3 2152,977.4 2151,976.9 2150,975.8 2149,976.2 2148,974.8 2147,975.1 2146,975.4 2145,974.9 2144,975.6 2143,975.4 2142,975.1 2141,974.4 2140,973.4 2139,973.5 2138,974.0 2137,974.9 2136,974.4 2135,974.1 2134,974.1 2133,974.0 2132,973.4 2131,972.9 2130,972.7 2129,972.7 2128,972.6 2127,971.4 2126,971.2 2125,970.3 2124,971.1 2123,970.5 2122,973.9 2121,979.2 2120,984.8 2119,990.9 2118,991.1 2117,991.6 2116,991.4 2115,992.2 2114,992.8 2113,992.1 2112,992.6 2111,991.8 2110,992.3 2109,991.7 2108,991.8 2107,995.4 2106,997.5 2105,997.5 2104,998.8 2103,998.6 2102,999.3 2101,999.0 2100,1000.0 2099,999.7 2098,999.4 2097,999.0 2096,999.3 2095,999.9 2094,1000.1 2093,1000.4 2092,999.9 2091,1001.4 2090,1003.4 2089,1004.8 2088,1004.2 2087,1004.0 2086,1003.7 2085,1004.2 2084,1004.4 2083,1004.2 2082,1004.0 2081,1004.5 2080,1005.2 2079,1005.6 2078,1006.1 2077,1005.9 2076,1006.3 2075,1006.6 2074,1006.9 2073,1006.5 2072,1006.4 2071,1007.3 2070,1007.0 2069,1006.6 2068,1006.6 2067,1006.0 2066,1004.6 2065,1005.7 2064,1006.9 2063,1006.7 2062,1007.9 2061,1008.1 2060,1008.3 2059,1009.6 2058,1009.4 2057,1009.8 2056,1009.7 2055,1009.8 2054,1010.1 2053,1010.5 2052,1010.5 2051,1011.0 2050,1012.3 2049,1013.4 2048,1013.3 2047,1012.7 2046,1012.9 2045,1013.8 2044,1014.1 2043,1014.2 2042,1013.9 2041,1013.4 2040,1013.7 2039,1014.2 2038,1014.1 2037,1014.1 2036,1015.0 2035,1014.2 2034,1014.3 2033,1015.1 2032,1014.7 2031,1014.9 2030,1014.8 2029,1015.6 2028,1015.6 2027,1016.0 2026,1014.9 2025,1015.4 2024,1014.8 2023,1014.6 2022,1014.8 2021,1013.4 2020,1011.8 2019,1010.6 2018,1010.8 2017,1011.8 2016,1011.7 2015,1012.1 2014,1012.1 2013,1011.6 2012,1013.2 2011,1013.4 2010,1013.1 2009,1013.4 2008,1014.0 2007,1014.4 2006,1014.9 2005,1015.0 2004,1015.1 2003,1015.6 2002,1017.8 2001,1019.6 2000,1021.9 1999,1022.2 1998,1022.2 1997,1022.6 1996,1022.8 1995,1021.9 1994,1020.9 1993,1020.6 1992,1020.9 1991,1021.2 1990,1020.5 1989,1020.9 1988,1021.6 1987,1021.7 1986,1021.9 1985,1022.2 1984,1022.6 1983,1022.8 1982,1022.6 1981,1022.2 1980,1022.1 1979,1022.6 1978,1022.8 1977,1022.5 1976,1023.2 1975,1024.1 1974,1024.8 1973,1025.0 1972,1025.5 1971,1025.5 1970,1027.5 1969,1026.7 1968,1025.5 1967,1024.6 1966,1024.8 1965,1023.5 1964,1022.8 1963,1022.8 1962,1024.2 1961,1024.2 1960,1024.9 1959,1025.2 1958,1024.8 1957,1024.5 1956,1025.0 1955,1025.0 1954,1024.9 1953,1025.3 1952,1025.6 1951,1026.4 1950,1026.7 1949,1027.3 1948,1027.6 1947,1027.6 1946,1027.4 1945,1027.9 1944,1027.5 1943,1027.0 1942,1027.2 1941,1026.5 1940,1026.8 1939,1027.4 1938,1027.9 1937,1027.5 1936,1027.9 1935,1028.0 1934,1028.3 1933,1028.4 1932,1028.3 1931,1028.7 1930,1028.8 1929,1029.0 1928,1028.5 1927,1028.5 1926,1028.2 1925,1029.0 1924,1028.6 1923,1027.9 1922,1028.5 1921,1029.3 1920,1029.1 1919,1029.3 1918,1030.3 1917,1030.5 1916,1030.6 1915,1030.8 1914,1030.6 1913,1030.1 1912,1031.5 1911,1031.9 1910,1033.5 1909,1034.3 1908,1034.1 1907,1034.7 1906,1035.1 1905,1035.4 1900,1037.0 1899.9,1037.0 1895,1038.5 1894.9,1038.5 1890,1039.4 1889.9,1039.4 1880,1040.0 1879.9,1040.0 1870,1040.3 1869.9,1040.3 1780,1042.8 1779.9,1042.8 1760,1042.8 1759.9,1042.8 1700,1043.0 1699.9,1043.0 1500,1043.1 1499.9,1043.1 1368,1043.2 1367.9,1045.0 1200,1045.0 1199.9,1045.0 1170,1045.0 1169.9,1045.0 1167,1045.0 1166.9,1045.0 1153,1045.0 1152.9,1045.0 1144,1045.0 1143.9,1045.0 1136,1045.0 1135.9,1045.0 1103,1045.0 1102.9,1045.0 1101,1045.0 1100.9,1045.0 1065,1045.0 1064.9,1045.0 1062,1045.0 1061.9,1045.0 1027,1045.0 1026.9,1045.0 1004,1045.0 1003.9,1045.0 967,1045.0 966.9,1045.0 965,1045.0 964.9,1045.0 899,1045.0 898.9,1045.0 897,1045.0 896.9,1045.0 820,1045.0 819.9,1045.0 214,1045.0" fill="url(#g6)"/>
<polygon points="1870,1038.0 1879.9,1037.4 1880,1037.4 1889.9,1036.9 1890,1036.9 1894.9,1036.6 1895,1036.6 1899.9,1036.3 1900,1036.3 1905,1035.4 1906,1032.9 1907,1028.7 1908,1025.7 1909,1023.2 1910,1020.3 1911,1018.3 1912,1014.3 1913,1011.6 1914,1011.6 1915,1011.9 1916,1011.2 1917,1010.6 1918,1010.6 1919,1010.8 1920,1009.9 1921,1010.3 1922,1010.4 1923,1010.9 1924,1009.6 1925,1010.0 1926,1009.7 1927,1009.6 1928,1010.2 1929,1011.1 1930,1011.1 1931,1011.0 1932,1011.5 1933,1010.9 1934,1010.8 1935,1010.4 1936,1009.9 1937,1010.1 1938,1011.1 1939,1011.0 1940,1011.1 1941,1010.9 1942,1011.3 1943,1011.2 1944,1010.5 1945,1010.5 1946,1011.3 1947,1011.2 1948,1011.9 1949,1011.8 1950,1012.8 1951,1012.8 1952,1013.0 1953,1012.8 1954,1013.1 1955,1012.9 1956,1012.2 1957,1012.4 1958,1011.9 1959,1012.9 1960,1013.3 1961,1013.4 1962,1013.9 1963,1012.9 1964,1014.1 1965,1014.1 1966,1014.9 1967,1015.1 1968,1015.5 1969,1015.4 1970,1015.3 1971,1015.2 1972,1014.1 1973,1013.5 1974,1013.2 1975,1012.9 1976,1012.6 1977,1011.4 1978,1010.4 1979,1009.1 1980,1009.3 1981,1010.1 1982,1010.2 1983,1010.1 1984,1010.3 1985,1010.6 1986,1010.5 1987,1010.8 1988,1011.7 1989,1012.7 1990,1012.1 1991,1011.2 1992,1012.1 1993,1012.4 1994,1012.7 1995,1012.7 1996,1012.3 1997,1012.5 1998,1012.8 1999,1013.0 2000,1012.1 2001,1010.2 2002,1007.6 2003,1005.3 2004,1004.7 2005,1003.7 2006,1004.2 2007,1003.6 2008,1002.8 2009,1001.9 2010,1001.2 2011,1000.3 2012,999.8 2013,999.5 2014,999.1 2015,998.0 2016,997.5 2017,997.2 2018,996.3 2019,996.3 2020,995.9 2021,995.7 2022,995.7 2023,995.1 2024,995.6 2025,995.8 2026,995.1 2027,995.0 2028,994.9 2029,994.0 2030,993.4 2031,993.3 2032,991.5 2033,990.6 2034,990.6 2035,990.6 2036,989.8 2037,990.0 2038,990.8 2039,990.3 2040,989.8 2041,989.3 2042,988.1 2043,987.5 2044,986.8 2045,986.3 2046,986.1 2047,985.1 2048,984.3 2049,983.5 2050,983.4 2051,981.6 2052,980.7 2053,979.5 2054,978.7 2055,978.3 2056,977.5 2057,977.1 2058,976.4 2059,975.2 2060,974.1 2061,972.7 2062,972.3 2063,971.4 2064,971.3 2065,971.1 2066,969.9 2067,968.7 2068,968.4 2069,967.3 2070,967.1 2071,967.0 2072,966.4 2073,966.9 2074,966.0 2075,965.8 2076,965.1 2077,963.2 2078,962.9 2079,962.0 2080,961.1 2081,959.8 2082,958.2 2083,956.8 2084,955.5 2085,954.7 2086,953.3 2087,952.6 2088,951.7 2089,949.9 2090,949.1 2091,946.7 2092,946.4 2093,945.6 2094,945.2 2095,945.5 2096,945.1 2097,944.6 2098,944.8 2099,943.9 2100,943.0 2101,943.1 2102,942.8 2103,940.5 2104,939.1 2105,938.0 2106,936.4 2107,934.7 2108,933.3 2109,932.2 2110,931.7 2111,932.0 2112,931.1 2113,931.0 2114,932.0 2115,931.3 2116,931.1 2117,929.9 2118,929.5 2119,926.9 2120,916.1 2121,905.1 2122,902.4 2123,901.4 2124,900.8 2125,900.3 2126,900.1 2127,899.9 2128,898.4 2129,898.9 2130,897.8 2131,896.6 2132,894.9 2133,894.0 2134,892.5 2135,892.0 2136,890.9 2137,890.3 2138,889.1 2139,888.3 2140,888.6 2141,888.1 2142,887.1 2143,885.9 2144,887.0 2145,886.4 2146,886.1 2147,887.2 2148,887.3 2149,888.4 2150,889.0 2151,890.4 2152,891.4 2153,891.8 2154,891.9 2155,892.6 2156,893.7 2157,894.1 2158,893.1 2159,893.5 2160,894.0 2161,893.7 2162,893.0 2163,893.0 2164,891.7 2165,891.4 2166,889.8 2167,887.9 2168,886.3 2169,884.8 2170,883.3 2171,881.9 2172,881.1 2173,880.2 2174,879.0 2175,877.8 2176,876.8 2177,876.0 2178,874.9 2179,874.5 2180,873.7 2181,873.3 2182,873.5 2183,873.5 2184,874.1 2185,873.4 2186,872.2 2187,871.7 2188,872.7 2189,873.0 2190,872.6 2191,873.1 2192,872.6 2193,873.2 2194,872.7 2195,872.2 2196,872.2 2197,871.3 2198,870.9 2199,871.6 2200,871.3 2201,870.4 2202,869.9 2203,869.6 2204,868.9 2205,868.8 2206,869.1 2207,868.8 2208,868.5 2209,865.3 2210,861.9 2211,858.1 2212,858.6 2213,866.8 2213.4,866.4 2213.4,916.4 2213,916.1 2212,907.7 2211,906.8 2210,908.9 2209,911.4 2208,913.3 2207,914.7 2206,917.5 2205,918.2 2204,918.9 2203,918.2 2202,919.0 2201,918.1 2200,917.6 2199,918.2 2198,918.0 2197,917.9 2196,918.1 2195,917.5 2194,917.4 2193,918.0 2192,918.0 2191,918.2 2190,918.7 2189,918.9 2188,918.9 2187,919.3 2186,919.4 2185,919.9 2184,920.1 2183,920.6 2182,920.8 2181,921.2 2180,922.3 2179,922.7 2178,923.6 2177,923.8 2176,924.5 2175,924.6 2174,925.5 2173,926.4 2172,927.3 2171,928.0 2170,928.8 2169,929.2 2168,930.1 2167,930.7 2166,931.1 2165,931.2 2164,931.7 2163,932.2 2162,931.9 2161,931.4 2160,930.4 2159,930.4 2158,930.7 2157,931.3 2156,931.7 2155,931.3 2154,930.5 2153,930.7 2152,930.0 2151,929.6 2150,928.7 2149,928.9 2148,928.1 2147,926.6 2146,926.4 2145,925.7 2144,926.1 2143,926.2 2142,926.7 2141,926.8 2140,927.3 2139,928.0 2138,929.0 2137,928.7 2136,929.2 2135,929.4 2134,929.1 2133,929.5 2132,929.4 2131,929.8 2130,929.6 2129,929.5 2128,929.3 2127,929.5 2126,929.7 2125,930.2 2124,930.3 2123,930.5 2122,931.1 2121,934.4 2120,943.9 2119,954.4 2118,954.8 2117,954.3 2116,954.8 2115,955.2 2114,956.1 2113,955.4 2112,956.2 2111,956.4 2110,956.8 2109,957.3 2108,957.0 2107,958.0 2106,959.4 2105,960.5 2104,961.8 2103,962.9 2102,964.4 2101,964.0 2100,964.0 2099,964.3 2098,964.7 2097,965.5 2096,965.6 2095,965.1 2094,964.4 2093,964.7 2092,965.0 2091,965.1 2090,965.8 2089,967.2 2088,968.6 2087,969.1 2086,970.6 2085,972.9 2084,973.9 2083,975.7 2082,976.4 2081,978.2 2080,979.1 2079,979.5 2078,980.5 2077,981.3 2076,980.9 2075,981.3 2074,982.0 2073,982.5 2072,983.0 2071,982.9 2070,983.6 2069,984.4 2068,985.4 2067,985.8 2066,986.0 2065,987.1 2064,988.1 2063,989.3 2062,989.8 2061,990.3 2060,990.7 2059,991.3 2058,991.4 2057,991.8 2056,991.9 2055,991.8 2054,991.4 2053,992.2 2052,992.3 2051,993.2 2050,994.4 2049,995.3 2048,995.5 2047,996.4 2046,996.8 2045,997.4 2044,997.2 2043,996.8 2042,997.3 2041,998.5 2040,998.3 2039,998.4 2038,999.0 2037,1000.4 2036,999.6 2035,1000.3 2034,1000.5 2033,1000.6 2032,1001.4 2031,1002.1 2030,1001.9 2029,1001.5 2028,1001.9 2027,1002.1 2026,1001.8 2025,1001.5 2024,1001.3 2023,1001.7 2022,1002.1 2021,1002.0 2020,1002.4 2019,1002.3 2018,1002.3 2017,1002.0 2016,1003.2 2015,1003.8 2014,1004.4 2013,1004.8 2012,1005.2 2011,1005.6 2010,1006.4 2009,1006.1 2008,1006.5 2007,1007.0 2006,1007.7 2005,1009.3 2004,1009.7 2003,1009.7 2002,1011.2 2001,1012.5 2000,1015.3 1999,1015.3 1998,1014.7 1997,1015.2 1996,1015.8 1995,1015.9 1994,1015.4 1993,1014.3 1992,1013.6 1991,1013.7 1990,1014.1 1989,1013.7 1988,1014.2 1987,1014.0 1986,1013.6 1985,1013.5 1984,1013.4 1983,1013.0 1982,1012.9 1981,1013.5 1980,1012.9 1979,1013.0 1978,1013.3 1977,1013.8 1976,1013.5 1975,1013.8 1974,1013.2 1973,1013.5 1972,1014.1 1971,1015.2 1970,1015.3 1969,1015.4 1968,1015.5 1967,1015.1 1966,1015.7 1965,1015.8 1964,1015.9 1963,1016.4 1962,1016.4 1961,1016.9 1960,1017.0 1959,1017.2 1958,1017.6 1957,1018.4 1956,1018.5 1955,1018.3 1954,1018.3 1953,1017.6 1952,1017.5 1951,1018.1 1950,1018.1 1949,1018.7 1948,1018.4 1947,1018.8 1946,1019.3 1945,1019.5 1944,1019.4 1943,1019.9 1942,1020.1 1941,1021.3 1940,1021.9 1939,1021.6 1938,1022.8 1937,1023.8 1936,1023.8 1935,1024.6 1934,1024.4 1933,1024.1 1932,1024.3 1931,1024.3 1930,1024.5 1929,1024.3 1928,1025.4 1927,1026.4 1926,1025.6 1925,1026.4 1924,1026.7 1923,1026.9 1922,1026.8 1921,1026.8 1920,1027.3 1919,1027.3 1918,1026.5 1917,1025.8 1916,1025.5 1915,1025.3 1914,1026.0 1913,1025.1 1912,1026.2 1911,1028.3 1910,1029.9 1909,1030.9 1908,1032.6 1907,1033.9 1906,1035.1 1905,1035.4 1900,1037.0 1899.9,1037.0 1895,1037.4 1894.9,1037.4 1890,1037.6 1889.9,1037.6 1880,1038.0 1879.9,1038.0 1870,1038.0" fill="url(#g7)"/>
<polygon points="1027,1033.0 1061.9,1033.0 1062,1033.0 1064.9,1029.1 1065,1029.0 1100.9,1028.0 1101,1028.0 1102.9,1026.1 1103,1026.0 1135.9,1024.0 1136,1024.0 1143.9,1021.0 1144,1021.0 1152.9,1019.0 1153,1019.0 1166.9,1019.0 1167,1019.0 1169.9,1018.9 1170,1018.9 1199.9,1018.3 1200,1018.3 1367.9,1014.8 1368,1014.8 1499.9,1012.0 1500,1012.0 1699.9,1008.8 1700,1008.8 1759.9,1007.9 1760,1007.9 1779.9,1007.6 1780,1007.6 1869.9,1006.2 1870,1006.2 1879.9,1006.0 1880,1006.0 1889.9,1005.9 1890,1005.9 1894.9,1005.8 1895,1005.8 1899.9,1005.7 1900,1005.7 1905,1005.6 1906,1005.2 1907,1005.5 1908,1005.5 1909,1006.1 1910,1006.2 1911,1006.1 1912,1005.3 1913,1005.6 1914,1005.9 1915,1006.1 1916,1006.3 1917,1006.4 1918,1007.8 1919,1007.8 1920,1005.6 1921,1004.9 1922,1004.4 1923,1004.1 1924,1003.9 1925,1003.4 1926,1003.4 1927,1003.5 1928,1002.9 1929,1003.1 1930,1002.5 1931,1001.6 1932,1001.2 1933,1000.0 1934,999.5 1935,998.6 1936,998.1 1937,997.9 1938,996.4 1939,996.4 1940,996.2 1941,995.8 1942,995.9 1943,995.6 1944,995.0 1945,994.1 1946,994.7 1947,995.2 1948,994.5 1949,994.4 1950,994.0 1951,994.7 1952,994.6 1953,994.2 1954,995.2 1955,995.6 1956,995.8 1957,996.0 1958,996.0 1959,996.1 1960,996.6 1961,995.8 1962,994.3 1963,993.2 1964,992.9 1965,992.4 1966,992.0 1967,992.4 1968,992.2 1969,993.9 1970,994.3 1971,993.7 1972,993.0 1973,993.1 1974,991.6 1975,990.7 1976,989.0 1977,989.1 1978,988.9 1979,989.5 1980,989.1 1981,988.3 1982,987.8 1983,988.0 1984,987.4 1985,987.5 1986,987.0 1987,986.3 1988,985.6 1989,986.0 1990,984.9 1991,984.6 1992,984.6 1993,983.6 1994,982.2 1995,982.3 1996,982.4 1997,981.3 1998,979.9 1999,979.6 2000,978.7 2001,977.5 2002,976.6 2003,974.7 2004,973.9 2005,973.0 2006,972.1 2007,972.2 2008,972.0 2009,972.5 2010,970.6 2011,970.0 2012,969.2 2013,969.6 2014,969.7 2015,969.5 2016,969.3 2017,968.7 2018,968.2 2019,967.7 2020,966.3 2021,967.2 2022,967.4 2023,968.2 2024,968.4 2025,968.1 2026,968.0 2027,966.6 2028,965.7 2029,965.6 2030,965.0 2031,963.7 2032,963.3 2033,962.3 2034,962.0 2035,962.5 2036,961.5 2037,960.9 2038,960.9 2039,960.5 2040,960.2 2041,959.3 2042,958.5 2043,956.6 2044,956.0 2045,956.1 2046,954.8 2047,954.1 2048,953.8 2049,953.7 2050,953.5 2051,952.1 2052,951.1 2053,951.2 2054,950.0 2055,949.3 2056,947.9 2057,946.7 2058,944.3 2059,943.5 2060,941.7 2061,940.7 2062,939.8 2063,940.0 2064,939.7 2065,939.2 2066,938.2 2067,936.9 2068,936.7 2069,935.8 2070,935.3 2071,935.2 2072,934.6 2073,934.0 2074,932.9 2075,932.9 2076,932.5 2077,932.2 2078,932.3 2079,930.1 2080,928.6 2081,927.4 2082,925.9 2083,924.5 2084,923.1 2085,920.7 2086,919.2 2087,918.4 2088,917.2 2089,916.0 2090,915.3 2091,913.2 2092,912.4 2093,912.0 2094,911.0 2095,909.9 2096,909.6 2097,908.8 2098,907.8 2099,907.3 2100,906.0 2101,905.9 2102,904.7 2103,903.7 2104,903.4 2105,902.5 2106,900.8 2107,899.5 2108,898.2 2109,897.1 2110,894.5 2111,894.5 2112,893.1 2113,893.1 2114,893.3 2115,892.5 2116,892.3 2117,892.3 2118,891.7 2119,889.4 2120,882.2 2121,873.4 2122,865.5 2123,860.4 2124,858.4 2125,857.0 2126,855.6 2127,853.5 2128,852.1 2129,850.1 2130,847.0 2131,844.8 2132,842.9 2133,841.0 2134,838.2 2135,837.5 2136,834.7 2137,832.2 2138,831.3 2139,831.0 2140,831.3 2141,830.9 2142,830.6 2143,830.5 2144,829.6 2145,829.5 2146,829.9 2147,831.1 2148,831.5 2149,832.7 2150,833.0 2151,833.2 2152,832.9 2153,833.0 2154,832.6 2155,832.3 2156,833.1 2157,835.2 2158,836.6 2159,838.2 2160,839.9 2161,838.6 2162,836.9 2163,835.7 2164,835.1 2165,833.2 2166,831.3 2167,829.3 2168,827.8 2169,825.9 2170,824.2 2171,823.2 2172,821.3 2173,820.0 2174,818.3 2175,817.1 2176,816.2 2177,814.1 2178,813.0 2179,812.1 2180,810.9 2181,810.4 2182,810.2 2183,809.1 2184,808.7 2185,808.7 2186,808.9 2187,807.7 2188,806.9 2189,805.9 2190,805.5 2191,804.6 2192,803.7 2193,803.7 2194,804.4 2195,802.7 2196,803.1 2197,802.0 2198,801.7 2199,801.3 2200,801.3 2201,799.6 2202,797.1 2203,795.1 2204,793.5 2205,790.9 2206,789.2 2207,785.3 2208,777.2 2209,769.1 2210,761.2 2211,762.7 2212,769.6 2213,776.6 2213.4,775.5 2213.4,866.4 2213,866.8 2212,858.6 2211,858.1 2210,861.9 2209,865.3 2208,868.5 2207,868.8 2206,869.1 2205,868.8 2204,868.9 2203,869.6 2202,869.9 2201,870.4 2200,871.3 2199,871.6 2198,870.9 2197,871.3 2196,872.2 2195,872.2 2194,872.7 2193,873.2 2192,872.6 2191,873.1 2190,872.6 2189,873.0 2188,872.7 2187,871.7 2186,872.2 2185,873.4 2184,874.1 2183,873.5 2182,873.5 2181,873.3 2180,873.7 2179,874.5 2178,874.9 2177,876.0 2176,876.8 2175,877.8 2174,879.0 2173,880.2 2172,881.1 2171,881.9 2170,883.3 2169,884.8 2168,886.3 2167,887.9 2166,889.8 2165,891.4 2164,891.7 2163,893.0 2162,893.0 2161,893.7 2160,894.0 2159,893.5 2158,893.1 2157,894.1 2156,893.7 2155,892.6 2154,891.9 2153,891.8 2152,891.4 2151,890.4 2150,889.0 2149,888.4 2148,887.3 2147,887.2 2146,886.1 2145,886.4 2144,887.0 2143,885.9 2142,887.1 2141,888.1 2140,888.6 2139,888.3 2138,889.1 2137,890.3 2136,890.9 2135,892.0 2134,892.5 2133,894.0 2132,894.9 2131,896.6 2130,897.8 2129,898.9 2128,898.4 2127,899.9 2126,900.1 2125,900.3 2124,900.8 2123,901.4 2122,902.4 2121,905.1 2120,916.1 2119,926.9 2118,929.5 2117,929.9 2116,931.1 2115,931.3 2114,932.0 2113,931.0 2112,931.1 2111,932.0 2110,931.7 2109,932.2 2108,933.3 2107,934.7 2106,936.4 2105,938.0 2104,939.1 2103,940.5 2102,942.8 2101,943.1 2100,943.0 2099,943.9 2098,944.8 2097,944.6 2096,945.1 2095,945.5 2094,945.2 2093,945.6 2092,946.4 2091,946.7 2090,949.1 2089,949.9 2088,951.7 2087,952.6 2086,953.3 2085,954.7 2084,955.5 2083,956.8 2082,958.2 2081,959.8 2080,961.1 2079,962.0 2078,962.9 2077,963.2 2076,965.1 2075,965.8 2074,966.0 2073,966.9 2072,966.4 2071,967.0 2070,967.1 2069,967.3 2068,968.4 2067,968.7 2066,969.9 2065,971.1 2064,971.3 2063,971.4 2062,972.3 2061,972.7 2060,974.1 2059,975.2 2058,976.4 2057,977.1 2056,977.5 2055,978.3 2054,978.7 2053,979.5 2052,980.7 2051,981.6 2050,983.4 2049,983.5 2048,984.3 2047,985.1 2046,986.1 2045,986.3 2044,986.8 2043,987.5 2042,988.1 2041,989.3 2040,989.8 2039,990.3 2038,990.8 2037,990.0 2036,989.8 2035,990.6 2034,990.6 2033,990.6 2032,991.5 2031,993.3 2030,993.4 2029,994.0 2028,994.9 2027,995.0 2026,995.1 2025,995.8 2024,995.6 2023,995.1 2022,995.7 2021,995.7 2020,995.9 2019,996.3 2018,996.3 2017,997.2 2016,997.5 2015,998.0 2014,999.1 2013,999.5 2012,999.8 2011,1000.3 2010,1001.2 2009,1001.9 2008,1002.8 2007,1003.6 2006,1004.2 2005,1003.7 2004,1004.7 2003,1005.3 2002,1007.6 2001,1010.2 2000,1012.1 1999,1013.0 1998,1012.8 1997,1012.5 1996,1012.3 1995,1012.7 1994,1012.7 1993,1012.4 1992,1012.1 1991,1011.2 1990,1012.1 1989,1012.7 1988,1011.7 1987,1010.8 1986,1010.5 1985,1010.6 1984,1010.3 1983,1010.1 1982,1010.2 1981,1010.1 1980,1009.3 1979,1009.1 1978,1010.4 1977,1011.4 1976,1012.6 1975,1012.9 1974,1013.2 1973,1013.5 1972,1014.1 1971,1015.2 1970,1015.3 1969,1015.4 1968,1015.5 1967,1015.1 1966,1014.9 1965,1014.1 1964,1014.1 1963,1012.9 1962,1013.9 1961,1013.4 1960,1013.3 1959,1012.9 1958,1011.9 1957,1012.4 1956,1012.2 1955,1012.9 1954,1013.1 1953,1012.8 1952,1013.0 1951,1012.8 1950,1012.8 1949,1011.8 1948,1011.9 1947,1011.2 1946,1011.3 1945,1010.5 1944,1010.5 1943,1011.2 1942,1011.3 1941,1010.9 1940,1011.1 1939,1011.0 1938,1011.1 1937,1010.1 1936,1009.9 1935,1010.4 1934,1010.8 1933,1010.9 1932,1011.5 1931,1011.0 1930,1011.1 1929,1011.1 1928,1010.2 1927,1009.6 1926,1009.7 1925,1010.0 1924,1009.6 1923,1010.9 1922,1010.4 1921,1010.3 1920,1009.9 1919,1010.8 1918,1010.6 1917,1010.6 1916,1011.2 1915,1011.9 1914,1011.6 1913,1011.6 1912,1014.3 1911,1018.3 1910,1020.3 1909,1023.2 1908,1025.7 1907,1028.7 1906,1032.9 1905,1035.4 1900,1036.3 1899.9,1036.3 1895,1036.6 1894.9,1036.6 1890,1036.9 1889.9,1036.9 1880,1037.4 1879.9,1037.4 1870,1038.0 1869.9,1038.0 1780,1038.3 1779.9,1038.3 1760,1038.3 1759.9,1038.3 1700,1038.5 1699.9,1038.5 1500,1039.0 1499.9,1039.0 1368,1039.0 1367.9,1039.0 1200,1039.0 1199.9,1039.0 1170,1037.0 1169.9,1037.0 1167,1037.0 1166.9,1037.0 1153,1037.0 1152.9,1037.0 1144,1037.0 1143.9,1037.0 1136,1037.0 1135.9,1037.0 1103,1037.0 1102.9,1037.0 1101,1037.0 1100.9,1037.0 1065,1037.8 1064.9,1037.8 1062,1037.8 1061.9,1037.8 1027,1038.5" fill="url(#g8)"/>
<polygon points="1027,1033.0 1061.9,1033.0 1062,1033.0 1064.9,1029.1 1065,1029.0 1100.9,1028.0 1101,1028.0 1102.9,1026.1 1103,1026.0 1135.9,1024.0 1136,1024.0 1143.9,1021.0 1144,1021.0 1152.9,1019.0 1153,1019.0 1166.9,1019.0 1167,1019.0 1169.9,1018.8 1170,1018.8 1199.9,1017.1 1200,1017.1 1367.9,1007.5 1368,1007.5 1499.9,1000.0 1500,1000.0 1699.9,968.4 1700,968.4 1759.9,959.0 1760,958.9 1779.9,955.8 1780,955.8 1869.9,941.6 1870,941.6 1879.9,940.0 1880,940.0 1889.9,938.5 1890,938.5 1894.9,937.8 1895,937.8 1899.9,937.0 1900,937.0 1905,936.3 1906,935.6 1907,934.7 1908,935.1 1909,934.4 1910,934.1 1911,934.4 1912,935.0 1913,935.5 1914,933.6 1915,931.5 1916,929.8 1917,932.8 1918,936.2 1919,933.5 1920,931.2 1921,929.8 1922,927.8 1923,927.4 1924,928.7 1925,931.1 1926,933.0 1927,933.1 1928,934.9 1929,935.1 1930,935.5 1931,935.7 1932,935.9 1933,936.0 1934,934.5 1935,934.0 1936,933.3 1937,933.8 1938,933.4 1939,932.9 1940,932.5 1941,932.1 1942,931.4 1943,929.3 1944,929.1 1945,928.6 1946,928.8 1947,928.6 1948,928.0 1949,927.2 1950,926.4 1951,926.4 1952,926.1 1953,925.4 1954,925.1 1955,925.2 1956,924.6 1957,924.4 1958,923.9 1959,922.3 1960,921.5 1961,920.1 1962,919.0 1963,918.1 1964,916.0 1965,916.1 1966,917.5 1967,918.7 1968,920.4 1969,922.1 1970,920.1 1971,914.5 1972,909.6 1973,908.6 1974,907.7 1975,907.1 1976,904.5 1977,901.7 1978,898.5 1979,894.4 1980,891.4 1981,891.6 1982,892.2 1983,893.1 1984,893.5 1985,893.8 1986,894.5 1987,893.9 1988,893.8 1989,894.7 1990,889.9 1991,882.7 1992,878.2 1993,877.1 1994,876.3 1995,875.9 1996,876.0 1997,876.7 1998,877.0 1999,877.1 2000,876.9 2001,872.5 2002,869.1 2003,864.9 2004,862.7 2005,862.5 2006,861.3 2007,861.2 2008,859.0 2009,855.9 2010,852.1 2011,848.1 2012,843.9 2013,842.9 2014,842.9 2015,843.5 2016,844.0 2017,844.9 2018,843.8 2019,842.4 2020,840.7 2021,839.5 2022,838.1 2023,836.6 2024,836.2 2025,836.5 2026,837.3 2027,837.4 2028,836.6 2029,834.4 2030,832.8 2031,831.8 2032,830.8 2033,829.2 2034,828.8 2035,828.2 2036,827.9 2037,827.2 2038,826.7 2039,826.3 2040,826.1 2041,825.8 2042,824.2 2043,822.6 2044,822.1 2045,821.3 2046,820.1 2047,818.3 2048,818.5 2049,817.7 2050,818.3 2051,818.3 2052,818.0 2053,817.1 2054,815.6 2055,813.7 2056,810.8 2057,808.7 2058,806.4 2059,805.8 2060,805.4 2061,805.0 2062,803.1 2063,803.3 2064,803.1 2065,805.1 2066,806.9 2067,809.5 2068,813.3 2069,814.2 2070,813.3 2071,811.6 2072,810.7 2073,811.3 2074,810.8 2075,809.1 2076,806.4 2077,805.3 2078,804.1 2079,801.2 2080,798.5 2081,796.0 2082,793.8 2083,791.6 2084,789.4 2085,786.3 2086,783.1 2087,779.9 2088,778.3 2089,777.0 2090,773.3 2091,771.0 2092,771.0 2093,770.3 2094,769.5 2095,769.3 2096,768.6 2097,767.7 2098,767.2 2099,766.9 2100,766.5 2101,766.5 2102,766.0 2103,765.2 2104,766.4 2105,765.6 2106,763.2 2107,760.3 2108,757.1 2109,754.8 2110,755.0 2111,755.9 2112,754.9 2113,754.6 2114,754.9 2115,753.9 2116,753.6 2117,752.9 2118,751.6 2119,745.4 2120,735.3 2121,725.2 2122,712.5 2123,704.4 2124,703.6 2125,702.1 2126,700.5 2127,698.5 2128,697.3 2129,695.9 2130,693.8 2131,691.9 2132,689.4 2133,688.1 2134,685.8 2135,683.8 2136,681.4 2137,679.1 2138,676.7 2139,674.1 2140,672.3 2141,670.7 2142,669.5 2143,667.9 2144,667.5 2145,668.4 2146,669.3 2147,670.2 2148,671.2 2149,671.6 2150,672.3 2151,672.3 2152,673.3 2153,675.0 2154,677.1 2155,678.5 2156,679.5 2157,681.2 2158,680.6 2159,679.6 2160,679.2 2161,678.6 2162,676.0 2163,674.7 2164,674.4 2165,674.0 2166,674.1 2167,675.3 2168,675.8 2169,675.1 2170,673.7 2171,670.7 2172,668.6 2173,667.9 2174,667.1 2175,665.5 2176,664.1 2177,664.2 2178,662.7 2179,660.8 2180,659.6 2181,656.8 2182,655.6 2183,654.5 2184,655.3 2185,654.6 2186,654.6 2187,654.0 2188,654.4 2189,654.9 2190,655.3 2191,655.4 2192,654.2 2193,650.1 2194,646.5 2195,645.7 2196,645.0 2197,643.0 2198,641.3 2199,639.9 2200,639.4 2201,638.1 2202,638.5 2203,634.8 2204,628.0 2205,621.5 2206,615.1 2207,613.4 2208,611.6 2209,610.3 2210,596.4 2211,582.7 2212,585.5 2213,595.3 2213.4,599.7 2213.4,775.5 2213,776.6 2212,769.6 2211,762.7 2210,761.2 2209,769.1 2208,777.2 2207,785.3 2206,789.2 2205,790.9 2204,793.5 2203,795.1 2202,797.1 2201,799.6 2200,801.3 2199,801.3 2198,801.7 2197,802.0 2196,803.1 2195,802.7 2194,804.4 2193,803.7 2192,803.7 2191,804.6 2190,805.5 2189,805.9 2188,806.9 2187,807.7 2186,808.9 2185,808.7 2184,808.7 2183,809.1 2182,810.2 2181,810.4 2180,810.9 2179,812.1 2178,813.0 2177,814.1 2176,816.2 2175,817.1 2174,818.3 2173,820.0 2172,821.3 2171,823.2 2170,824.2 2169,825.9 2168,827.8 2167,829.3 2166,831.3 2165,833.2 2164,835.1 2163,835.7 2162,836.9 2161,838.6 2160,839.9 2159,838.2 2158,836.6 2157,835.2 2156,833.1 2155,832.3 2154,832.6 2153,833.0 2152,832.9 2151,833.2 2150,833.0 2149,832.7 2148,831.5 2147,831.1 2146,829.9 2145,829.5 2144,829.6 2143,830.5 2142,830.6 2141,830.9 2140,831.3 2139,831.0 2138,831.3 2137,832.2 2136,834.7 2135,837.5 2134,838.2 2133,841.0 2132,842.9 2131,844.8 2130,847.0 2129,850.1 2128,852.1 2127,853.5 2126,855.6 2125,857.0 2124,858.4 2123,860.4 2122,865.5 2121,873.4 2120,882.2 2119,889.4 2118,891.7 2117,892.3 2116,892.3 2115,892.5 2114,893.3 2113,893.1 2112,893.1 2111,894.5 2110,894.5 2109,897.1 2108,898.2 2107,899.5 2106,900.8 2105,902.5 2104,903.4 2103,903.7 2102,904.7 2101,905.9 2100,906.0 2099,907.3 2098,907.8 2097,908.8 2096,909.6 2095,909.9 2094,911.0 2093,912.0 2092,912.4 2091,913.2 2090,915.3 2089,916.0 2088,917.2 2087,918.4 2086,919.2 2085,920.7 2084,923.1 2083,924.5 2082,925.9 2081,927.4 2080,928.6 2079,930.1 2078,932.3 2077,932.2 2076,932.5 2075,932.9 2074,932.9 2073,934.0 2072,934.6 2071,935.2 2070,935.3 2069,935.8 2068,936.7 2067,936.9 2066,938.2 2065,939.2 2064,939.7 2063,940.0 2062,939.8 2061,940.7 2060,941.7 2059,943.5 2058,944.3 2057,946.7 2056,947.9 2055,949.3 2054,950.0 2053,951.2 2052,951.1 2051,952.1 2050,953.5 2049,953.7 2048,953.8 2047,954.1 2046,954.8 2045,956.1 2044,956.0 2043,956.6 2042,958.5 2041,959.3 2040,960.2 2039,960.5 2038,960.9 2037,960.9 2036,961.5 2035,962.5 2034,962.0 2033,962.3 2032,963.3 2031,963.7 2030,965.0 2029,965.6 2028,965.7 2027,966.6 2026,968.0 2025,968.1 2024,968.4 2023,968.2 2022,967.4 2021,967.2 2020,966.3 2019,967.7 2018,968.2 2017,968.7 2016,969.3 2015,969.5 2014,969.7 2013,969.6 2012,969.2 2011,970.0 2010,970.6 2009,972.5 2008,972.0 2007,972.2 2006,972.1 2005,973.0 2004,973.9 2003,974.7 2002,976.6 2001,977.5 2000,978.7 1999,979.6 1998,979.9 1997,981.3 1996,982.4 1995,982.3 1994,982.2 1993,983.6 1992,984.6 1991,984.6 1990,984.9 1989,986.0 1988,985.6 1987,986.3 1986,987.0 1985,987.5 1984,987.4 1983,988.0 1982,987.8 1981,988.3 1980,989.1 1979,989.5 1978,988.9 1977,989.1 1976,989.0 1975,990.7 1974,991.6 1973,993.1 1972,993.0 1971,993.7 1970,994.3 1969,993.9 1968,992.2 1967,992.4 1966,992.0 1965,992.4 1964,992.9 1963,993.2 1962,994.3 1961,995.8 1960,996.6 1959,996.1 1958,996.0 1957,996.0 1956,995.8 1955,995.6 1954,995.2 1953,994.2 1952,994.6 1951,994.7 1950,994.0 1949,994.4 1948,994.5 1947,995.2 1946,994.7 1945,994.1 1944,995.0 1943,995.6 1942,995.9 1941,995.8 1940,996.2 1939,996.4 1938,996.4 1937,997.9 1936,998.1 1935,998.6 1934,999.5 1933,1000.0 1932,1001.2 1931,1001.6 1930,1002.5 1929,1003.1 1928,1002.9 1927,1003.5 1926,1003.4 1925,1003.4 1924,1003.9 1923,1004.1 1922,1004.4 1921,1004.9 1920,1005.6 1919,1007.8 1918,1007.8 1917,1006.4 1916,1006.3 1915,1006.1 1914,1005.9 1913,1005.6 1912,1005.3 1911,1006.1 1910,1006.2 1909,1006.1 1908,1005.5 1907,1005.5 1906,1005.2 1905,1005.6 1900,1005.7 1899.9,1005.7 1895,1005.8 1894.9,1005.8 1890,1005.9 1889.9,1005.9 1880,1006.0 1879.9,1006.0 1870,1006.2 1869.9,1006.2 1780,1007.6 1779.9,1007.6 1760,1007.9 1759.9,1007.9 1700,1008.8 1699.9,1008.8 1500,1012.0 1499.9,1012.0 1368,1014.8 1367.9,1014.8 1200,1018.3 1199.9,1018.3 1170,1018.9 1169.9,1018.9 1167,1019.0 1166.9,1019.0 1153,1019.0 1152.9,1019.0 1144,1021.0 1143.9,1021.0 1136,1024.0 1135.9,1024.0 1103,1026.0 1102.9,1026.1 1101,1028.0 1100.9,1028.0 1065,1029.0 1064.9,1029.1 1062,1033.0 1061.9,1033.0 1027,1033.0" fill="url(#g9)"/>
<polyline points="1027,1033.0 1061.9,1033.0 1062,1033.0 1064.9,1029.1 1065,1029.0 1100.9,1028.0 1101,1028.0 1102.9,1026.1 1103,1026.0 1135.9,1024.0 1136,1024.0 1143.9,1021.0 1144,1021.0 1152.9,1019.0 1153,1019.0 1166.9,1019.0 1167,1019.0 1169.9,1018.8 1170,1018.8 1199.9,1017.1 1200,1017.1 1367.9,1007.5 1368,1007.5 1499.9,1000.0 1500,1000.0 1699.9,968.4 1700,968.4 1759.9,959.0 1760,958.9 1779.9,955.8 1780,955.8 1869.9,941.6 1870,941.6 1879.9,940.0 1880,940.0 1889.9,938.5 1890,938.5 1894.9,937.8 1895,937.8 1899.9,937.0 1900,937.0 1905,936.3 1906,935.6 1907,934.7 1908,935.1 1909,934.4 1910,934.1 1911,934.4 1912,935.0 1913,935.5 1914,933.6 1915,931.5 1916,929.8 1917,932.8 1918,936.2 1919,933.5 1920,931.2 1921,929.8 1922,927.8 1923,927.4 1924,928.7 1925,931.1 1926,933.0 1927,933.1 1928,934.9 1929,935.1 1930,935.5 1931,935.7 1932,935.9 1933,936.0 1934,934.5 1935,934.0 1936,933.3 1937,933.8 1938,933.4 1939,932.9 1940,932.5 1941,932.1 1942,931.4 1943,929.3 1944,929.1 1945,928.6 1946,928.8 1947,928.6 1948,928.0 1949,927.2 1950,926.4 1951,926.4 1952,926.1 1953,925.4 1954,925.1 1955,925.2 1956,924.6 1957,924.4 1958,923.9 1959,922.3 1960,921.5 1961,920.1 1962,919.0 1963,918.1 1964,916.0 1965,916.1 1966,917.5 1967,918.7 1968,920.4 1969,922.1 1970,920.1 1971,914.5 1972,909.6 1973,908.6 1974,907.7 1975,907.1 1976,904.5 1977,901.7 1978,898.5 1979,894.4 1980,891.4 1981,891.6 1982,892.2 1983,893.1 1984,893.5 1985,893.8 1986,894.5 1987,893.9 1988,893.8 1989,894.7 1990,889.9 1991,882.7 1992,878.2 1993,877.1 1994,876.3 1995,875.9 1996,876.0 1997,876.7 1998,877.0 1999,877.1 2000,876.9 2001,872.5 2002,869.1 2003,864.9 2004,862.7 2005,862.5 2006,861.3 2007,861.2 2008,859.0 2009,855.9 2010,852.1 2011,848.1 2012,843.9 2013,842.9 2014,842.9 2015,843.5 2016,844.0 2017,844.9 2018,843.8 2019,842.4 2020,840.7 2021,839.5 2022,838.1 2023,836.6 2024,836.2 2025,836.5 2026,837.3 2027,837.4 2028,836.6 2029,834.4 2030,832.8 2031,831.8 2032,830.8 2033,829.2 2034,828.8 2035,828.2 2036,827.9 2037,827.2 2038,826.7 2039,826.3 2040,826.1 2041,825.8 2042,824.2 2043,822.6 2044,822.1 2045,821.3 2046,820.1 2047,818.3 2048,818.5 2049,817.7 2050,818.3 2051,818.3 2052,818.0 2053,817.1 2054,815.6 2055,813.7 2056,810.8 2057,808.7 2058,806.4 2059,805.8 2060,805.4 2061,805.0 2062,803.1 2063,803.3 2064,803.1 2065,805.1 2066,806.9 2067,809.5 2068,813.3 2069,814.2 2070,813.3 2071,811.6 2072,810.7 2073,811.3 2074,810.8 2075,809.1 2076,806.4 2077,805.3 2078,804.1 2079,801.2 2080,798.5 2081,796.0 2082,793.8 2083,791.6 2084,789.4 2085,786.3 2086,783.1 2087,779.9 2088,778.3 2089,777.0 2090,773.3 2091,771.0 2092,771.0 2093,770.3 2094,769.5 2095,769.3 2096,768.6 2097,767.7 2098,767.2 2099,766.9 2100,766.5 2101,766.5 2102,766.0 2103,765.2 2104,766.4 2105,765.6 2106,763.2 2107,760.3 2108,757.1 2109,754.8 2110,755.0 2111,755.9 2112,754.9 2113,754.6 2114,754.9 2115,753.9 2116,753.6 2117,752.9 2118,751.6 2119,745.4 2120,735.3 2121,725.2 2122,712.5 2123,704.4 2124,703.6 2125,702.1 2126,700.5 2127,698.5 2128,697.3 2129,695.9 2130,693.8 2131,691.9 2132,689.4 2133,688.1 2134,685.8 2135,683.8 2136,681.4 2137,679.1 2138,676.7 2139,674.1 2140,672.3 2141,670.7 2142,669.5 2143,667.9 2144,667.5 2145,668.4 2146,669.3 2147,670.2 2148,671.2 2149,671.6 2150,672.3 2151,672.3 2152,673.3 2153,675.0 2154,677.1 2155,678.5 2156,679.5 2157,681.2 2158,680.6 2159,679.6 2160,679.2 2161,678.6 2162,676.0 2163,674.7 2164,674.4 2165,674.0 2166,674.1 2167,675.3 2168,675.8 2169,675.1 2170,673.7 2171,670.7 2172,668.6 2173,667.9 2174,667.1 2175,665.5 2176,664.1 2177,664.2 2178,662.7 2179,660.8 2180,659.6 2181,656.8 2182,655.6 2183,654.5 2184,655.3 2185,654.6 2186,654.6 2187,654.0 2188,654.4 2189,654.9 2190,655.3 2191,655.4 2192,654.2 2193,650.1 2194,646.5 2195,645.7 2196,645.0 2197,643.0 2198,641.3 2199,639.9 2200,639.4 2201,638.1 2202,638.5 2203,634.8 2204,628.0 2205,621.5 2206,615.1 2207,613.4 2208,611.6 2209,610.3 2210,596.4 2211,582.7 2212,585.5 2213,595.3 2213.4,599.7" fill="none" stroke="#1d3f73" stroke-width="4.8" stroke-linejoin="round" stroke-linecap="round"/>
<polyline points="1027,1033.0 1061.9,1033.0 1062,1033.0 1064.9,1029.1 1065,1029.0 1100.9,1028.0 1101,1028.0 1102.9,1026.1 1103,1026.0 1135.9,1024.0 1136,1024.0 1143.9,1021.0 1144,1021.0 1152.9,1019.0 1153,1019.0 1166.9,1019.0 1167,1019.0 1169.9,1018.9 1170,1018.9 1199.9,1018.3 1200,1018.3 1367.9,1014.8 1368,1014.8 1499.9,1012.0 1500,1012.0 1699.9,1008.8 1700,1008.8 1759.9,1007.9 1760,1007.9 1779.9,1007.6 1780,1007.6 1869.9,1006.2 1870,1006.2 1879.9,1006.0 1880,1006.0 1889.9,1005.9 1890,1005.9 1894.9,1005.8 1895,1005.8 1899.9,1005.7 1900,1005.7 1905,1005.6 1906,1005.2 1907,1005.5 1908,1005.5 1909,1006.1 1910,1006.2 1911,1006.1 1912,1005.3 1913,1005.6 1914,1005.9 1915,1006.1 1916,1006.3 1917,1006.4 1918,1007.8 1919,1007.8 1920,1005.6 1921,1004.9 1922,1004.4 1923,1004.1 1924,1003.9 1925,1003.4 1926,1003.4 1927,1003.5 1928,1002.9 1929,1003.1 1930,1002.5 1931,1001.6 1932,1001.2 1933,1000.0 1934,999.5 1935,998.6 1936,998.1 1937,997.9 1938,996.4 1939,996.4 1940,996.2 1941,995.8 1942,995.9 1943,995.6 1944,995.0 1945,994.1 1946,994.7 1947,995.2 1948,994.5 1949,994.4 1950,994.0 1951,994.7 1952,994.6 1953,994.2 1954,995.2 1955,995.6 1956,995.8 1957,996.0 1958,996.0 1959,996.1 1960,996.6 1961,995.8 1962,994.3 1963,993.2 1964,992.9 1965,992.4 1966,992.0 1967,992.4 1968,992.2 1969,993.9 1970,994.3 1971,993.7 1972,993.0 1973,993.1 1974,991.6 1975,990.7 1976,989.0 1977,989.1 1978,988.9 1979,989.5 1980,989.1 1981,988.3 1982,987.8 1983,988.0 1984,987.4 1985,987.5 1986,987.0 1987,986.3 1988,985.6 1989,986.0 1990,984.9 1991,984.6 1992,984.6 1993,983.6 1994,982.2 1995,982.3 1996,982.4 1997,981.3 1998,979.9 1999,979.6 2000,978.7 2001,977.5 2002,976.6 2003,974.7 2004,973.9 2005,973.0 2006,972.1 2007,972.2 2008,972.0 2009,972.5 2010,970.6 2011,970.0 2012,969.2 2013,969.6 2014,969.7 2015,969.5 2016,969.3 2017,968.7 2018,968.2 2019,967.7 2020,966.3 2021,967.2 2022,967.4 2023,968.2 2024,968.4 2025,968.1 2026,968.0 2027,966.6 2028,965.7 2029,965.6 2030,965.0 2031,963.7 2032,963.3 2033,962.3 2034,962.0 2035,962.5 2036,961.5 2037,960.9 2038,960.9 2039,960.5 2040,960.2 2041,959.3 2042,958.5 2043,956.6 2044,956.0 2045,956.1 2046,954.8 2047,954.1 2048,953.8 2049,953.7 2050,953.5 2051,952.1 2052,951.1 2053,951.2 2054,950.0 2055,949.3 2056,947.9 2057,946.7 2058,944.3 2059,943.5 2060,941.7 2061,940.7 2062,939.8 2063,940.0 2064,939.7 2065,939.2 2066,938.2 2067,936.9 2068,936.7 2069,935.8 2070,935.3 2071,935.2 2072,934.6 2073,934.0 2074,932.9 2075,932.9 2076,932.5 2077,932.2 2078,932.3 2079,930.1 2080,928.6 2081,927.4 2082,925.9 2083,924.5 2084,923.1 2085,920.7 2086,919.2 2087,918.4 2088,917.2 2089,916.0 2090,915.3 2091,913.2 2092,912.4 2093,912.0 2094,911.0 2095,909.9 2096,909.6 2097,908.8 2098,907.8 2099,907.3 2100,906.0 2101,905.9 2102,904.7 2103,903.7 2104,903.4 2105,902.5 2106,900.8 2107,899.5 2108,898.2 2109,897.1 2110,894.5 2111,894.5 2112,893.1 2113,893.1 2114,893.3 2115,892.5 2116,892.3 2117,892.3 2118,891.7 2119,889.4 2120,882.2 2121,873.4 2122,865.5 2123,860.4 2124,858.4 2125,857.0 2126,855.6 2127,853.5 2128,852.1 2129,850.1 2130,847.0 2131,844.8 2132,842.9 2133,841.0 2134,838.2 2135,837.5 2136,834.7 2137,832.2 2138,831.3 2139,831.0 2140,831.3 2141,830.9 2142,830.6 2143,830.5 2144,829.6 2145,829.5 2146,829.9 2147,831.1 2148,831.5 2149,832.7 2150,833.0 2151,833.2 2152,832.9 2153,833.0 2154,832.6 2155,832.3 2156,833.1 2157,835.2 2158,836.6 2159,838.2 2160,839.9 2161,838.6 2162,836.9 2163,835.7 2164,835.1 2165,833.2 2166,831.3 2167,829.3 2168,827.8 2169,825.9 2170,824.2 2171,823.2 2172,821.3 2173,820.0 2174,818.3 2175,817.1 2176,816.2 2177,814.1 2178,813.0 2179,812.1 2180,810.9 2181,810.4 2182,810.2 2183,809.1 2184,808.7 2185,808.7 2186,808.9 2187,807.7 2188,806.9 2189,805.9 2190,805.5 2191,804.6 2192,803.7 2193,803.7 2194,804.4 2195,802.7 2196,803.1 2197,802.0 2198,801.7 2199,801.3 2200,801.3 2201,799.6 2202,797.1 2203,795.1 2204,793.5 2205,790.9 2206,789.2 2207,785.3 2208,777.2 2209,769.1 2210,761.2 2211,762.7 2212,769.6 2213,776.6 2213.4,775.5" fill="none" stroke="#d4a43e" stroke-width="2.7" stroke-linejoin="round" stroke-linecap="round"/>
<polyline points="1870,1038.0 1879.9,1037.4 1880,1037.4 1889.9,1036.9 1890,1036.9 1894.9,1036.6 1895,1036.6 1899.9,1036.3 1900,1036.3 1905,1035.4 1906,1032.9 1907,1028.7 1908,1025.7 1909,1023.2 1910,1020.3 1911,1018.3 1912,1014.3 1913,1011.6 1914,1011.6 1915,1011.9 1916,1011.2 1917,1010.6 1918,1010.6 1919,1010.8 1920,1009.9 1921,1010.3 1922,1010.4 1923,1010.9 1924,1009.6 1925,1010.0 1926,1009.7 1927,1009.6 1928,1010.2 1929,1011.1 1930,1011.1 1931,1011.0 1932,1011.5 1933,1010.9 1934,1010.8 1935,1010.4 1936,1009.9 1937,1010.1 1938,1011.1 1939,1011.0 1940,1011.1 1941,1010.9 1942,1011.3 1943,1011.2 1944,1010.5 1945,1010.5 1946,1011.3 1947,1011.2 1948,1011.9 1949,1011.8 1950,1012.8 1951,1012.8 1952,1013.0 1953,1012.8 1954,1013.1 1955,1012.9 1956,1012.2 1957,1012.4 1958,1011.9 1959,1012.9 1960,1013.3 1961,1013.4 1962,1013.9 1963,1012.9 1964,1014.1 1965,1014.1 1966,1014.9 1967,1015.1 1968,1015.5 1969,1015.4 1970,1015.3 1971,1015.2 1972,1014.1 1973,1013.5 1974,1013.2 1975,1012.9 1976,1012.6 1977,1011.4 1978,1010.4 1979,1009.1 1980,1009.3 1981,1010.1 1982,1010.2 1983,1010.1 1984,1010.3 1985,1010.6 1986,1010.5 1987,1010.8 1988,1011.7 1989,1012.7 1990,1012.1 1991,1011.2 1992,1012.1 1993,1012.4 1994,1012.7 1995,1012.7 1996,1012.3 1997,1012.5 1998,1012.8 1999,1013.0 2000,1012.1 2001,1010.2 2002,1007.6 2003,1005.3 2004,1004.7 2005,1003.7 2006,1004.2 2007,1003.6 2008,1002.8 2009,1001.9 2010,1001.2 2011,1000.3 2012,999.8 2013,999.5 2014,999.1 2015,998.0 2016,997.5 2017,997.2 2018,996.3 2019,996.3 2020,995.9 2021,995.7 2022,995.7 2023,995.1 2024,995.6 2025,995.8 2026,995.1 2027,995.0 2028,994.9 2029,994.0 2030,993.4 2031,993.3 2032,991.5 2033,990.6 2034,990.6 2035,990.6 2036,989.8 2037,990.0 2038,990.8 2039,990.3 2040,989.8 2041,989.3 2042,988.1 2043,987.5 2044,986.8 2045,986.3 2046,986.1 2047,985.1 2048,984.3 2049,983.5 2050,983.4 2051,981.6 2052,980.7 2053,979.5 2054,978.7 2055,978.3 2056,977.5 2057,977.1 2058,976.4 2059,975.2 2060,974.1 2061,972.7 2062,972.3 2063,971.4 2064,971.3 2065,971.1 2066,969.9 2067,968.7 2068,968.4 2069,967.3 2070,967.1 2071,967.0 2072,966.4 2073,966.9 2074,966.0 2075,965.8 2076,965.1 2077,963.2 2078,962.9 2079,962.0 2080,961.1 2081,959.8 2082,958.2 2083,956.8 2084,955.5 2085,954.7 2086,953.3 2087,952.6 2088,951.7 2089,949.9 2090,949.1 2091,946.7 2092,946.4 2093,945.6 2094,945.2 2095,945.5 2096,945.1 2097,944.6 2098,944.8 2099,943.9 2100,943.0 2101,943.1 2102,942.8 2103,940.5 2104,939.1 2105,938.0 2106,936.4 2107,934.7 2108,933.3 2109,932.2 2110,931.7 2111,932.0 2112,931.1 2113,931.0 2114,932.0 2115,931.3 2116,931.1 2117,929.9 2118,929.5 2119,926.9 2120,916.1 2121,905.1 2122,902.4 2123,901.4 2124,900.8 2125,900.3 2126,900.1 2127,899.9 2128,898.4 2129,898.9 2130,897.8 2131,896.6 2132,894.9 2133,894.0 2134,892.5 2135,892.0 2136,890.9 2137,890.3 2138,889.1 2139,888.3 2140,888.6 2141,888.1 2142,887.1 2143,885.9 2144,887.0 2145,886.4 2146,886.1 2147,887.2 2148,887.3 2149,888.4 2150,889.0 2151,890.4 2152,891.4 2153,891.8 2154,891.9 2155,892.6 2156,893.7 2157,894.1 2158,893.1 2159,893.5 2160,894.0 2161,893.7 2162,893.0 2163,893.0 2164,891.7 2165,891.4 2166,889.8 2167,887.9 2168,886.3 2169,884.8 2170,883.3 2171,881.9 2172,881.1 2173,880.2 2174,879.0 2175,877.8 2176,876.8 2177,876.0 2178,874.9 2179,874.5 2180,873.7 2181,873.3 2182,873.5 2183,873.5 2184,874.1 2185,873.4 2186,872.2 2187,871.7 2188,872.7 2189,873.0 2190,872.6 2191,873.1 2192,872.6 2193,873.2 2194,872.7 2195,872.2 2196,872.2 2197,871.3 2198,870.9 2199,871.6 2200,871.3 2201,870.4 2202,869.9 2203,869.6 2204,868.9 2205,868.8 2206,869.1 2207,868.8 2208,868.5 2209,865.3 2210,861.9 2211,858.1 2212,858.6 2213,866.8 2213.4,866.4" fill="none" stroke="#3b5ff5" stroke-width="2.4" stroke-linejoin="round" stroke-linecap="round"/>
<polyline points="214,1044.0 819.9,1043.0 820,1043.0 896.9,1043.0 897,1043.0 898.9,1039.2 899,1039.0 964.9,1039.0 965,1039.0 966.9,1040.0 967,1040.0 1003.9,1039.0 1004,1039.0 1026.9,1038.5 1027,1038.5 1061.9,1037.8 1062,1037.8 1064.9,1037.8 1065,1037.8 1100.9,1037.0 1101,1037.0 1102.9,1037.0 1103,1037.0 1135.9,1037.0 1136,1037.0 1143.9,1037.0 1144,1037.0 1152.9,1037.0 1153,1037.0 1166.9,1037.0 1167,1037.0 1169.9,1037.0 1170,1037.0 1199.9,1039.0 1200,1039.0 1367.9,1039.0 1368,1039.0 1499.9,1039.0 1500,1039.0 1699.9,1038.5 1700,1038.5 1759.9,1038.3 1760,1038.3 1779.9,1038.3 1780,1038.3 1869.9,1038.0 1870,1038.0 1879.9,1038.0 1880,1038.0 1889.9,1037.6 1890,1037.6 1894.9,1037.4 1895,1037.4 1899.9,1037.0 1900,1037.0 1905,1035.4 1906,1035.1 1907,1033.9 1908,1032.6 1909,1030.9 1910,1029.9 1911,1028.3 1912,1026.2 1913,1025.1 1914,1026.0 1915,1025.3 1916,1025.5 1917,1025.8 1918,1026.5 1919,1027.3 1920,1027.3 1921,1026.8 1922,1026.8 1923,1026.9 1924,1026.7 1925,1026.4 1926,1025.6 1927,1026.4 1928,1025.4 1929,1024.3 1930,1024.5 1931,1024.3 1932,1024.3 1933,1024.1 1934,1024.4 1935,1024.6 1936,1023.8 1937,1023.8 1938,1022.8 1939,1021.6 1940,1021.9 1941,1021.3 1942,1020.1 1943,1019.9 1944,1019.4 1945,1019.5 1946,1019.3 1947,1018.8 1948,1018.4 1949,1018.7 1950,1018.1 1951,1018.1 1952,1017.5 1953,1017.6 1954,1018.3 1955,1018.3 1956,1018.5 1957,1018.4 1958,1017.6 1959,1017.2 1960,1017.0 1961,1016.9 1962,1016.4 1963,1016.4 1964,1015.9 1965,1015.8 1966,1015.7 1967,1015.1 1968,1015.5 1969,1015.4 1970,1015.3 1971,1015.2 1972,1014.1 1973,1013.5 1974,1013.2 1975,1013.8 1976,1013.5 1977,1013.8 1978,1013.3 1979,1013.0 1980,1012.9 1981,1013.5 1982,1012.9 1983,1013.0 1984,1013.4 1985,1013.5 1986,1013.6 1987,1014.0 1988,1014.2 1989,1013.7 1990,1014.1 1991,1013.7 1992,1013.6 1993,1014.3 1994,1015.4 1995,1015.9 1996,1015.8 1997,1015.2 1998,1014.7 1999,1015.3 2000,1015.3 2001,1012.5 2002,1011.2 2003,1009.7 2004,1009.7 2005,1009.3 2006,1007.7 2007,1007.0 2008,1006.5 2009,1006.1 2010,1006.4 2011,1005.6 2012,1005.2 2013,1004.8 2014,1004.4 2015,1003.8 2016,1003.2 2017,1002.0 2018,1002.3 2019,1002.3 2020,1002.4 2021,1002.0 2022,1002.1 2023,1001.7 2024,1001.3 2025,1001.5 2026,1001.8 2027,1002.1 2028,1001.9 2029,1001.5 2030,1001.9 2031,1002.1 2032,1001.4 2033,1000.6 2034,1000.5 2035,1000.3 2036,999.6 2037,1000.4 2038,999.0 2039,998.4 2040,998.3 2041,998.5 2042,997.3 2043,996.8 2044,997.2 2045,997.4 2046,996.8 2047,996.4 2048,995.5 2049,995.3 2050,994.4 2051,993.2 2052,992.3 2053,992.2 2054,991.4 2055,991.8 2056,991.9 2057,991.8 2058,991.4 2059,991.3 2060,990.7 2061,990.3 2062,989.8 2063,989.3 2064,988.1 2065,987.1 2066,986.0 2067,985.8 2068,985.4 2069,984.4 2070,983.6 2071,982.9 2072,983.0 2073,982.5 2074,982.0 2075,981.3 2076,980.9 2077,981.3 2078,980.5 2079,979.5 2080,979.1 2081,978.2 2082,976.4 2083,975.7 2084,973.9 2085,972.9 2086,970.6 2087,969.1 2088,968.6 2089,967.2 2090,965.8 2091,965.1 2092,965.0 2093,964.7 2094,964.4 2095,965.1 2096,965.6 2097,965.5 2098,964.7 2099,964.3 2100,964.0 2101,964.0 2102,964.4 2103,962.9 2104,961.8 2105,960.5 2106,959.4 2107,958.0 2108,957.0 2109,957.3 2110,956.8 2111,956.4 2112,956.2 2113,955.4 2114,956.1 2115,955.2 2116,954.8 2117,954.3 2118,954.8 2119,954.4 2120,943.9 2121,934.4 2122,931.1 2123,930.5 2124,930.3 2125,930.2 2126,929.7 2127,929.5 2128,929.3 2129,929.5 2130,929.6 2131,929.8 2132,929.4 2133,929.5 2134,929.1 2135,929.4 2136,929.2 2137,928.7 2138,929.0 2139,928.0 2140,927.3 2141,926.8 2142,926.7 2143,926.2 2144,926.1 2145,925.7 2146,926.4 2147,926.6 2148,928.1 2149,928.9 2150,928.7 2151,929.6 2152,930.0 2153,930.7 2154,930.5 2155,931.3 2156,931.7 2157,931.3 2158,930.7 2159,930.4 2160,930.4 2161,931.4 2162,931.9 2163,932.2 2164,931.7 2165,931.2 2166,931.1 2167,930.7 2168,930.1 2169,929.2 2170,928.8 2171,928.0 2172,927.3 2173,926.4 2174,925.5 2175,924.6 2176,924.5 2177,923.8 2178,923.6 2179,922.7 2180,922.3 2181,921.2 2182,920.8 2183,920.6 2184,920.1 2185,919.9 2186,919.4 2187,919.3 2188,918.9 2189,918.9 2190,918.7 2191,918.2 2192,918.0 2193,918.0 2194,917.4 2195,917.5 2196,918.1 2197,917.9 2198,918.0 2199,918.2 2200,917.6 2201,918.1 2202,919.0 2203,918.2 2204,918.9 2205,918.2 2206,917.5 2207,914.7 2208,913.3 2209,911.4 2210,908.9 2211,906.8 2212,907.7 2213,916.1 2213.4,916.4" fill="none" stroke="#6ec8ea" stroke-width="2.6" stroke-linejoin="round" stroke-linecap="round"/>
<polyline points="1780,1042.8 1869.9,1040.3 1870,1040.3 1879.9,1040.0 1880,1040.0 1889.9,1039.4 1890,1039.4 1894.9,1038.5 1895,1038.5 1899.9,1037.0 1900,1037.0 1905,1035.4 1906,1035.1 1907,1034.7 1908,1034.1 1909,1034.3 1910,1033.5 1911,1031.9 1912,1031.5 1913,1030.1 1914,1030.6 1915,1030.8 1916,1030.6 1917,1030.5 1918,1030.3 1919,1029.3 1920,1029.1 1921,1029.3 1922,1028.5 1923,1027.9 1924,1028.6 1925,1029.0 1926,1028.2 1927,1028.5 1928,1028.5 1929,1029.0 1930,1028.8 1931,1028.7 1932,1028.3 1933,1028.4 1934,1028.3 1935,1028.0 1936,1027.9 1937,1027.5 1938,1027.9 1939,1027.4 1940,1026.8 1941,1026.5 1942,1027.2 1943,1027.0 1944,1027.5 1945,1027.9 1946,1027.4 1947,1027.6 1948,1027.6 1949,1027.3 1950,1026.7 1951,1026.4 1952,1025.6 1953,1025.3 1954,1024.9 1955,1025.0 1956,1025.0 1957,1024.5 1958,1024.8 1959,1025.2 1960,1024.9 1961,1024.2 1962,1024.2 1963,1022.8 1964,1022.8 1965,1023.5 1966,1024.8 1967,1024.6 1968,1025.5 1969,1026.7 1970,1027.5 1971,1025.5 1972,1025.5 1973,1025.0 1974,1024.8 1975,1024.1 1976,1023.2 1977,1022.5 1978,1022.8 1979,1022.6 1980,1022.1 1981,1022.2 1982,1022.6 1983,1022.8 1984,1022.6 1985,1022.2 1986,1021.9 1987,1021.7 1988,1021.6 1989,1020.9 1990,1020.5 1991,1021.2 1992,1020.9 1993,1020.6 1994,1020.9 1995,1021.9 1996,1022.8 1997,1022.6 1998,1022.2 1999,1022.2 2000,1021.9 2001,1019.6 2002,1017.8 2003,1015.6 2004,1015.1 2005,1015.0 2006,1014.9 2007,1014.4 2008,1014.0 2009,1013.4 2010,1013.1 2011,1013.4 2012,1013.2 2013,1011.6 2014,1012.1 2015,1012.1 2016,1011.7 2017,1011.8 2018,1010.8 2019,1010.6 2020,1011.8 2021,1013.4 2022,1014.8 2023,1014.6 2024,1014.8 2025,1015.4 2026,1014.9 2027,1016.0 2028,1015.6 2029,1015.6 2030,1014.8 2031,1014.9 2032,1014.7 2033,1015.1 2034,1014.3 2035,1014.2 2036,1015.0 2037,1014.1 2038,1014.1 2039,1014.2 2040,1013.7 2041,1013.4 2042,1013.9 2043,1014.2 2044,1014.1 2045,1013.8 2046,1012.9 2047,1012.7 2048,1013.3 2049,1013.4 2050,1012.3 2051,1011.0 2052,1010.5 2053,1010.5 2054,1010.1 2055,1009.8 2056,1009.7 2057,1009.8 2058,1009.4 2059,1009.6 2060,1008.3 2061,1008.1 2062,1007.9 2063,1006.7 2064,1006.9 2065,1005.7 2066,1004.6 2067,1006.0 2068,1006.6 2069,1006.6 2070,1007.0 2071,1007.3 2072,1006.4 2073,1006.5 2074,1006.9 2075,1006.6 2076,1006.3 2077,1005.9 2078,1006.1 2079,1005.6 2080,1005.2 2081,1004.5 2082,1004.0 2083,1004.2 2084,1004.4 2085,1004.2 2086,1003.7 2087,1004.0 2088,1004.2 2089,1004.8 2090,1003.4 2091,1001.4 2092,999.9 2093,1000.4 2094,1000.1 2095,999.9 2096,999.3 2097,999.0 2098,999.4 2099,999.7 2100,1000.0 2101,999.0 2102,999.3 2103,998.6 2104,998.8 2105,997.5 2106,997.5 2107,995.4 2108,991.8 2109,991.7 2110,992.3 2111,991.8 2112,992.6 2113,992.1 2114,992.8 2115,992.2 2116,991.4 2117,991.6 2118,991.1 2119,990.9 2120,984.8 2121,979.2 2122,973.9 2123,970.5 2124,971.1 2125,970.3 2126,971.2 2127,971.4 2128,972.6 2129,972.7 2130,972.7 2131,972.9 2132,973.4 2133,974.0 2134,974.1 2135,974.1 2136,974.4 2137,974.9 2138,974.0 2139,973.5 2140,973.4 2141,974.4 2142,975.1 2143,975.4 2144,975.6 2145,974.9 2146,975.4 2147,975.1 2148,974.8 2149,976.2 2150,975.8 2151,976.9 2152,977.4 2153,977.3 2154,977.8 2155,977.8 2156,978.3 2157,978.5 2158,978.4 2159,980.3 2160,979.3 2161,979.1 2162,978.3 2163,977.9 2164,976.5 2165,975.3 2166,973.0 2167,973.2 2168,972.9 2169,971.8 2170,971.7 2171,971.6 2172,972.6 2173,972.0 2174,971.8 2175,971.4 2176,971.1 2177,970.3 2178,969.4 2179,969.1 2180,969.0 2181,967.8 2182,966.8 2183,966.4 2184,967.0 2185,966.4 2186,965.1 2187,965.2 2188,965.2 2189,965.8 2190,965.3 2191,965.8 2192,964.8 2193,964.7 2194,964.2 2195,963.0 2196,962.4 2197,962.7 2198,962.7 2199,961.9 2200,962.0 2201,961.9 2202,961.7 2203,961.2 2204,960.7 2205,959.7 2206,959.2 2207,958.7 2208,957.9 2209,957.4 2210,953.7 2211,949.3 2212,948.9 2213,956.0 2213.4,955.8" fill="none" stroke="#7b2fdc" stroke-width="2.4" stroke-linejoin="round" stroke-linecap="round"/>
<polyline points="1890,1040.0 1894.9,1038.5 1895,1038.5 1899.9,1037.0 1900,1037.0 1905,1035.4 1906,1035.1 1907,1034.7 1908,1034.1 1909,1034.3 1910,1034.3 1911,1033.6 1912,1033.6 1913,1033.0 1914,1032.4 1915,1032.8 1916,1032.3 1917,1032.6 1918,1032.6 1919,1032.8 1920,1032.8 1921,1033.1 1922,1033.0 1923,1032.9 1924,1032.8 1925,1033.0 1926,1032.6 1927,1032.7 1928,1033.0 1929,1032.7 1930,1032.6 1931,1032.1 1932,1031.8 1933,1031.7 1934,1031.5 1935,1031.0 1936,1030.9 1937,1030.9 1938,1030.9 1939,1031.0 1940,1030.3 1941,1030.7 1942,1030.5 1943,1030.2 1944,1030.0 1945,1030.1 1946,1030.3 1947,1030.0 1948,1030.0 1949,1029.3 1950,1029.4 1951,1029.3 1952,1029.1 1953,1029.4 1954,1029.9 1955,1030.0 1956,1029.6 1957,1029.9 1958,1029.6 1959,1029.4 1960,1029.0 1961,1029.0 1962,1029.1 1963,1029.0 1964,1028.8 1965,1028.7 1966,1028.4 1967,1028.7 1968,1028.5 1969,1028.3 1970,1028.2 1971,1027.9 1972,1027.9 1973,1027.4 1974,1027.6 1975,1027.8 1976,1027.7 1977,1028.2 1978,1027.9 1979,1028.0 1980,1028.1 1981,1027.9 1982,1027.8 1983,1028.0 1984,1028.0 1985,1028.0 1986,1028.3 1987,1028.3 1988,1027.6 1989,1027.3 1990,1027.6 1991,1027.5 1992,1027.1 1993,1026.4 1994,1026.6 1995,1027.2 1996,1026.8 1997,1026.1 1998,1026.4 1999,1026.3 2000,1026.3 2001,1025.3 2002,1024.2 2003,1023.7 2004,1024.0 2005,1024.1 2006,1023.9 2007,1024.2 2008,1024.1 2009,1024.2 2010,1023.8 2011,1023.9 2012,1024.1 2013,1024.4 2014,1024.2 2015,1024.2 2016,1023.8 2017,1024.0 2018,1024.1 2019,1024.2 2020,1023.9 2021,1023.3 2022,1023.2 2023,1023.0 2024,1022.7 2025,1022.8 2026,1023.1 2027,1023.1 2028,1023.3 2029,1023.2 2030,1022.7 2031,1022.4 2032,1022.2 2033,1022.4 2034,1022.6 2035,1022.5 2036,1022.7 2037,1022.2 2038,1022.1 2039,1022.5 2040,1022.4 2041,1022.6 2042,1021.7 2043,1021.0 2044,1020.7 2045,1021.0 2046,1021.5 2047,1021.1 2048,1020.7 2049,1020.2 2050,1019.9 2051,1020.1 2052,1020.0 2053,1020.5 2054,1020.6 2055,1020.2 2056,1020.2 2057,1020.0 2058,1020.1 2059,1020.3 2060,1019.9 2061,1020.1 2062,1020.1 2063,1019.8 2064,1019.7 2065,1019.7 2066,1019.4 2067,1019.2 2068,1019.6 2069,1019.6 2070,1019.4 2071,1019.6 2072,1019.1 2073,1019.2 2074,1018.8 2075,1018.8 2076,1018.4 2077,1018.4 2078,1018.9 2079,1019.0 2080,1018.8 2081,1019.6 2082,1019.5 2083,1020.1 2084,1019.9 2085,1019.5 2086,1020.3 2087,1020.2 2088,1020.5 2089,1020.9 2090,1019.4 2091,1017.9 2092,1016.2 2093,1016.0 2094,1015.8 2095,1015.2 2096,1015.1 2097,1015.2 2098,1014.9 2099,1014.9 2100,1014.6 2101,1014.4 2102,1014.3 2103,1014.2 2104,1014.4 2105,1014.4 2106,1014.4 2107,1013.1 2108,1009.9 2109,1009.1 2110,1009.1 2111,1009.3 2112,1009.0 2113,1008.5 2114,1008.1 2115,1008.1 2116,1007.8 2117,1007.0 2118,1006.7 2119,1005.2 2120,1000.7 2121,995.8 2122,994.3 2123,995.0 2124,995.5 2125,995.0 2126,994.8 2127,994.9 2128,994.9 2129,994.7 2130,995.3 2131,994.9 2132,995.4 2133,995.8 2134,995.9 2135,995.8 2136,996.0 2137,996.3 2138,995.7 2139,995.6 2140,996.1 2141,996.3 2142,996.4 2143,996.3 2144,996.3 2145,996.3 2146,997.5 2147,997.2 2148,997.9 2149,998.2 2150,998.3 2151,998.4 2152,998.4 2153,999.0 2154,999.2 2155,999.2 2156,998.9 2157,998.7 2158,998.1 2159,997.8 2160,997.4 2161,997.4 2162,997.4 2163,996.6 2164,996.4 2165,996.6 2166,996.0 2167,995.5 2168,995.7 2169,995.5 2170,995.2 2171,994.7 2172,994.7 2173,994.4 2174,994.4 2175,994.4 2176,994.4 2177,994.1 2178,993.8 2179,993.7 2180,993.5 2181,993.4 2182,993.0 2183,992.8 2184,992.5 2185,992.2 2186,992.2 2187,992.5 2188,992.1 2189,992.2 2190,992.1 2191,991.9 2192,991.9 2193,991.5 2194,991.5 2195,991.4 2196,990.1 2197,990.1 2198,990.2 2199,990.7 2200,990.2 2201,990.0 2202,990.0 2203,989.5 2204,989.7 2205,989.7 2206,989.2 2207,988.6 2208,988.4 2209,989.0 2210,985.6 2211,979.6 2212,978.4 2213,988.4 2213.4,988.4" fill="none" stroke="#b3c3de" stroke-width="2.4" stroke-linejoin="round" stroke-linecap="round"/>
<polyline points="1368,1043.2 1499.9,1043.1 1500,1043.1 1699.9,1043.0 1700,1043.0 1759.9,1042.8 1760,1042.8 1779.9,1042.8 1780,1042.8 1869.9,1042.5 1870,1042.5 1879.9,1042.5 1880,1042.5 1889.9,1041.9 1890,1041.9 1894.9,1041.6 1895,1041.6 1899.9,1041.3 1900,1041.3 1905,1041.0 1906,1040.8 1907,1040.6 1908,1040.5 1909,1040.3 1910,1039.3 1911,1038.3 1912,1036.6 1913,1036.3 1914,1037.5 1915,1037.2 1916,1037.0 1917,1037.3 1918,1037.5 1919,1036.8 1920,1036.6 1921,1036.2 1922,1037.2 1923,1036.7 1924,1037.0 1925,1037.8 1926,1038.4 1927,1038.7 1928,1039.0 1929,1037.8 1930,1037.2 1931,1036.6 1932,1036.2 1933,1037.3 1934,1036.0 1935,1036.1 1936,1035.2 1937,1035.7 1938,1036.2 1939,1035.6 1940,1036.4 1941,1036.0 1942,1036.3 1943,1036.0 1944,1035.4 1945,1034.9 1946,1034.7 1947,1034.9 1948,1034.8 1949,1035.9 1950,1035.5 1951,1035.0 1952,1034.5 1953,1034.1 1954,1033.3 1955,1032.9 1956,1033.6 1957,1033.7 1958,1033.6 1959,1033.8 1960,1034.4 1961,1034.6 1962,1034.9 1963,1034.5 1964,1034.6 1965,1034.5 1966,1034.8 1967,1034.7 1968,1034.9 1969,1035.2 1970,1035.4 1971,1034.9 1972,1034.3 1973,1034.7 1974,1034.1 1975,1033.2 1976,1033.0 1977,1032.1 1978,1031.3 1979,1031.1 1980,1030.3 1981,1029.1 1982,1029.9 1983,1030.9 1984,1030.4 1985,1030.4 1986,1031.2 1987,1030.6 1988,1030.7 1989,1030.6 1990,1031.0 1991,1030.5 1992,1031.5 1993,1031.9 1994,1032.5 1995,1032.7 1996,1031.9 1997,1032.3 1998,1032.1 1999,1032.6 2000,1032.6 2001,1032.6 2002,1032.5 2003,1033.0 2004,1033.4 2005,1032.7 2006,1032.7 2007,1033.3 2008,1033.4 2009,1032.8 2010,1032.6 2011,1032.2 2012,1032.5 2013,1032.3 2014,1032.3 2015,1033.4 2016,1032.6 2017,1032.1 2018,1031.3 2019,1030.7 2020,1031.4 2021,1031.7 2022,1032.7 2023,1031.7 2024,1031.4 2025,1032.3 2026,1032.9 2027,1033.4 2028,1033.7 2029,1033.6 2030,1033.5 2031,1033.5 2032,1033.8 2033,1033.7 2034,1033.8 2035,1034.4 2036,1033.7 2037,1033.3 2038,1033.6 2039,1033.4 2040,1033.4 2041,1034.4 2042,1034.4 2043,1033.9 2044,1034.2 2045,1035.1 2046,1034.1 2047,1033.4 2048,1033.3 2049,1032.7 2050,1033.6 2051,1033.5 2052,1033.0 2053,1033.0 2054,1032.3 2055,1031.8 2056,1031.7 2057,1032.7 2058,1031.3 2059,1031.3 2060,1031.9 2061,1032.0 2062,1032.6 2063,1032.4 2064,1032.1 2065,1031.7 2066,1030.9 2067,1031.5 2068,1030.6 2069,1030.3 2070,1030.0 2071,1029.6 2072,1028.5 2073,1028.5 2074,1028.7 2075,1028.9 2076,1029.4 2077,1029.4 2078,1029.1 2079,1029.3 2080,1029.6 2081,1029.2 2082,1028.5 2083,1028.1 2084,1028.8 2085,1029.4 2086,1028.9 2087,1029.0 2088,1029.5 2089,1030.1 2090,1029.6 2091,1029.5 2092,1030.1 2093,1031.2 2094,1031.6 2095,1030.7 2096,1030.7 2097,1030.1 2098,1029.7 2099,1029.0 2100,1028.5 2101,1028.2 2102,1028.9 2103,1028.8 2104,1028.6 2105,1028.2 2106,1027.5 2107,1027.0 2108,1027.4 2109,1027.4 2110,1028.0 2111,1027.6 2112,1027.1 2113,1025.8 2114,1025.7 2115,1024.5 2116,1025.1 2117,1024.1 2118,1020.1 2119,1015.5 2120,1013.0 2121,1012.8 2122,1013.6 2123,1013.9 2124,1013.4 2125,1012.7 2126,1013.0 2127,1013.1 2128,1012.9 2129,1013.6 2130,1013.8 2131,1014.2 2132,1014.2 2133,1014.2 2134,1014.3 2135,1013.9 2136,1014.6 2137,1015.2 2138,1014.6 2139,1015.1 2140,1016.0 2141,1016.4 2142,1017.2 2143,1017.2 2144,1017.3 2145,1016.8 2146,1016.8 2147,1016.5 2148,1016.7 2149,1017.5 2150,1018.3 2151,1019.5 2152,1020.0 2153,1019.9 2154,1020.6 2155,1021.0 2156,1022.3 2157,1023.6 2158,1024.1 2159,1023.1 2160,1022.5 2161,1022.4 2162,1021.8 2163,1021.9 2164,1022.0 2165,1022.2 2166,1022.0 2167,1021.2 2168,1020.6 2169,1020.4 2170,1020.9 2171,1021.4 2172,1021.6 2173,1021.4 2174,1021.3 2175,1021.3 2176,1021.5 2177,1021.5 2178,1020.2 2179,1020.4 2180,1020.2 2181,1019.5 2182,1019.5 2183,1019.3 2184,1018.9 2185,1017.7 2186,1017.6 2187,1017.7 2188,1017.4 2189,1016.4 2190,1016.6 2191,1016.8 2192,1016.7 2193,1016.7 2194,1016.2 2195,1015.7 2196,1015.8 2197,1015.4 2198,1015.4 2199,1016.8 2200,1016.7 2201,1016.5 2202,1015.6 2203,1015.6 2204,1016.0 2205,1015.7 2206,1015.6 2207,1014.6 2208,1015.1 2209,1015.0 2210,1015.6 2211,1016.4 2212,1016.4 2213,1016.9 2213.4,1016.9" fill="none" stroke="#e9552a" stroke-width="2.4" stroke-linejoin="round" stroke-linecap="round"/>
<polyline points="1895,1043.5 1899.9,1042.7 1900,1042.7 1905,1041.8 1906,1041.7 1907,1041.5 1908,1041.3 1909,1041.2 1910,1041.0 1911,1040.8 1912,1040.7 1913,1040.5 1914,1040.5 1915,1040.5 1916,1040.5 1917,1040.5 1918,1040.5 1919,1040.5 1920,1040.5 1921,1040.5 1922,1040.5 1923,1040.5 1924,1040.5 1925,1040.5 1926,1040.5 1927,1040.4 1928,1040.4 1929,1040.4 1930,1040.4 1931,1040.4 1932,1040.4 1933,1040.4 1934,1040.4 1935,1040.4 1936,1040.4 1937,1040.4 1938,1040.4 1939,1040.4 1940,1040.4 1941,1040.4 1942,1040.4 1943,1040.4 1944,1040.4 1945,1040.4 1946,1040.4 1947,1040.4 1948,1040.4 1949,1040.4 1950,1040.4 1951,1040.4 1952,1040.4 1953,1040.4 1954,1040.4 1955,1040.3 1956,1040.3 1957,1040.3 1958,1040.3 1959,1040.3 1960,1040.3 1961,1040.3 1962,1040.3 1963,1040.3 1964,1040.3 1965,1040.3 1966,1040.3 1967,1040.3 1968,1040.3 1969,1040.3 1970,1040.3 1971,1040.3 1972,1040.3 1973,1040.3 1974,1040.3 1975,1040.3 1976,1040.3 1977,1040.3 1978,1040.3 1979,1040.3 1980,1040.3 1981,1040.3 1982,1040.2 1983,1040.2 1984,1040.2 1985,1040.2 1986,1040.2 1987,1040.2 1988,1040.2 1989,1040.2 1990,1040.2 1991,1040.2 1992,1040.2 1993,1040.2 1994,1040.2 1995,1040.2 1996,1040.2 1997,1040.2 1998,1040.2 1999,1040.2 2000,1040.2 2001,1040.2 2002,1040.2 2003,1040.2 2004,1040.2 2005,1040.2 2006,1040.2 2007,1040.2 2008,1040.2 2009,1040.1 2010,1040.1 2011,1040.1 2012,1040.1 2013,1040.1 2014,1040.1 2015,1040.1 2016,1040.1 2017,1040.1 2018,1040.1 2019,1040.1 2020,1040.1 2021,1040.1 2022,1040.1 2023,1040.1 2024,1040.1 2025,1040.1 2026,1040.1 2027,1040.1 2028,1040.1 2029,1040.1 2030,1040.1 2031,1040.1 2032,1040.1 2033,1040.1 2034,1040.1 2035,1040.1 2036,1040.1 2037,1040.0 2038,1040.0 2039,1040.0 2040,1040.0 2041,1040.0 2042,1040.0 2043,1040.0 2044,1040.0 2045,1040.0 2046,1040.0 2047,1040.0 2048,1040.0 2049,1040.0 2050,1040.0 2051,1039.9 2052,1039.7 2053,1039.6 2054,1039.5 2055,1039.4 2056,1039.2 2057,1039.1 2058,1039.0 2059,1038.8 2060,1038.7 2061,1038.6 2062,1038.5 2063,1038.3 2064,1038.2 2065,1038.1 2066,1038.0 2067,1037.8 2068,1037.7 2069,1037.6 2070,1037.4 2071,1037.3 2072,1037.2 2073,1037.1 2074,1036.9 2075,1036.8 2076,1036.8 2077,1036.8 2078,1036.8 2079,1036.9 2080,1036.9 2081,1036.9 2082,1036.9 2083,1036.9 2084,1036.9 2085,1037.0 2086,1037.0 2087,1037.0 2088,1037.0 2089,1037.0 2090,1037.0 2091,1037.1 2092,1037.1 2093,1037.1 2094,1037.1 2095,1037.1 2096,1037.1 2097,1037.2 2098,1037.2 2099,1037.2 2100,1037.2 2101,1037.2 2102,1037.2 2103,1037.2 2104,1037.3 2105,1037.3 2106,1037.3 2107,1037.3 2108,1037.3 2109,1037.3 2110,1037.4 2111,1037.4 2112,1037.4 2113,1037.4 2114,1037.4 2115,1037.4 2116,1037.5 2117,1037.5 2118,1037.5 2119,1037.5 2120,1032.8 2121,1028.0 2122,1028.2 2123,1028.3 2124,1028.5 2125,1028.7 2126,1028.8 2127,1029.0 2128,1029.2 2129,1029.3 2130,1029.5 2131,1029.7 2132,1029.8 2133,1030.0 2134,1030.2 2135,1030.3 2136,1030.5 2137,1030.7 2138,1030.8 2139,1031.0 2140,1031.2 2141,1031.4 2142,1031.5 2143,1031.7 2144,1031.9 2145,1032.0 2146,1032.2 2147,1032.4 2148,1032.5 2149,1032.7 2150,1032.9 2151,1033.0 2152,1033.2 2153,1033.4 2154,1033.5 2155,1033.7 2156,1033.7 2157,1033.7 2158,1033.6 2159,1033.6 2160,1033.6 2161,1033.6 2162,1033.6 2163,1033.5 2164,1033.5 2165,1033.5 2166,1033.5 2167,1033.5 2168,1033.4 2169,1033.4 2170,1033.4 2171,1033.4 2172,1033.3 2173,1033.3 2174,1033.3 2175,1033.3 2176,1033.3 2177,1033.2 2178,1033.2 2179,1033.2 2180,1033.2 2181,1033.2 2182,1033.1 2183,1033.1 2184,1033.1 2185,1033.1 2186,1033.1 2187,1033.0 2188,1033.0 2189,1033.0 2190,1033.0 2191,1033.0 2192,1032.9 2193,1032.9 2194,1032.9 2195,1032.9 2196,1032.9 2197,1032.8 2198,1032.8 2199,1032.8 2200,1032.8 2201,1032.7 2202,1032.7 2203,1032.7 2204,1032.7 2205,1032.7 2206,1032.6 2207,1032.6 2208,1032.6 2209,1032.6 2210,1032.6 2211,1032.5 2212,1032.5 2213,1032.5 2213.4,1032.5" fill="none" stroke="#f7d84a" stroke-width="2.4" stroke-linejoin="round" stroke-linecap="round"/>
<polyline points="1760,1044.0 1779.9,1043.9 1780,1043.9 1869.9,1043.7 1870,1043.7 1879.9,1043.7 1880,1043.7 1889.9,1043.6 1890,1043.6 1894.9,1043.6 1895,1043.6 1899.9,1043.6 1900,1043.6 1905,1043.6 1906,1043.4 1907,1043.2 1908,1043.0 1909,1042.8 1910,1042.6 1911,1042.4 1912,1042.2 1913,1042.0 1914,1042.0 1915,1042.0 1916,1042.0 1917,1042.0 1918,1042.0 1919,1042.0 1920,1042.0 1921,1042.0 1922,1042.0 1923,1042.0 1924,1042.0 1925,1042.0 1926,1042.0 1927,1041.9 1928,1041.9 1929,1041.9 1930,1041.9 1931,1041.9 1932,1041.9 1933,1041.9 1934,1041.9 1935,1041.9 1936,1041.9 1937,1041.9 1938,1041.9 1939,1041.9 1940,1041.9 1941,1041.9 1942,1041.9 1943,1041.9 1944,1041.9 1945,1041.9 1946,1041.9 1947,1041.9 1948,1041.9 1949,1041.9 1950,1041.9 1951,1041.9 1952,1041.9 1953,1041.9 1954,1041.9 1955,1041.8 1956,1041.8 1957,1041.8 1958,1041.8 1959,1041.8 1960,1041.8 1961,1041.8 1962,1041.8 1963,1041.8 1964,1041.8 1965,1041.8 1966,1041.8 1967,1041.8 1968,1041.8 1969,1041.8 1970,1041.8 1971,1041.8 1972,1041.8 1973,1041.8 1974,1041.8 1975,1041.8 1976,1041.8 1977,1041.8 1978,1041.8 1979,1041.8 1980,1041.8 1981,1041.8 1982,1041.7 1983,1041.7 1984,1041.7 1985,1041.7 1986,1041.7 1987,1041.7 1988,1041.7 1989,1041.7 1990,1041.7 1991,1041.7 1992,1041.7 1993,1041.7 1994,1041.7 1995,1041.7 1996,1041.7 1997,1041.7 1998,1041.7 1999,1041.7 2000,1041.7 2001,1041.7 2002,1041.7 2003,1041.7 2004,1041.7 2005,1041.7 2006,1041.7 2007,1041.7 2008,1041.7 2009,1041.6 2010,1041.6 2011,1041.6 2012,1041.6 2013,1041.6 2014,1041.6 2015,1041.6 2016,1041.6 2017,1041.6 2018,1041.6 2019,1041.6 2020,1041.6 2021,1041.6 2022,1041.6 2023,1041.6 2024,1041.6 2025,1041.6 2026,1041.6 2027,1041.6 2028,1041.6 2029,1041.6 2030,1041.6 2031,1041.6 2032,1041.6 2033,1041.6 2034,1041.6 2035,1041.6 2036,1041.6 2037,1041.5 2038,1041.5 2039,1041.5 2040,1041.5 2041,1041.5 2042,1041.5 2043,1041.5 2044,1041.5 2045,1041.5 2046,1041.5 2047,1041.5 2048,1041.5 2049,1041.5 2050,1041.5 2051,1041.4 2052,1041.3 2053,1041.1 2054,1041.0 2055,1040.9 2056,1040.8 2057,1040.7 2058,1040.5 2059,1040.4 2060,1040.3 2061,1040.2 2062,1040.1 2063,1039.9 2064,1039.8 2065,1039.7 2066,1039.6 2067,1039.5 2068,1039.3 2069,1039.2 2070,1039.1 2071,1039.0 2072,1038.9 2073,1038.7 2074,1038.6 2075,1038.5 2076,1038.6 2077,1038.8 2078,1038.9 2079,1039.0 2080,1039.2 2081,1039.3 2082,1039.4 2083,1039.6 2084,1039.7 2085,1039.8 2086,1040.0 2087,1040.1 2088,1040.2 2089,1040.4 2090,1040.5 2091,1040.5 2092,1040.5 2093,1040.5 2094,1040.5 2095,1040.5 2096,1040.5 2097,1040.5 2098,1040.5 2099,1040.5 2100,1040.5 2101,1040.5 2102,1040.5 2103,1040.4 2104,1040.4 2105,1040.4 2106,1040.4 2107,1040.4 2108,1040.4 2109,1040.4 2110,1040.4 2111,1040.4 2112,1040.4 2113,1040.4 2114,1040.4 2115,1040.4 2116,1040.4 2117,1040.4 2118,1040.4 2119,1040.4 2120,1040.4 2121,1040.4 2122,1040.4 2123,1040.4 2124,1040.4 2125,1040.4 2126,1040.4 2127,1040.3 2128,1040.3 2129,1040.3 2130,1040.3 2131,1040.3 2132,1040.3 2133,1040.3 2134,1040.3 2135,1040.3 2136,1040.3 2137,1040.3 2138,1040.3 2139,1040.3 2140,1040.3 2141,1040.3 2142,1040.3 2143,1040.3 2144,1040.3 2145,1040.3 2146,1040.3 2147,1040.3 2148,1040.3 2149,1040.3 2150,1040.3 2151,1040.3 2152,1040.2 2153,1040.2 2154,1040.2 2155,1040.2 2156,1040.2 2157,1040.2 2158,1040.2 2159,1040.2 2160,1040.2 2161,1040.2 2162,1040.2 2163,1040.2 2164,1040.2 2165,1040.2 2166,1040.2 2167,1040.2 2168,1040.2 2169,1040.2 2170,1040.2 2171,1040.2 2172,1040.2 2173,1040.2 2174,1040.2 2175,1040.2 2176,1040.2 2177,1040.1 2178,1040.1 2179,1040.1 2180,1040.1 2181,1040.1 2182,1040.1 2183,1040.1 2184,1040.1 2185,1040.1 2186,1040.1 2187,1040.1 2188,1040.1 2189,1040.1 2190,1040.1 2191,1040.1 2192,1040.1 2193,1040.1 2194,1040.1 2195,1040.1 2196,1040.1 2197,1040.1 2198,1040.1 2199,1040.1 2200,1040.1 2201,1040.0 2202,1040.0 2203,1040.0 2204,1040.0 2205,1040.0 2206,1040.0 2207,1040.0 2208,1040.0 2209,1040.0 2210,1040.0 2211,1040.0 2212,1040.0 2213,1040.0 2213.4,1040.0" fill="none" stroke="#5580b0" stroke-width="2.4" stroke-linejoin="round" stroke-linecap="round"/>
<polyline points="1900,1045.0 1905,1045.0 1906,1045.0 1907,1045.0 1908,1045.0 1909,1045.0 1910,1045.0 1911,1045.0 1912,1044.9 1913,1044.9 1914,1044.9 1915,1044.9 1916,1044.9 1917,1044.9 1918,1044.9 1919,1044.9 1920,1044.9 1921,1044.9 1922,1044.9 1923,1044.9 1924,1044.9 1925,1044.9 1926,1044.9 1927,1044.9 1928,1044.9 1929,1044.9 1930,1044.9 1931,1044.9 1932,1044.9 1933,1044.8 1934,1044.8 1935,1044.8 1936,1044.8 1937,1044.8 1938,1044.8 1939,1044.8 1940,1044.8 1941,1044.8 1942,1044.8 1943,1044.8 1944,1044.8 1945,1044.8 1946,1044.8 1947,1044.8 1948,1044.8 1949,1044.8 1950,1044.8 1951,1044.8 1952,1044.8 1953,1044.8 1954,1044.8 1955,1044.8 1956,1044.7 1957,1044.7 1958,1044.7 1959,1044.7 1960,1044.7 1961,1044.7 1962,1044.7 1963,1044.7 1964,1044.7 1965,1044.7 1966,1044.7 1967,1044.7 1968,1044.7 1969,1044.7 1970,1044.7 1971,1044.7 1972,1044.7 1973,1044.7 1974,1044.7 1975,1044.7 1976,1044.7 1977,1044.7 1978,1044.6 1979,1044.6 1980,1044.6 1981,1044.6 1982,1044.6 1983,1044.6 1984,1044.6 1985,1044.6 1986,1044.6 1987,1044.6 1988,1044.6 1989,1044.6 1990,1044.6 1991,1044.6 1992,1044.6 1993,1044.6 1994,1044.6 1995,1044.6 1996,1044.6 1997,1044.6 1998,1044.6 1999,1044.5 2000,1044.5 2001,1044.5 2002,1044.5 2003,1044.5 2004,1044.5 2005,1044.5 2006,1044.5 2007,1044.5 2008,1044.5 2009,1044.5 2010,1044.5 2011,1043.8 2012,1043.0 2013,1043.0 2014,1043.0 2015,1043.0 2016,1043.0 2017,1043.0 2018,1043.0 2019,1043.0 2020,1043.0 2021,1043.0 2022,1043.0 2023,1043.0 2024,1043.0 2025,1043.0 2026,1043.0 2027,1043.0 2028,1043.0 2029,1043.0 2030,1043.0 2031,1043.0 2032,1043.0 2033,1042.9 2034,1042.9 2035,1042.9 2036,1042.9 2037,1042.9 2038,1042.9 2039,1042.9 2040,1042.9 2041,1042.9 2042,1042.9 2043,1042.9 2044,1042.9 2045,1042.9 2046,1042.9 2047,1042.9 2048,1042.9 2049,1042.9 2050,1042.9 2051,1042.9 2052,1042.9 2053,1042.9 2054,1042.9 2055,1042.9 2056,1042.9 2057,1042.9 2058,1042.9 2059,1042.9 2060,1042.9 2061,1042.9 2062,1042.9 2063,1042.9 2064,1042.9 2065,1042.9 2066,1042.9 2067,1042.9 2068,1042.9 2069,1042.9 2070,1042.9 2071,1042.9 2072,1042.9 2073,1042.8 2074,1042.8 2075,1042.8 2076,1042.8 2077,1042.8 2078,1042.8 2079,1042.8 2080,1042.8 2081,1042.8 2082,1042.8 2083,1042.8 2084,1042.8 2085,1042.8 2086,1042.8 2087,1042.8 2088,1042.8 2089,1042.8 2090,1042.8 2091,1042.8 2092,1042.8 2093,1042.8 2094,1042.8 2095,1042.8 2096,1042.8 2097,1042.8 2098,1042.8 2099,1042.8 2100,1042.8 2101,1042.8 2102,1042.8 2103,1042.8 2104,1042.8 2105,1042.8 2106,1042.8 2107,1042.8 2108,1042.8 2109,1042.8 2110,1042.8 2111,1042.8 2112,1042.8 2113,1042.7 2114,1042.7 2115,1042.7 2116,1042.7 2117,1042.7 2118,1042.7 2119,1042.7 2120,1042.7 2121,1042.7 2122,1042.7 2123,1042.7 2124,1042.7 2125,1042.7 2126,1042.7 2127,1042.7 2128,1042.7 2129,1042.7 2130,1042.7 2131,1042.7 2132,1042.7 2133,1042.7 2134,1042.7 2135,1042.7 2136,1042.7 2137,1042.7 2138,1042.7 2139,1042.7 2140,1042.7 2141,1042.7 2142,1042.7 2143,1042.7 2144,1042.7 2145,1042.7 2146,1042.7 2147,1042.7 2148,1042.7 2149,1042.7 2150,1042.7 2151,1042.7 2152,1042.7 2153,1042.6 2154,1042.6 2155,1042.6 2156,1042.6 2157,1042.6 2158,1042.6 2159,1042.6 2160,1042.6 2161,1042.6 2162,1042.6 2163,1042.6 2164,1042.6 2165,1042.6 2166,1042.6 2167,1042.6 2168,1042.6 2169,1042.6 2170,1042.6 2171,1042.6 2172,1042.6 2173,1042.6 2174,1042.6 2175,1042.6 2176,1042.6 2177,1042.6 2178,1042.6 2179,1042.6 2180,1042.6 2181,1042.6 2182,1042.6 2183,1042.6 2184,1042.6 2185,1042.6 2186,1042.6 2187,1042.6 2188,1042.6 2189,1042.6 2190,1042.6 2191,1042.6 2192,1042.6 2193,1042.5 2194,1042.5 2195,1042.5 2196,1042.5 2197,1042.5 2198,1042.5 2199,1042.5 2200,1042.5 2201,1042.5 2202,1042.5 2203,1042.5 2204,1042.5 2205,1042.5 2206,1042.5 2207,1042.5 2208,1042.5 2209,1042.5 2210,1042.5 2211,1042.5 2212,1042.5 2213,1042.5 2213.4,1042.5" fill="none" stroke="#1a10f0" stroke-width="2.4" stroke-linejoin="round" stroke-linecap="round"/>
<circle cx="1943.7" cy="1041" r="19" fill="#5580b0" fill-opacity="0.22"/>
<circle cx="1943.7" cy="1036" r="19" fill="#f7d84a" fill-opacity="0.22"/>
<circle cx="1943.7" cy="1024" r="19" fill="#e9552a" fill-opacity="0.22"/>
<circle cx="1943.7" cy="1016" r="19" fill="#7b2fdc" fill-opacity="0.22"/>
<circle cx="1943.7" cy="1010" r="19" fill="#6ec8ea" fill-opacity="0.22"/>
<circle cx="1943.7" cy="1007" r="19" fill="#3b5ff5" fill-opacity="0.22"/>
<circle cx="1943.7" cy="995" r="19" fill="#d4a43e" fill-opacity="0.22"/>
<circle cx="1943.7" cy="929.4" r="19" fill="#1d3f73" fill-opacity="0.22"/>
<rect x="1931.2" y="1028.5" width="25" height="18" fill="#d3bb52" stroke="#fff" stroke-width="2"/>
<path d="M1943.7 1032 L1955.7 1052.5 L1931.7 1052.5 Z" fill="#5580b0" stroke="#fff" stroke-width="2.2" stroke-linejoin="round"/>
<path d="M1943.7 1018 L1952.2 1027.5 L1935.2 1027.5 Z" fill="#e07a4a" stroke="#fff" stroke-width="1.8"/>
<rect x="1931.2" y="1012" width="25" height="4.5" fill="#a860c8" stroke="#f0d0e8" stroke-width="1.5"/>
<rect x="1931.2" y="1003.5" width="25" height="7.5" fill="#5b74f0" stroke="#e8f0ff" stroke-width="2"/>
<path d="M1943.7 1004 L1948.2 1011 L1939.2 1011 Z" fill="#b8d4f4" stroke="#fff" stroke-width="1"/>
<path d="M1943.7 982 L1956.3 994.5 L1943.7 1007 L1931.1000000000001 994.5 Z" fill="#d4a43e" stroke="#fff" stroke-width="2.2"/>
<circle cx="1943.7" cy="929.4" r="11.5" fill="#1d3f73" stroke="#fff" stroke-width="2.5"/>
<line x1="196" y1="1045" x2="2233" y2="1045" stroke="#d6deee" stroke-width="3"/>
</svg>
<svg class="a" style="left:949px;top:668px" width="102" height="102" viewBox="949 668 102 102"><g fill="none" stroke="#cbcbcb"><circle cx="999.6" cy="718.3" r="43.4" stroke-width="5.8"/><line x1="999.5" y1="675" x2="999.5" y2="762" stroke-width="4.6"/><line x1="957" y1="718.6" x2="1042" y2="718.6" stroke-width="4.6"/><path d="M999.6 675 Q976 690 976 718.5 Q976 747 999.6 762" stroke-width="4.4"/><path d="M999.6 675 Q1023 690 1023 718.5 Q1023 747 999.6 762" stroke-width="4.4"/><path d="M965 693 Q999.6 714 1034 693" stroke-width="4.4"/><path d="M965 744 Q999.6 723 1034 744" stroke-width="4.4"/></g></svg>
<div class="t" style="left:1058.02px;top:646.33px;font-size:124px;color:#cacaca;font-weight:normal;letter-spacing:4.500px;font-family:'Liberation Sans', sans-serif;">rw</div>
<div class="a" style="left:1167px;top:508px;width:746px;height:529px;border:2px solid #d6deef;border-radius:11px;background:#fff;box-shadow:0 2px 6px rgba(0,0,0,0.04)"></div>
<div class="t" style="left:1198.80px;top:549.74px;font-size:40px;color:#2a2a2a;font-weight:normal;letter-spacing:3.528px;font-family:'Liberation Sans', sans-serif;">2/3/25</div>
<div class="t" style="left:1635.47px;top:558.98px;font-size:29px;color:#2a2a2a;font-weight:normal;letter-spacing:-0.050px;font-family:'Liberation Mono', monospace;-webkit-text-stroke:0.5px #2a2a2a;">$6,079,962,334</div>
<div class="a" style="left:1199px;top:607.5px;width:680px;height:2px;background:#d6deef"></div>
<div class="a" style="left:1199px;top:635.1px;width:24px;height:24px;border-radius:50%;background:#1d3f73"></div>
<div class="t" style="left:1238.04px;top:633.40px;font-size:28px;color:#2a2a2a;font-weight:normal;letter-spacing:0.369px;font-family:'Liberation Sans', sans-serif;-webkit-text-stroke:0.25px #2a2a2a;">US Treasury Debt</div>
<div class="t" style="left:1635.47px;top:634.88px;font-size:29px;color:#2a2a2a;font-weight:normal;letter-spacing:-0.050px;font-family:'Liberation Mono', monospace;-webkit-text-stroke:0.5px #2a2a2a;">$3,465,489,164</div>
<div class="a" style="left:1199px;top:677.1px;width:24px;height:24px;border-radius:50%;background:#d4a43e"></div>
<div class="t" style="left:1238.80px;top:675.40px;font-size:28px;color:#2a2a2a;font-weight:normal;letter-spacing:0.783px;font-family:'Liberation Sans', sans-serif;-webkit-text-stroke:0.25px #2a2a2a;">Commodities</div>
<div class="t" style="left:1635.47px;top:676.88px;font-size:29px;color:#2a2a2a;font-weight:normal;letter-spacing:-0.017px;font-family:'Liberation Mono', monospace;-webkit-text-stroke:0.5px #2a2a2a;">$1,141,703,958</div>
<div class="a" style="left:1199px;top:719.1px;width:24px;height:24px;border-radius:50%;background:#3b5ff5"></div>
<div class="t" style="left:1237.90px;top:717.40px;font-size:28px;color:#2a2a2a;font-weight:normal;letter-spacing:0.513px;font-family:'Liberation Sans', sans-serif;-webkit-text-stroke:0.25px #2a2a2a;">Private Credit</div>
<div class="t" style="left:1688.37px;top:718.88px;font-size:29px;color:#2a2a2a;font-weight:normal;letter-spacing:-0.103px;font-family:'Liberation Mono', monospace;-webkit-text-stroke:0.5px #2a2a2a;">$16,496,800</div>
<div class="a" style="left:1199px;top:761.1px;width:24px;height:24px;border-radius:50%;background:#6ec8ea"></div>
<div class="t" style="left:1237.62px;top:759.40px;font-size:28px;color:#2a2a2a;font-weight:normal;letter-spacing:0.634px;font-family:'Liberation Sans', sans-serif;-webkit-text-stroke:0.25px #2a2a2a;">Institutional Alternative Funds</div>
<div class="t" style="left:1670.57px;top:760.88px;font-size:29px;color:#2a2a2a;font-weight:normal;letter-spacing:-0.047px;font-family:'Liberation Mono', monospace;-webkit-text-stroke:0.5px #2a2a2a;">$395,460,618</div>
<div class="a" style="left:1199px;top:803.1px;width:24px;height:24px;border-radius:50%;background:#7b2fdc"></div>
<div class="t" style="left:1238.80px;top:801.40px;font-size:28px;color:#2a2a2a;font-weight:normal;letter-spacing:0.581px;font-family:'Liberation Sans', sans-serif;-webkit-text-stroke:0.25px #2a2a2a;">Corporate Bonds</div>
<div class="t" style="left:1670.57px;top:802.88px;font-size:29px;color:#2a2a2a;font-weight:normal;letter-spacing:-0.057px;font-family:'Liberation Mono', monospace;-webkit-text-stroke:0.5px #2a2a2a;">$221,916,270</div>
<div class="a" style="left:1199px;top:845.1px;width:24px;height:24px;border-radius:50%;background:#b3c3de"></div>
<div class="t" style="left:1238.35px;top:843.40px;font-size:28px;color:#2a2a2a;font-weight:normal;letter-spacing:0.578px;font-family:'Liberation Sans', sans-serif;-webkit-text-stroke:0.25px #2a2a2a;">non-US Government Debt</div>
<div class="t" style="left:1670.57px;top:844.88px;font-size:29px;color:#2a2a2a;font-weight:normal;letter-spacing:-0.092px;font-family:'Liberation Mono', monospace;-webkit-text-stroke:0.5px #2a2a2a;">$120,809,481</div>
<div class="a" style="left:1199px;top:887.1px;width:24px;height:24px;border-radius:50%;background:#e9552a"></div>
<div class="t" style="left:1237.90px;top:885.40px;font-size:28px;color:#2a2a2a;font-weight:normal;letter-spacing:0.499px;font-family:'Liberation Sans', sans-serif;-webkit-text-stroke:0.25px #2a2a2a;">Public Equity</div>
<div class="t" style="left:1670.57px;top:886.88px;font-size:29px;color:#2a2a2a;font-weight:normal;letter-spacing:-0.013px;font-family:'Liberation Mono', monospace;-webkit-text-stroke:0.5px #2a2a2a;">$554,108,597</div>
<div class="a" style="left:1199px;top:929.1px;width:24px;height:24px;border-radius:50%;background:#f7d84a"></div>
<div class="t" style="left:1237.90px;top:927.40px;font-size:28px;color:#2a2a2a;font-weight:normal;letter-spacing:0.402px;font-family:'Liberation Sans', sans-serif;-webkit-text-stroke:0.25px #2a2a2a;">Private Equity</div>
<div class="t" style="left:1688.37px;top:928.88px;font-size:29px;color:#2a2a2a;font-weight:normal;letter-spacing:-0.097px;font-family:'Liberation Mono', monospace;-webkit-text-stroke:0.5px #2a2a2a;">$55,350,513</div>
<div class="a" style="left:1199px;top:971.1px;width:24px;height:24px;border-radius:50%;background:#5580b0"></div>
<div class="t" style="left:1240.14px;top:969.40px;font-size:28px;color:#2a2a2a;font-weight:normal;letter-spacing:0.594px;font-family:'Liberation Sans', sans-serif;-webkit-text-stroke:0.25px #2a2a2a;">Actively-Managed Strategies</div>
<div class="t" style="left:1670.57px;top:970.88px;font-size:29px;color:#2a2a2a;font-weight:normal;letter-spacing:-0.052px;font-family:'Liberation Mono', monospace;-webkit-text-stroke:0.5px #2a2a2a;">$108,626,933</div>
<div class="a" style="left:223px;top:1151.0px;width:24px;height:24px;border-radius:50%;background:#1d3f73"></div>
<div class="t" style="left:262.40px;top:1150.19px;font-size:26px;color:#2f2f33;font-weight:normal;letter-spacing:0.244px;font-family:'Liberation Sans', sans-serif;">US Treasury Debt</div>
<div class="a" style="left:543px;top:1151.0px;width:24px;height:24px;border-radius:50%;background:#d4a43e"></div>
<div class="t" style="left:582.50px;top:1150.19px;font-size:26px;color:#2f2f33;font-weight:normal;letter-spacing:0.613px;font-family:'Liberation Sans', sans-serif;">Commodities</div>
<div class="a" style="left:863px;top:1151.0px;width:24px;height:24px;border-radius:50%;background:#3b5ff5"></div>
<div class="t" style="left:901.37px;top:1150.19px;font-size:26px;color:#2f2f33;font-weight:normal;letter-spacing:0.485px;font-family:'Liberation Sans', sans-serif;">Private Credit</div>
<div class="a" style="left:1183px;top:1151.0px;width:24px;height:24px;border-radius:50%;background:#6ec8ea"></div>
<div class="t" style="left:1220.61px;top:1150.19px;font-size:26px;color:#2f2f33;font-weight:normal;letter-spacing:0.773px;font-family:'Liberation Sans', sans-serif;">Institutional Alter...</div>
<div class="a" style="left:1503px;top:1151.0px;width:24px;height:24px;border-radius:50%;background:#7b2fdc"></div>
<div class="t" style="left:1542.50px;top:1150.19px;font-size:26px;color:#2f2f33;font-weight:normal;letter-spacing:0.520px;font-family:'Liberation Sans', sans-serif;">Corporate Bonds</div>
<div class="a" style="left:1823px;top:1151.0px;width:24px;height:24px;border-radius:50%;background:#b3c3de"></div>
<div class="t" style="left:1862.28px;top:1150.19px;font-size:26px;color:#2f2f33;font-weight:normal;letter-spacing:0.301px;font-family:'Liberation Sans', sans-serif;">non-US Governm...</div>
<div class="a" style="left:223px;top:1189.0px;width:24px;height:24px;border-radius:50%;background:#e9552a"></div>
<div class="t" style="left:262.27px;top:1188.19px;font-size:26px;color:#2f2f33;font-weight:normal;letter-spacing:0.365px;font-family:'Liberation Sans', sans-serif;">Public Equity</div>
<div class="a" style="left:543px;top:1189.0px;width:24px;height:24px;border-radius:50%;background:#f7d84a"></div>
<div class="t" style="left:581.67px;top:1188.19px;font-size:26px;color:#2f2f33;font-weight:normal;letter-spacing:0.353px;font-family:'Liberation Sans', sans-serif;">Private Equity</div>
<div class="a" style="left:863px;top:1189.0px;width:24px;height:24px;border-radius:50%;background:#5580b0"></div>
<div class="t" style="left:903.45px;top:1188.19px;font-size:26px;color:#2f2f33;font-weight:normal;letter-spacing:0.526px;font-family:'Liberation Sans', sans-serif;">Actively-Manage...</div>
<div class="a" style="left:1183px;top:1189.0px;width:24px;height:24px;border-radius:50%;background:#1a10f0"></div>
<div class="t" style="left:1221.83px;top:1188.19px;font-size:26px;color:#2f2f33;font-weight:normal;letter-spacing:0.739px;font-family:'Liberation Sans', sans-serif;">Structured Credit</div>
</body></html>
